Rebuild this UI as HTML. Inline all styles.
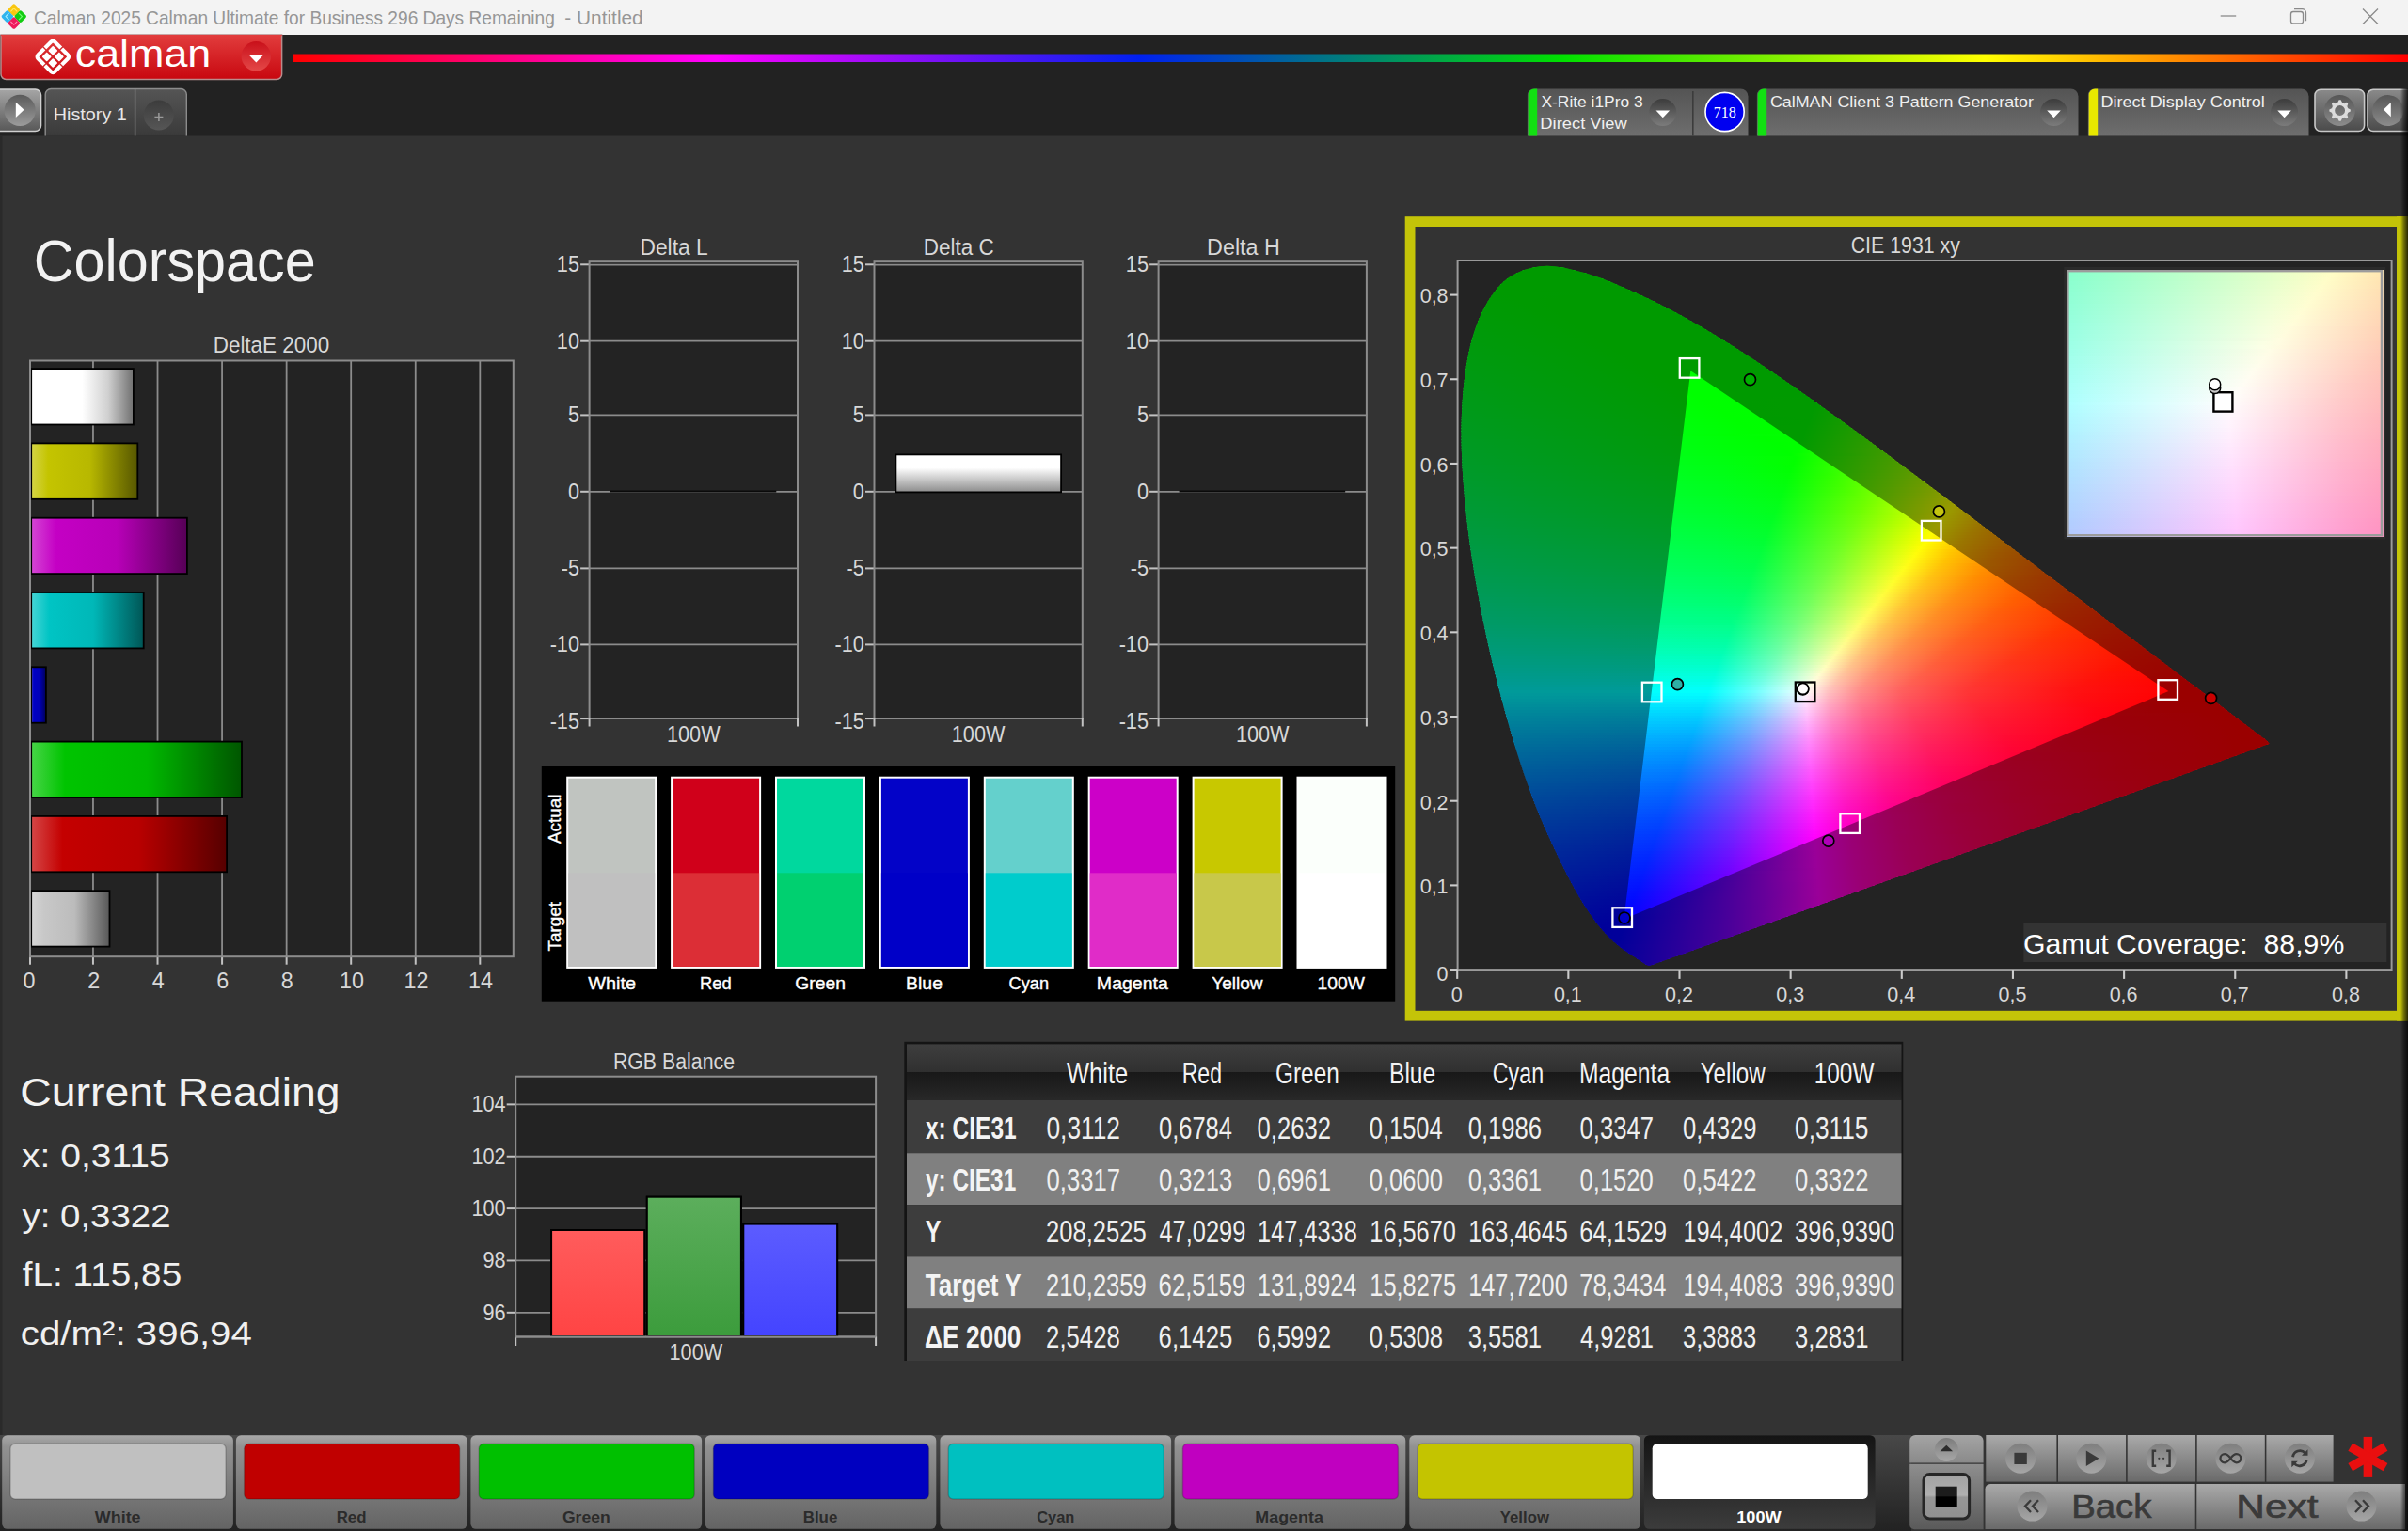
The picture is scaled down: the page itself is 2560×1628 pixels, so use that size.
<!DOCTYPE html><html><head><meta charset="utf-8"><title>Calman</title><style>html,body{margin:0;padding:0;background:#333;overflow:hidden}svg{display:block}</style></head><body><svg width="2560" height="1628" viewBox="0 0 2560 1628" font-family="'Liberation Sans', sans-serif"><defs><linearGradient id="g1" x1="0" y1="0" x2="1" y2="0"><stop offset="0" stop-color="#ff0000"/><stop offset="0.2" stop-color="#ff00ff"/><stop offset="0.4" stop-color="#0020f0"/><stop offset="0.6" stop-color="#00e000"/><stop offset="0.8" stop-color="#ffff00"/><stop offset="1" stop-color="#ff0000"/></linearGradient><linearGradient id="g2" x1="0" y1="0" x2="0" y2="1"><stop offset="0" stop-color="#e23d3d"/><stop offset="1" stop-color="#c8070f"/></linearGradient><linearGradient id="g3" x1="0" y1="0" x2="0" y2="1"><stop offset="0" stop-color="#c9101a"/><stop offset="1" stop-color="#e44848"/></linearGradient><linearGradient id="g4" x1="0" y1="0" x2="0" y2="1"><stop offset="0" stop-color="#a6a6a6"/><stop offset="1" stop-color="#585858"/></linearGradient><linearGradient id="g5" x1="0" y1="0" x2="0" y2="1"><stop offset="0" stop-color="#5a5a5a"/><stop offset="1" stop-color="#9c9c9c"/></linearGradient><linearGradient id="g6" x1="0" y1="0" x2="0" y2="1"><stop offset="0" stop-color="#555555"/><stop offset="1" stop-color="#3a3a3a"/></linearGradient><linearGradient id="g7" x1="0" y1="0" x2="0" y2="1"><stop offset="0" stop-color="#3c3c3c"/><stop offset="1" stop-color="#565656"/></linearGradient><linearGradient id="g8" x1="0" y1="0" x2="0" y2="1"><stop offset="0" stop-color="#545454"/><stop offset="1" stop-color="#6e6e6e"/></linearGradient><linearGradient id="g9" x1="0" y1="0" x2="0" y2="1"><stop offset="0" stop-color="#3c3c3c"/><stop offset="1" stop-color="#7c7c7c"/></linearGradient><linearGradient id="g10" x1="0" y1="0" x2="0" y2="1"><stop offset="0" stop-color="#545454"/><stop offset="1" stop-color="#6e6e6e"/></linearGradient><linearGradient id="g11" x1="0" y1="0" x2="0" y2="1"><stop offset="0" stop-color="#3c3c3c"/><stop offset="1" stop-color="#7c7c7c"/></linearGradient><linearGradient id="g12" x1="0" y1="0" x2="0" y2="1"><stop offset="0" stop-color="#545454"/><stop offset="1" stop-color="#6e6e6e"/></linearGradient><linearGradient id="g13" x1="0" y1="0" x2="0" y2="1"><stop offset="0" stop-color="#3c3c3c"/><stop offset="1" stop-color="#7c7c7c"/></linearGradient><linearGradient id="g14" x1="0" y1="0" x2="0" y2="1"><stop offset="0" stop-color="#8a8a8a"/><stop offset="1" stop-color="#4a4a4a"/></linearGradient><linearGradient id="g15" x1="0" y1="0" x2="0" y2="1"><stop offset="0" stop-color="#565656"/><stop offset="1" stop-color="#8c8c8c"/></linearGradient><linearGradient id="g16" x1="0" y1="0" x2="0" y2="1"><stop offset="0" stop-color="#8a8a8a"/><stop offset="1" stop-color="#4a4a4a"/></linearGradient><linearGradient id="g17" x1="0" y1="0" x2="0" y2="1"><stop offset="0" stop-color="#565656"/><stop offset="1" stop-color="#8c8c8c"/></linearGradient><linearGradient id="g18" x1="0" y1="0" x2="1" y2="0"><stop offset="0" stop-color="#ffffff"/><stop offset="0.5" stop-color="#ffffff"/><stop offset="0.75" stop-color="#d0d0d0"/><stop offset="1" stop-color="#707070"/></linearGradient><linearGradient id="g19" x1="0" y1="0" x2="1" y2="0"><stop offset="0" stop-color="#d5d547"/><stop offset="0.16" stop-color="#c4c400"/><stop offset="0.55" stop-color="#b8b800"/><stop offset="1" stop-color="#565600"/></linearGradient><linearGradient id="g20" x1="0" y1="0" x2="1" y2="0"><stop offset="0" stop-color="#d547d5"/><stop offset="0.16" stop-color="#c400c4"/><stop offset="0.55" stop-color="#b800b8"/><stop offset="1" stop-color="#560056"/></linearGradient><linearGradient id="g21" x1="0" y1="0" x2="1" y2="0"><stop offset="0" stop-color="#47d5d5"/><stop offset="0.16" stop-color="#00c4c4"/><stop offset="0.55" stop-color="#00b8b8"/><stop offset="1" stop-color="#005656"/></linearGradient><linearGradient id="g22" x1="0" y1="0" x2="1" y2="0"><stop offset="0" stop-color="#4747d5"/><stop offset="0.16" stop-color="#0000c4"/><stop offset="0.55" stop-color="#0000b8"/><stop offset="1" stop-color="#000056"/></linearGradient><linearGradient id="g23" x1="0" y1="0" x2="1" y2="0"><stop offset="0" stop-color="#47d547"/><stop offset="0.16" stop-color="#00c400"/><stop offset="0.55" stop-color="#00b800"/><stop offset="1" stop-color="#005600"/></linearGradient><linearGradient id="g24" x1="0" y1="0" x2="1" y2="0"><stop offset="0" stop-color="#d54747"/><stop offset="0.16" stop-color="#c40000"/><stop offset="0.55" stop-color="#b80000"/><stop offset="1" stop-color="#560000"/></linearGradient><linearGradient id="g25" x1="0" y1="0" x2="1" y2="0"><stop offset="0" stop-color="#d7d7d7"/><stop offset="0.16" stop-color="#c8c8c8"/><stop offset="0.55" stop-color="#bcbcbc"/><stop offset="1" stop-color="#585858"/></linearGradient><linearGradient id="g26" x1="0" y1="0" x2="0" y2="1"><stop offset="0" stop-color="#ffffff"/><stop offset="0.35" stop-color="#ffffff"/><stop offset="1" stop-color="#8c8c8c"/></linearGradient><clipPath id="loc"><path d="M1754.9 1026.62C1754.88 1026.62 1754.84 1026.6 1754.78 1026.62C1754.72 1026.63 1754.62 1026.69 1754.54 1026.71C1754.47 1026.72 1754.41 1026.69 1754.31 1026.71C1754.21 1026.72 1754.07 1026.78 1753.95 1026.79C1753.84 1026.81 1753.74 1026.79 1753.6 1026.79C1753.46 1026.79 1753.3 1026.79 1753.13 1026.79C1752.95 1026.79 1752.77 1026.84 1752.54 1026.79C1752.3 1026.75 1752.06 1026.68 1751.71 1026.53C1751.35 1026.38 1750.9 1026.17 1750.41 1025.9C1749.92 1025.63 1749.42 1025.33 1748.76 1024.91C1748.09 1024.49 1747.28 1023.98 1746.39 1023.39C1745.51 1022.79 1744.58 1022.1 1743.44 1021.32C1742.3 1020.55 1741.08 1019.74 1739.54 1018.72C1738 1017.71 1736.21 1016.56 1734.22 1015.22C1732.23 1013.89 1730.09 1012.53 1727.61 1010.74C1725.13 1008.95 1722.39 1007.03 1719.34 1004.46C1716.28 1001.89 1713.21 999.51 1709.29 995.31C1705.37 991.11 1700.92 986.27 1695.82 979.26C1690.72 972.25 1685.15 964.45 1678.69 953.25C1672.23 942.05 1665.12 929.11 1657.07 912.08C1649.02 895.06 1639.41 875.35 1630.37 851.09C1621.33 826.83 1611.74 798.2 1602.84 766.51C1593.94 734.82 1584.29 697.33 1576.97 660.95C1569.64 624.57 1562.75 584.4 1558.89 548.21C1555.03 512.02 1552.69 475.47 1553.81 443.81C1554.93 412.15 1558.73 381.74 1565.62 358.25C1572.51 334.75 1583.27 315.31 1595.16 302.82C1607.05 290.32 1622.16 285.39 1636.99 283.26C1651.81 281.14 1668.3 285.91 1684.13 290.08C1699.96 294.25 1716.48 301.62 1731.98 308.29C1747.48 314.96 1762.36 322.37 1777.11 330.08C1791.86 337.8 1806.12 346 1820.47 354.57C1834.83 363.13 1849.06 372.21 1863.24 381.48C1877.42 390.74 1891.46 400.4 1905.54 410.18C1919.62 419.95 1933.64 430 1947.72 440.13C1961.8 450.27 1975.96 460.63 1990.02 470.99C2004.08 481.35 2018.1 491.85 2032.08 502.29C2046.06 512.72 2060.1 523.22 2073.9 533.59C2087.71 543.96 2101.43 554.35 2114.9 564.53C2128.37 574.71 2141.72 584.83 2154.72 594.67C2167.72 604.5 2180.53 614.22 2192.88 623.55C2205.23 632.88 2217.36 641.98 2228.8 650.64C2240.24 659.29 2251.33 667.75 2261.53 675.48C2271.73 683.21 2281.08 690.26 2290 697C2298.92 703.75 2307.41 710.17 2315.05 715.93C2322.69 721.68 2329.56 726.8 2335.84 731.54C2342.12 736.27 2347.68 740.52 2352.74 744.36C2357.8 748.2 2362.17 751.54 2366.21 754.59C2370.24 757.64 2373.73 760.22 2376.96 762.66C2380.19 765.09 2382.95 767.2 2385.58 769.21C2388.22 771.21 2390.61 773.02 2392.79 774.68C2394.98 776.34 2396.93 777.83 2398.7 779.16C2400.47 780.49 2402.05 781.63 2403.42 782.66C2404.8 783.69 2405.93 784.56 2406.97 785.35C2408.01 786.14 2408.94 786.75 2409.69 787.41C2410.43 788.07 2410.95 788.73 2411.46 789.3C2411.97 789.86 2412.54 790.57 2412.76 790.82Z"/></clipPath><linearGradient id="c0" gradientUnits="userSpaceOnUse" x1="1625" x2="1666" y1="0" y2="0"><stop offset="0" stop-color="#00ff00"/><stop offset="1" stop-color="#00ff00"/></linearGradient><linearGradient id="c1" gradientUnits="userSpaceOnUse" x1="1615" x2="1679" y1="0" y2="0"><stop offset="0" stop-color="#00ff00"/><stop offset="1" stop-color="#00ff00"/></linearGradient><linearGradient id="c2" gradientUnits="userSpaceOnUse" x1="1609" x2="1690" y1="0" y2="0"><stop offset="0" stop-color="#00ff00"/><stop offset="1" stop-color="#00ff00"/></linearGradient><linearGradient id="c3" gradientUnits="userSpaceOnUse" x1="1603" x2="1699" y1="0" y2="0"><stop offset="0" stop-color="#00ff00"/><stop offset="1" stop-color="#00ff00"/></linearGradient><linearGradient id="c4" gradientUnits="userSpaceOnUse" x1="1599" x2="1707" y1="0" y2="0"><stop offset="0" stop-color="#00ff00"/><stop offset="1" stop-color="#00ff00"/></linearGradient><linearGradient id="c5" gradientUnits="userSpaceOnUse" x1="1596" x2="1715" y1="0" y2="0"><stop offset="0" stop-color="#00ff00"/><stop offset="1" stop-color="#00ff00"/></linearGradient><linearGradient id="c6" gradientUnits="userSpaceOnUse" x1="1592" x2="1722" y1="0" y2="0"><stop offset="0" stop-color="#00ff00"/><stop offset="1" stop-color="#00ff00"/></linearGradient><linearGradient id="c7" gradientUnits="userSpaceOnUse" x1="1590" x2="1729" y1="0" y2="0"><stop offset="0" stop-color="#00ff00"/><stop offset="1" stop-color="#00ff00"/></linearGradient><linearGradient id="c8" gradientUnits="userSpaceOnUse" x1="1587" x2="1736" y1="0" y2="0"><stop offset="0" stop-color="#00ff01"/><stop offset="1" stop-color="#00ff00"/></linearGradient><linearGradient id="c9" gradientUnits="userSpaceOnUse" x1="1585" x2="1743" y1="0" y2="0"><stop offset="0" stop-color="#00ff02"/><stop offset="1" stop-color="#00ff00"/></linearGradient><linearGradient id="c10" gradientUnits="userSpaceOnUse" x1="1583" x2="1749" y1="0" y2="0"><stop offset="0" stop-color="#00ff03"/><stop offset="1" stop-color="#00ff00"/></linearGradient><linearGradient id="c11" gradientUnits="userSpaceOnUse" x1="1581" x2="1756" y1="0" y2="0"><stop offset="0" stop-color="#00ff04"/><stop offset=".6" stop-color="#00ff00"/><stop offset="1" stop-color="#00ff00"/></linearGradient><linearGradient id="c12" gradientUnits="userSpaceOnUse" x1="1579" x2="1762" y1="0" y2="0"><stop offset="0" stop-color="#00ff05"/><stop offset=".459" stop-color="#00ff00"/><stop offset="1" stop-color="#00ff00"/></linearGradient><linearGradient id="c13" gradientUnits="userSpaceOnUse" x1="1577" x2="1768" y1="0" y2="0"><stop offset="0" stop-color="#00ff06"/><stop offset=".4293" stop-color="#00ff00"/><stop offset="1" stop-color="#00ff00"/></linearGradient><linearGradient id="c14" gradientUnits="userSpaceOnUse" x1="1576" x2="1774" y1="0" y2="0"><stop offset="0" stop-color="#00ff07"/><stop offset=".4192" stop-color="#00ff00"/><stop offset="1" stop-color="#00ff00"/></linearGradient><linearGradient id="c15" gradientUnits="userSpaceOnUse" x1="1574" x2="1779" y1="0" y2="0"><stop offset="0" stop-color="#00ff08"/><stop offset=".4244" stop-color="#00ff00"/><stop offset="1" stop-color="#00ff00"/></linearGradient><linearGradient id="c16" gradientUnits="userSpaceOnUse" x1="1573" x2="1785" y1="0" y2="0"><stop offset="0" stop-color="#00ff09"/><stop offset=".4292" stop-color="#00ff00"/><stop offset="1" stop-color="#00ff00"/></linearGradient><linearGradient id="c17" gradientUnits="userSpaceOnUse" x1="1571" x2="1791" y1="0" y2="0"><stop offset="0" stop-color="#00ff0a"/><stop offset=".4364" stop-color="#00ff00"/><stop offset="1" stop-color="#00ff00"/></linearGradient><linearGradient id="c18" gradientUnits="userSpaceOnUse" x1="1570" x2="1796" y1="0" y2="0"><stop offset="0" stop-color="#00ff0b"/><stop offset=".4469" stop-color="#00ff00"/><stop offset="1" stop-color="#00ff00"/></linearGradient><linearGradient id="c19" gradientUnits="userSpaceOnUse" x1="1569" x2="1801" y1="0" y2="0"><stop offset="0" stop-color="#00ff0c"/><stop offset=".4569" stop-color="#00ff00"/><stop offset="1" stop-color="#00ff00"/></linearGradient><linearGradient id="c20" gradientUnits="userSpaceOnUse" x1="1568" x2="1807" y1="0" y2="0"><stop offset="0" stop-color="#00ff0d"/><stop offset=".4644" stop-color="#00ff00"/><stop offset="1" stop-color="#00ff00"/></linearGradient><linearGradient id="c21" gradientUnits="userSpaceOnUse" x1="1566" x2="1812" y1="0" y2="0"><stop offset="0" stop-color="#00ff0e"/><stop offset=".4797" stop-color="#00ff00"/><stop offset="1" stop-color="#00ff00"/></linearGradient><linearGradient id="c22" gradientUnits="userSpaceOnUse" x1="1565" x2="1817" y1="0" y2="0"><stop offset="0" stop-color="#00ff0f"/><stop offset=".4881" stop-color="#00ff00"/><stop offset="1" stop-color="#00ff00"/></linearGradient><linearGradient id="c23" gradientUnits="userSpaceOnUse" x1="1564" x2="1822" y1="0" y2="0"><stop offset="0" stop-color="#00ff10"/><stop offset=".5" stop-color="#00ff00"/><stop offset="1" stop-color="#00ff00"/></linearGradient><linearGradient id="c24" gradientUnits="userSpaceOnUse" x1="1564" x2="1827" y1="0" y2="0"><stop offset="0" stop-color="#00ff11"/><stop offset=".5057" stop-color="#00ff00"/><stop offset="1" stop-color="#00ff00"/></linearGradient><linearGradient id="c25" gradientUnits="userSpaceOnUse" x1="1563" x2="1832" y1="0" y2="0"><stop offset="0" stop-color="#00ff12"/><stop offset=".5167" stop-color="#00ff00"/><stop offset="1" stop-color="#00ff00"/></linearGradient><linearGradient id="c26" gradientUnits="userSpaceOnUse" x1="1562" x2="1837" y1="0" y2="0"><stop offset="0" stop-color="#00ff13"/><stop offset=".5273" stop-color="#00ff00"/><stop offset="1" stop-color="#00ff00"/></linearGradient><linearGradient id="c27" gradientUnits="userSpaceOnUse" x1="1561" x2="1842" y1="0" y2="0"><stop offset="0" stop-color="#00ff14"/><stop offset=".5338" stop-color="#00ff00"/><stop offset="1" stop-color="#00ff00"/></linearGradient><linearGradient id="c28" gradientUnits="userSpaceOnUse" x1="1560" x2="1846" y1="0" y2="0"><stop offset="0" stop-color="#00ff15"/><stop offset=".5455" stop-color="#00ff00"/><stop offset="1" stop-color="#00ff00"/></linearGradient><linearGradient id="c29" gradientUnits="userSpaceOnUse" x1="1560" x2="1851" y1="0" y2="0"><stop offset="0" stop-color="#00ff16"/><stop offset=".5533" stop-color="#00ff00"/><stop offset="1" stop-color="#00ff00"/></linearGradient><linearGradient id="c30" gradientUnits="userSpaceOnUse" x1="1559" x2="1856" y1="0" y2="0"><stop offset="0" stop-color="#00ff17"/><stop offset=".5623" stop-color="#00ff00"/><stop offset="1" stop-color="#00ff00"/></linearGradient><linearGradient id="c31" gradientUnits="userSpaceOnUse" x1="1558" x2="1860" y1="0" y2="0"><stop offset="0" stop-color="#00ff18"/><stop offset=".5695" stop-color="#00ff00"/><stop offset="1" stop-color="#00ff00"/></linearGradient><linearGradient id="c32" gradientUnits="userSpaceOnUse" x1="1558" x2="1865" y1="0" y2="0"><stop offset="0" stop-color="#00ff19"/><stop offset=".5765" stop-color="#00ff00"/><stop offset="1" stop-color="#00ff00"/></linearGradient><linearGradient id="c33" gradientUnits="userSpaceOnUse" x1="1557" x2="1870" y1="0" y2="0"><stop offset="0" stop-color="#00ff1a"/><stop offset=".5847" stop-color="#00ff00"/><stop offset="1" stop-color="#00ff00"/></linearGradient><linearGradient id="c34" gradientUnits="userSpaceOnUse" x1="1557" x2="1874" y1="0" y2="0"><stop offset="0" stop-color="#00ff1b"/><stop offset=".5931" stop-color="#00ff00"/><stop offset="1" stop-color="#00ff00"/></linearGradient><linearGradient id="c35" gradientUnits="userSpaceOnUse" x1="1556" x2="1879" y1="0" y2="0"><stop offset="0" stop-color="#00ff1c"/><stop offset=".5975" stop-color="#00ff00"/><stop offset="1" stop-color="#00ff00"/></linearGradient><linearGradient id="c36" gradientUnits="userSpaceOnUse" x1="1556" x2="1883" y1="0" y2="0"><stop offset="0" stop-color="#00ff1d"/><stop offset=".6055" stop-color="#00ff00"/><stop offset="1" stop-color="#00ff00"/></linearGradient><linearGradient id="c37" gradientUnits="userSpaceOnUse" x1="1555" x2="1887" y1="0" y2="0"><stop offset="0" stop-color="#00ff1e"/><stop offset=".6145" stop-color="#00ff00"/><stop offset="1" stop-color="#00ff00"/></linearGradient><linearGradient id="c38" gradientUnits="userSpaceOnUse" x1="1555" x2="1892" y1="0" y2="0"><stop offset="0" stop-color="#00ff1f"/><stop offset=".6202" stop-color="#00ff00"/><stop offset="1" stop-color="#00ff00"/></linearGradient><linearGradient id="c39" gradientUnits="userSpaceOnUse" x1="1555" x2="1896" y1="0" y2="0"><stop offset="0" stop-color="#00ff20"/><stop offset=".6276" stop-color="#00ff00"/><stop offset="1" stop-color="#00ff00"/></linearGradient><linearGradient id="c40" gradientUnits="userSpaceOnUse" x1="1554" x2="1901" y1="0" y2="0"><stop offset="0" stop-color="#00ff21"/><stop offset=".6311" stop-color="#00ff00"/><stop offset="1" stop-color="#00ff00"/></linearGradient><linearGradient id="c41" gradientUnits="userSpaceOnUse" x1="1554" x2="1905" y1="0" y2="0"><stop offset="0" stop-color="#00ff22"/><stop offset=".6382" stop-color="#00ff00"/><stop offset="1" stop-color="#00ff00"/></linearGradient><linearGradient id="c42" gradientUnits="userSpaceOnUse" x1="1554" x2="1909" y1="0" y2="0"><stop offset="0" stop-color="#00ff23"/><stop offset=".6451" stop-color="#00ff00"/><stop offset="1" stop-color="#00ff00"/></linearGradient><linearGradient id="c43" gradientUnits="userSpaceOnUse" x1="1553" x2="1914" y1="0" y2="0"><stop offset="0" stop-color="#00ff24"/><stop offset=".651" stop-color="#00ff00"/><stop offset="1" stop-color="#00ff00"/></linearGradient><linearGradient id="c44" gradientUnits="userSpaceOnUse" x1="1553" x2="1918" y1="0" y2="0"><stop offset="0" stop-color="#00ff25"/><stop offset=".6575" stop-color="#00ff00"/><stop offset="1" stop-color="#00ff00"/></linearGradient><linearGradient id="c45" gradientUnits="userSpaceOnUse" x1="1553" x2="1922" y1="0" y2="0"><stop offset="0" stop-color="#00ff26"/><stop offset=".664" stop-color="#00ff00"/><stop offset="1" stop-color="#00ff00"/></linearGradient><linearGradient id="c46" gradientUnits="userSpaceOnUse" x1="1552" x2="1926" y1="0" y2="0"><stop offset="0" stop-color="#00ff27"/><stop offset=".6684" stop-color="#00ff00"/><stop offset="1" stop-color="#00ff00"/></linearGradient><linearGradient id="c47" gradientUnits="userSpaceOnUse" x1="1552" x2="1931" y1="0" y2="0"><stop offset="0" stop-color="#00ff28"/><stop offset=".6728" stop-color="#00ff00"/><stop offset="1" stop-color="#02ff00"/></linearGradient><linearGradient id="c48" gradientUnits="userSpaceOnUse" x1="1552" x2="1935" y1="0" y2="0"><stop offset="0" stop-color="#00ff29"/><stop offset=".6789" stop-color="#00ff00"/><stop offset=".9896" stop-color="#03ff00"/><stop offset="1" stop-color="#06ff00"/></linearGradient><linearGradient id="c49" gradientUnits="userSpaceOnUse" x1="1552" x2="1939" y1="0" y2="0"><stop offset="0" stop-color="#00ff2a"/><stop offset=".6848" stop-color="#00ff00"/><stop offset=".9767" stop-color="#03ff00"/><stop offset="1" stop-color="#0aff00"/></linearGradient><linearGradient id="c50" gradientUnits="userSpaceOnUse" x1="1552" x2="1943" y1="0" y2="0"><stop offset="0" stop-color="#00ff2b"/><stop offset=".6905" stop-color="#00ff00"/><stop offset=".9642" stop-color="#03ff00"/><stop offset="1" stop-color="#0fff00"/></linearGradient><linearGradient id="c51" gradientUnits="userSpaceOnUse" x1="1552" x2="1947" y1="0" y2="0"><stop offset="0" stop-color="#00ff2c"/><stop offset=".6962" stop-color="#00ff00"/><stop offset=".9519" stop-color="#03ff00"/><stop offset="1" stop-color="#14ff00"/></linearGradient><linearGradient id="c52" gradientUnits="userSpaceOnUse" x1="1551" x2="1951" y1="0" y2="0"><stop offset="0" stop-color="#00ff2d"/><stop offset=".7025" stop-color="#00ff00"/><stop offset=".94" stop-color="#03ff00"/><stop offset="1" stop-color="#18ff00"/></linearGradient><linearGradient id="c53" gradientUnits="userSpaceOnUse" x1="1551" x2="1956" y1="0" y2="0"><stop offset="0" stop-color="#00ff2e"/><stop offset=".7037" stop-color="#00ff00"/><stop offset=".9259" stop-color="#03ff00"/><stop offset="1" stop-color="#1eff00"/></linearGradient><linearGradient id="c54" gradientUnits="userSpaceOnUse" x1="1551" x2="1960" y1="0" y2="0"><stop offset="0" stop-color="#00ff2f"/><stop offset=".709" stop-color="#00ff00"/><stop offset=".912" stop-color="#02ff00"/><stop offset="1" stop-color="#23ff00"/></linearGradient><linearGradient id="c55" gradientUnits="userSpaceOnUse" x1="1551" x2="1964" y1="0" y2="0"><stop offset="0" stop-color="#00ff31"/><stop offset=".7143" stop-color="#00ff00"/><stop offset=".9007" stop-color="#02ff00"/><stop offset="1" stop-color="#28ff00"/></linearGradient><linearGradient id="c56" gradientUnits="userSpaceOnUse" x1="1551" x2="1968" y1="0" y2="0"><stop offset="0" stop-color="#00ff32"/><stop offset=".7194" stop-color="#00ff00"/><stop offset=".8897" stop-color="#02ff00"/><stop offset="1" stop-color="#2dff00"/></linearGradient><linearGradient id="c57" gradientUnits="userSpaceOnUse" x1="1551" x2="1972" y1="0" y2="0"><stop offset="0" stop-color="#00ff33"/><stop offset=".7245" stop-color="#00ff00"/><stop offset=".8789" stop-color="#03ff00"/><stop offset="1" stop-color="#33ff00"/></linearGradient><linearGradient id="c58" gradientUnits="userSpaceOnUse" x1="1551" x2="1976" y1="0" y2="0"><stop offset="0" stop-color="#00ff34"/><stop offset=".7294" stop-color="#00ff00"/><stop offset=".8682" stop-color="#03ff00"/><stop offset="1" stop-color="#38ff00"/></linearGradient><linearGradient id="c59" gradientUnits="userSpaceOnUse" x1="1551" x2="1980" y1="0" y2="0"><stop offset="0" stop-color="#00ff35"/><stop offset=".7319" stop-color="#00ff00"/><stop offset=".8578" stop-color="#03ff00"/><stop offset="1" stop-color="#3dff00"/></linearGradient><linearGradient id="c60" gradientUnits="userSpaceOnUse" x1="1551" x2="1984" y1="0" y2="0"><stop offset="0" stop-color="#00ff36"/><stop offset=".6721" stop-color="#00ff03"/><stop offset=".8476" stop-color="#03ff00"/><stop offset="1" stop-color="#43ff00"/></linearGradient><linearGradient id="c61" gradientUnits="userSpaceOnUse" x1="1551" x2="1988" y1="0" y2="0"><stop offset="0" stop-color="#00ff37"/><stop offset=".7414" stop-color="#00ff00"/><stop offset=".8375" stop-color="#03ff00"/><stop offset="1" stop-color="#49ff00"/></linearGradient><linearGradient id="c62" gradientUnits="userSpaceOnUse" x1="1551" x2="1993" y1="0" y2="0"><stop offset="0" stop-color="#00ff39"/><stop offset=".7443" stop-color="#00ff00"/><stop offset=".8258" stop-color="#03ff00"/><stop offset="1" stop-color="#50ff00"/></linearGradient><linearGradient id="c63" gradientUnits="userSpaceOnUse" x1="1551" x2="1997" y1="0" y2="0"><stop offset="0" stop-color="#00ff3a"/><stop offset=".6457" stop-color="#00ff07"/><stop offset=".7623" stop-color="#00ff00"/><stop offset=".8161" stop-color="#03ff00"/><stop offset="1" stop-color="#56ff00"/></linearGradient><linearGradient id="c64" gradientUnits="userSpaceOnUse" x1="1551" x2="2001" y1="0" y2="0"><stop offset="0" stop-color="#00ff3b"/><stop offset=".64" stop-color="#00ff08"/><stop offset=".76" stop-color="#00ff00"/><stop offset=".8067" stop-color="#03ff00"/><stop offset="1" stop-color="#5cff00"/></linearGradient><linearGradient id="c65" gradientUnits="userSpaceOnUse" x1="1551" x2="2005" y1="0" y2="0"><stop offset="0" stop-color="#00ff3c"/><stop offset=".6322" stop-color="#00ff09"/><stop offset=".7599" stop-color="#00ff00"/><stop offset=".7974" stop-color="#03ff00"/><stop offset="1" stop-color="#63ff00"/></linearGradient><linearGradient id="c66" gradientUnits="userSpaceOnUse" x1="1551" x2="2009" y1="0" y2="0"><stop offset="0" stop-color="#00ff3e"/><stop offset=".6245" stop-color="#00ff0b"/><stop offset=".762" stop-color="#00ff00"/><stop offset=".7904" stop-color="#05ff00"/><stop offset="1" stop-color="#69ff00"/></linearGradient><linearGradient id="c67" gradientUnits="userSpaceOnUse" x1="1551" x2="2013" y1="0" y2="0"><stop offset="0" stop-color="#00ff3f"/><stop offset=".6169" stop-color="#00ff0c"/><stop offset=".7641" stop-color="#00ff00"/><stop offset=".9004" stop-color="#3cff00"/><stop offset="1" stop-color="#70ff00"/></linearGradient><linearGradient id="c68" gradientUnits="userSpaceOnUse" x1="1552" x2="2017" y1="0" y2="0"><stop offset="0" stop-color="#00ff40"/><stop offset=".6108" stop-color="#00ff0e"/><stop offset=".7677" stop-color="#03ff00"/><stop offset=".9871" stop-color="#6fff00"/><stop offset="1" stop-color="#77ff00"/></linearGradient><linearGradient id="c69" gradientUnits="userSpaceOnUse" x1="1552" x2="2021" y1="0" y2="0"><stop offset="0" stop-color="#00ff41"/><stop offset=".6055" stop-color="#00ff0f"/><stop offset=".7591" stop-color="#03ff00"/><stop offset=".9765" stop-color="#70ff00"/><stop offset="1" stop-color="#7eff00"/></linearGradient><linearGradient id="c70" gradientUnits="userSpaceOnUse" x1="1552" x2="2025" y1="0" y2="0"><stop offset="0" stop-color="#00ff42"/><stop offset=".5983" stop-color="#00ff10"/><stop offset=".7505" stop-color="#03ff00"/><stop offset=".9641" stop-color="#70ff00"/><stop offset="1" stop-color="#85ff00"/></linearGradient><linearGradient id="c71" gradientUnits="userSpaceOnUse" x1="1552" x2="2029" y1="0" y2="0"><stop offset="0" stop-color="#00ff44"/><stop offset=".5912" stop-color="#00ff12"/><stop offset=".74" stop-color="#02ff01"/><stop offset=".9518" stop-color="#70ff00"/><stop offset="1" stop-color="#8cff00"/></linearGradient><linearGradient id="c72" gradientUnits="userSpaceOnUse" x1="1552" x2="2033" y1="0" y2="0"><stop offset="0" stop-color="#00ff45"/><stop offset=".5863" stop-color="#00ff13"/><stop offset=".7318" stop-color="#02ff02"/><stop offset=".9397" stop-color="#6fff00"/><stop offset="1" stop-color="#94ff00"/></linearGradient><linearGradient id="c73" gradientUnits="userSpaceOnUse" x1="1552" x2="2037" y1="0" y2="0"><stop offset="0" stop-color="#00ff46"/><stop offset=".5794" stop-color="#00ff15"/><stop offset=".7237" stop-color="#02ff04"/><stop offset=".8577" stop-color="#47ff00"/><stop offset="1" stop-color="#9cff00"/></linearGradient><linearGradient id="c74" gradientUnits="userSpaceOnUse" x1="1552" x2="2041" y1="0" y2="0"><stop offset="0" stop-color="#00ff48"/><stop offset=".5726" stop-color="#00ff16"/><stop offset=".7157" stop-color="#03ff06"/><stop offset=".8098" stop-color="#32ff00"/><stop offset=".998" stop-color="#a2ff00"/><stop offset="1" stop-color="#a4ff00"/></linearGradient><linearGradient id="c75" gradientUnits="userSpaceOnUse" x1="1553" x2="2045" y1="0" y2="0"><stop offset="0" stop-color="#00ff49"/><stop offset=".5671" stop-color="#00ff18"/><stop offset=".7073" stop-color="#03ff07"/><stop offset=".8008" stop-color="#33ff00"/><stop offset=".9858" stop-color="#a2ff00"/><stop offset="1" stop-color="#acff00"/></linearGradient><linearGradient id="c76" gradientUnits="userSpaceOnUse" x1="1553" x2="2049" y1="0" y2="0"><stop offset="0" stop-color="#00ff4a"/><stop offset=".5625" stop-color="#00ff19"/><stop offset=".6996" stop-color="#03ff09"/><stop offset=".8004" stop-color="#38ff00"/><stop offset=".9819" stop-color="#a8ff00"/><stop offset="1" stop-color="#b4ff00"/></linearGradient><linearGradient id="c77" gradientUnits="userSpaceOnUse" x1="1553" x2="2053" y1="0" y2="0"><stop offset="0" stop-color="#00ff4c"/><stop offset=".556" stop-color="#00ff1b"/><stop offset=".692" stop-color="#03ff0a"/><stop offset=".8" stop-color="#3dff00"/><stop offset=".978" stop-color="#adff00"/><stop offset="1" stop-color="#bdff00"/></linearGradient><linearGradient id="c78" gradientUnits="userSpaceOnUse" x1="1553" x2="2057" y1="0" y2="0"><stop offset="0" stop-color="#00ff4d"/><stop offset=".5496" stop-color="#00ff1d"/><stop offset=".6845" stop-color="#03ff0c"/><stop offset=".8016" stop-color="#43ff00"/><stop offset=".9742" stop-color="#b3ff00"/><stop offset="1" stop-color="#c6ff00"/></linearGradient><linearGradient id="c79" gradientUnits="userSpaceOnUse" x1="1553" x2="2061" y1="0" y2="0"><stop offset="0" stop-color="#00ff4f"/><stop offset=".5453" stop-color="#00ff1e"/><stop offset=".6772" stop-color="#03ff0e"/><stop offset=".8031" stop-color="#4aff00"/><stop offset=".9724" stop-color="#bbff00"/><stop offset="1" stop-color="#cfff00"/></linearGradient><linearGradient id="c80" gradientUnits="userSpaceOnUse" x1="1554" x2="2065" y1="0" y2="0"><stop offset="0" stop-color="#00ff50"/><stop offset=".5401" stop-color="#00ff20"/><stop offset=".6673" stop-color="#02ff10"/><stop offset=".8063" stop-color="#51ff00"/><stop offset=".9706" stop-color="#c2ff00"/><stop offset="1" stop-color="#d9ff00"/></linearGradient><linearGradient id="c81" gradientUnits="userSpaceOnUse" x1="1554" x2="2069" y1="0" y2="0"><stop offset="0" stop-color="#00ff51"/><stop offset=".534" stop-color="#00ff21"/><stop offset=".6602" stop-color="#02ff12"/><stop offset=".8078" stop-color="#58ff00"/><stop offset=".9689" stop-color="#caff00"/><stop offset="1" stop-color="#e3ff00"/></linearGradient><linearGradient id="c82" gradientUnits="userSpaceOnUse" x1="1554" x2="2073" y1="0" y2="0"><stop offset="0" stop-color="#00ff53"/><stop offset=".5299" stop-color="#00ff23"/><stop offset=".6532" stop-color="#02ff13"/><stop offset=".8112" stop-color="#61ff00"/><stop offset=".9672" stop-color="#d2ff00"/><stop offset="1" stop-color="#edff00"/></linearGradient><linearGradient id="c83" gradientUnits="userSpaceOnUse" x1="1554" x2="2077" y1="0" y2="0"><stop offset="0" stop-color="#00ff54"/><stop offset=".5239" stop-color="#00ff25"/><stop offset=".6463" stop-color="#03ff15"/><stop offset=".8145" stop-color="#69ff00"/><stop offset=".9675" stop-color="#dcff00"/><stop offset="1" stop-color="#f7ff00"/></linearGradient><linearGradient id="c84" gradientUnits="userSpaceOnUse" x1="1555" x2="2081" y1="0" y2="0"><stop offset="0" stop-color="#00ff56"/><stop offset=".519" stop-color="#00ff26"/><stop offset=".6388" stop-color="#03ff17"/><stop offset=".8137" stop-color="#6fff00"/><stop offset=".9639" stop-color="#e2ff00"/><stop offset="1" stop-color="#fffc00"/></linearGradient><linearGradient id="c85" gradientUnits="userSpaceOnUse" x1="1555" x2="2085" y1="0" y2="0"><stop offset="0" stop-color="#00ff57"/><stop offset=".5151" stop-color="#00ff28"/><stop offset=".6321" stop-color="#03ff19"/><stop offset=".8057" stop-color="#70ff00"/><stop offset=".9528" stop-color="#e3ff00"/><stop offset=".9868" stop-color="#fffd00"/><stop offset="1" stop-color="#fff200"/></linearGradient><linearGradient id="c86" gradientUnits="userSpaceOnUse" x1="1555" x2="2089" y1="0" y2="0"><stop offset="0" stop-color="#00ff59"/><stop offset=".5094" stop-color="#00ff2a"/><stop offset=".6255" stop-color="#03ff1b"/><stop offset=".7959" stop-color="#70ff01"/><stop offset=".9419" stop-color="#e3ff00"/><stop offset=".9757" stop-color="#fffc00"/><stop offset="1" stop-color="#ffe800"/></linearGradient><linearGradient id="c87" gradientUnits="userSpaceOnUse" x1="1556" x2="2093" y1="0" y2="0"><stop offset="0" stop-color="#00ff5a"/><stop offset=".5047" stop-color="#00ff2b"/><stop offset=".6182" stop-color="#03ff1d"/><stop offset=".7858" stop-color="#6fff03"/><stop offset=".9292" stop-color="#e2ff00"/><stop offset=".9646" stop-color="#fffc00"/><stop offset="1" stop-color="#ffde00"/></linearGradient><linearGradient id="c88" gradientUnits="userSpaceOnUse" x1="1556" x2="2097" y1="0" y2="0"><stop offset="0" stop-color="#00ff5c"/><stop offset=".5009" stop-color="#00ff2d"/><stop offset=".61" stop-color="#02ff1f"/><stop offset=".7763" stop-color="#6fff05"/><stop offset=".8466" stop-color="#a5ff00"/><stop offset=".9519" stop-color="#fffd00"/><stop offset="1" stop-color="#ffd500"/></linearGradient><linearGradient id="c89" gradientUnits="userSpaceOnUse" x1="1556" x2="2101" y1="0" y2="0"><stop offset="0" stop-color="#00ff5d"/><stop offset=".4954" stop-color="#00ff2f"/><stop offset=".6037" stop-color="#02ff21"/><stop offset=".767" stop-color="#6fff08"/><stop offset=".8385" stop-color="#a7ff00"/><stop offset=".9413" stop-color="#fffc00"/><stop offset="1" stop-color="#ffcd00"/></linearGradient><linearGradient id="c90" gradientUnits="userSpaceOnUse" x1="1557" x2="2105" y1="0" y2="0"><stop offset="0" stop-color="#00ff5f"/><stop offset=".4909" stop-color="#00ff31"/><stop offset=".5967" stop-color="#02ff23"/><stop offset=".7591" stop-color="#70ff0a"/><stop offset=".8358" stop-color="#adff00"/><stop offset=".9288" stop-color="#fffd00"/><stop offset="1" stop-color="#ffc500"/></linearGradient><linearGradient id="c91" gradientUnits="userSpaceOnUse" x1="1557" x2="2109" y1="0" y2="0"><stop offset="0" stop-color="#00ff61"/><stop offset=".4873" stop-color="#00ff32"/><stop offset=".5906" stop-color="#02ff25"/><stop offset=".75" stop-color="#6fff0c"/><stop offset=".837" stop-color="#b6ff00"/><stop offset=".9185" stop-color="#fffc00"/><stop offset=".9928" stop-color="#ffc200"/><stop offset="1" stop-color="#ffbd00"/></linearGradient><linearGradient id="c92" gradientUnits="userSpaceOnUse" x1="1557" x2="2113" y1="0" y2="0"><stop offset="0" stop-color="#00ff62"/><stop offset=".482" stop-color="#00ff34"/><stop offset=".5845" stop-color="#03ff27"/><stop offset=".741" stop-color="#6fff0e"/><stop offset=".8381" stop-color="#c0ff00"/><stop offset=".9065" stop-color="#fffd00"/><stop offset=".9784" stop-color="#ffc300"/><stop offset="1" stop-color="#ffb600"/></linearGradient><linearGradient id="c93" gradientUnits="userSpaceOnUse" x1="1558" x2="2117" y1="0" y2="0"><stop offset="0" stop-color="#00ff64"/><stop offset=".4794" stop-color="#00ff36"/><stop offset=".5778" stop-color="#03ff29"/><stop offset=".7335" stop-color="#70ff11"/><stop offset=".8408" stop-color="#ccff00"/><stop offset=".8962" stop-color="#fffd00"/><stop offset=".9678" stop-color="#ffc200"/><stop offset="1" stop-color="#ffae00"/></linearGradient><linearGradient id="c94" gradientUnits="userSpaceOnUse" x1="1558" x2="2121" y1="0" y2="0"><stop offset="0" stop-color="#00ff66"/><stop offset=".4742" stop-color="#00ff38"/><stop offset=".5719" stop-color="#03ff2b"/><stop offset=".7247" stop-color="#70ff13"/><stop offset=".8419" stop-color="#d6ff00"/><stop offset=".8863" stop-color="#fffc00"/><stop offset=".9574" stop-color="#ffc200"/><stop offset="1" stop-color="#ffa800"/></linearGradient><linearGradient id="c95" gradientUnits="userSpaceOnUse" x1="1558" x2="2125" y1="0" y2="0"><stop offset="0" stop-color="#00ff67"/><stop offset=".4709" stop-color="#00ff3a"/><stop offset=".5661" stop-color="#03ff2d"/><stop offset=".716" stop-color="#6fff16"/><stop offset=".8448" stop-color="#e2ff00"/><stop offset=".8748" stop-color="#fffd00"/><stop offset=".9436" stop-color="#ffc300"/><stop offset="1" stop-color="#ffa100"/></linearGradient><linearGradient id="c96" gradientUnits="userSpaceOnUse" x1="1559" x2="2129" y1="0" y2="0"><stop offset="0" stop-color="#00ff69"/><stop offset=".4667" stop-color="#00ff3c"/><stop offset=".5596" stop-color="#03ff2f"/><stop offset=".7088" stop-color="#70ff18"/><stop offset=".8351" stop-color="#e3ff00"/><stop offset=".8649" stop-color="#fffc00"/><stop offset=".9333" stop-color="#ffc200"/><stop offset="1" stop-color="#ff9b00"/></linearGradient><linearGradient id="c97" gradientUnits="userSpaceOnUse" x1="1559" x2="2133" y1="0" y2="0"><stop offset="0" stop-color="#00ff6b"/><stop offset=".4634" stop-color="#00ff3e"/><stop offset=".5523" stop-color="#02ff32"/><stop offset=".6986" stop-color="#6fff1b"/><stop offset=".824" stop-color="#e2ff02"/><stop offset=".8554" stop-color="#fffc00"/><stop offset=".9233" stop-color="#ffc100"/><stop offset="1" stop-color="#ff9500"/></linearGradient><linearGradient id="c98" gradientUnits="userSpaceOnUse" x1="1560" x2="2137" y1="0" y2="0"><stop offset="0" stop-color="#00ff6c"/><stop offset=".4593" stop-color="#00ff40"/><stop offset=".5459" stop-color="#02ff34"/><stop offset=".6915" stop-color="#70ff1d"/><stop offset=".8146" stop-color="#e2ff05"/><stop offset=".844" stop-color="#fffd00"/><stop offset=".9116" stop-color="#ffc200"/><stop offset="1" stop-color="#ff8f00"/></linearGradient><linearGradient id="c99" gradientUnits="userSpaceOnUse" x1="1560" x2="2140" y1="0" y2="0"><stop offset="0" stop-color="#00ff6e"/><stop offset=".4569" stop-color="#00ff42"/><stop offset=".5414" stop-color="#02ff36"/><stop offset=".6845" stop-color="#6fff20"/><stop offset=".8069" stop-color="#e3ff07"/><stop offset=".8362" stop-color="#fffc01"/><stop offset=".9034" stop-color="#ffc100"/><stop offset=".9948" stop-color="#ff8d00"/><stop offset="1" stop-color="#ff8a00"/></linearGradient><linearGradient id="c100" gradientUnits="userSpaceOnUse" x1="1560" x2="2144" y1="0" y2="0"><stop offset="0" stop-color="#00ff70"/><stop offset=".4521" stop-color="#00ff44"/><stop offset=".536" stop-color="#03ff39"/><stop offset=".6764" stop-color="#6fff22"/><stop offset=".7962" stop-color="#e1ff0b"/><stop offset=".8253" stop-color="#fffd04"/><stop offset=".8904" stop-color="#ffc300"/><stop offset=".9795" stop-color="#ff8e00"/><stop offset="1" stop-color="#ff8500"/></linearGradient><linearGradient id="c101" gradientUnits="userSpaceOnUse" x1="1561" x2="2148" y1="0" y2="0"><stop offset="0" stop-color="#00ff72"/><stop offset=".4497" stop-color="#00ff46"/><stop offset=".5298" stop-color="#03ff3b"/><stop offset=".6695" stop-color="#70ff25"/><stop offset=".7871" stop-color="#e2ff0d"/><stop offset=".816" stop-color="#fffc07"/><stop offset=".8671" stop-color="#ffcc00"/><stop offset=".9506" stop-color="#ff9700"/><stop offset="1" stop-color="#ff8000"/></linearGradient><linearGradient id="c102" gradientUnits="userSpaceOnUse" x1="1561" x2="2152" y1="0" y2="0"><stop offset="0" stop-color="#00ff74"/><stop offset=".4467" stop-color="#00ff48"/><stop offset=".5245" stop-color="#03ff3e"/><stop offset=".6616" stop-color="#70ff28"/><stop offset=".7783" stop-color="#e2ff10"/><stop offset=".8054" stop-color="#fffd0a"/><stop offset=".8646" stop-color="#ffc600"/><stop offset=".9509" stop-color="#ff9000"/><stop offset="1" stop-color="#ff7b00"/></linearGradient><linearGradient id="c103" gradientUnits="userSpaceOnUse" x1="1562" x2="2156" y1="0" y2="0"><stop offset="0" stop-color="#00ff75"/><stop offset=".4428" stop-color="#00ff4a"/><stop offset=".5185" stop-color="#03ff40"/><stop offset=".6532" stop-color="#6fff2a"/><stop offset=".7677" stop-color="#e1ff14"/><stop offset=".7963" stop-color="#fffd0d"/><stop offset=".8586" stop-color="#ffc300"/><stop offset=".9444" stop-color="#ff8e00"/><stop offset="1" stop-color="#ff7600"/></linearGradient><linearGradient id="c104" gradientUnits="userSpaceOnUse" x1="1562" x2="2160" y1="0" y2="0"><stop offset="0" stop-color="#00ff77"/><stop offset=".4398" stop-color="#00ff4c"/><stop offset=".5134" stop-color="#03ff42"/><stop offset=".6472" stop-color="#70ff2d"/><stop offset=".7609" stop-color="#e3ff16"/><stop offset=".7876" stop-color="#fffc10"/><stop offset=".8495" stop-color="#ffc201"/><stop offset=".9348" stop-color="#ff8d00"/><stop offset="1" stop-color="#ff7100"/></linearGradient><linearGradient id="c105" gradientUnits="userSpaceOnUse" x1="1563" x2="2164" y1="0" y2="0"><stop offset="0" stop-color="#00ff79"/><stop offset=".4359" stop-color="#00ff4f"/><stop offset=".5075" stop-color="#03ff45"/><stop offset=".6389" stop-color="#70ff30"/><stop offset=".7504" stop-color="#e2ff1a"/><stop offset=".777" stop-color="#fffd14"/><stop offset=".8386" stop-color="#ffc203"/><stop offset=".9235" stop-color="#ff8d00"/><stop offset="1" stop-color="#ff6d00"/></linearGradient><linearGradient id="c106" gradientUnits="userSpaceOnUse" x1="1563" x2="2168" y1="0" y2="0"><stop offset="0" stop-color="#00ff7b"/><stop offset=".4331" stop-color="#00ff51"/><stop offset=".5008" stop-color="#02ff48"/><stop offset=".6314" stop-color="#70ff33"/><stop offset=".7421" stop-color="#e2ff1d"/><stop offset=".7686" stop-color="#fffc17"/><stop offset=".8281" stop-color="#ffc206"/><stop offset=".886" stop-color="#ff9b00"/><stop offset=".9934" stop-color="#ff6b00"/><stop offset="1" stop-color="#ff6800"/></linearGradient><linearGradient id="c107" gradientUnits="userSpaceOnUse" x1="1564" x2="2172" y1="0" y2="0"><stop offset="0" stop-color="#00ff7d"/><stop offset=".4309" stop-color="#00ff53"/><stop offset=".4951" stop-color="#02ff4a"/><stop offset=".6234" stop-color="#6fff36"/><stop offset=".7319" stop-color="#e1ff20"/><stop offset=".7582" stop-color="#fffe1a"/><stop offset=".8174" stop-color="#ffc309"/><stop offset=".8816" stop-color="#ff9700"/><stop offset=".9901" stop-color="#ff6700"/><stop offset="1" stop-color="#ff6400"/></linearGradient><linearGradient id="c108" gradientUnits="userSpaceOnUse" x1="1564" x2="2176" y1="0" y2="0"><stop offset="0" stop-color="#00ff7f"/><stop offset=".4281" stop-color="#00ff55"/><stop offset=".4902" stop-color="#02ff4d"/><stop offset=".616" stop-color="#6fff39"/><stop offset=".7239" stop-color="#e2ff23"/><stop offset=".75" stop-color="#fffd1d"/><stop offset=".8088" stop-color="#ffc20b"/><stop offset=".8807" stop-color="#ff9200"/><stop offset=".9918" stop-color="#ff6300"/><stop offset="1" stop-color="#ff6000"/></linearGradient><linearGradient id="c109" gradientUnits="userSpaceOnUse" x1="1565" x2="2180" y1="0" y2="0"><stop offset="0" stop-color="#00ff81"/><stop offset=".4244" stop-color="#00ff58"/><stop offset=".4846" stop-color="#03ff50"/><stop offset=".6098" stop-color="#70ff3c"/><stop offset=".7154" stop-color="#e2ff27"/><stop offset=".7415" stop-color="#fffc20"/><stop offset=".8" stop-color="#ffc10e"/><stop offset=".8797" stop-color="#ff8d00"/><stop offset=".9951" stop-color="#ff5e00"/><stop offset="1" stop-color="#ff5c00"/></linearGradient><linearGradient id="c110" gradientUnits="userSpaceOnUse" x1="1565" x2="2184" y1="0" y2="0"><stop offset="0" stop-color="#00ff83"/><stop offset=".4216" stop-color="#00ff5a"/><stop offset=".4798" stop-color="#03ff52"/><stop offset=".6026" stop-color="#70ff3f"/><stop offset=".7076" stop-color="#e3ff2a"/><stop offset=".7318" stop-color="#fffd24"/><stop offset=".7884" stop-color="#ffc311"/><stop offset=".8659" stop-color="#ff8e00"/><stop offset=".9774" stop-color="#ff5f00"/><stop offset="1" stop-color="#ff5800"/></linearGradient><linearGradient id="c111" gradientUnits="userSpaceOnUse" x1="1566" x2="2188" y1="0" y2="0"><stop offset="0" stop-color="#00ff85"/><stop offset=".4196" stop-color="#00ff5d"/><stop offset=".4743" stop-color="#03ff55"/><stop offset=".5949" stop-color="#6fff42"/><stop offset=".6977" stop-color="#e1ff2e"/><stop offset=".7235" stop-color="#fffc28"/><stop offset=".7797" stop-color="#ffc214"/><stop offset=".8569" stop-color="#ff8d02"/><stop offset=".9678" stop-color="#ff5e00"/><stop offset="1" stop-color="#ff5400"/></linearGradient><linearGradient id="c112" gradientUnits="userSpaceOnUse" x1="1566" x2="2192" y1="0" y2="0"><stop offset="0" stop-color="#00ff87"/><stop offset=".4169" stop-color="#00ff5f"/><stop offset=".4696" stop-color="#03ff58"/><stop offset=".5895" stop-color="#70ff45"/><stop offset=".6917" stop-color="#e4ff31"/><stop offset=".7141" stop-color="#fffe2c"/><stop offset=".7684" stop-color="#ffc417"/><stop offset=".8435" stop-color="#ff8f05"/><stop offset=".9105" stop-color="#ff6f00"/><stop offset="1" stop-color="#ff5100"/></linearGradient><linearGradient id="c113" gradientUnits="userSpaceOnUse" x1="1567" x2="2196" y1="0" y2="0"><stop offset="0" stop-color="#00ff8a"/><stop offset=".4149" stop-color="#00ff61"/><stop offset=".4642" stop-color="#03ff5b"/><stop offset=".5819" stop-color="#70ff48"/><stop offset=".682" stop-color="#e2ff35"/><stop offset=".7059" stop-color="#fffd2f"/><stop offset=".7599" stop-color="#ffc31a"/><stop offset=".8347" stop-color="#ff8e07"/><stop offset=".9014" stop-color="#ff6e00"/><stop offset="1" stop-color="#ff4d00"/></linearGradient><linearGradient id="c114" gradientUnits="userSpaceOnUse" x1="1567" x2="2200" y1="0" y2="0"><stop offset="0" stop-color="#00ff8c"/><stop offset=".4123" stop-color="#00ff64"/><stop offset=".4597" stop-color="#03ff5e"/><stop offset=".575" stop-color="#6fff4b"/><stop offset=".6746" stop-color="#e3ff38"/><stop offset=".6983" stop-color="#fffc32"/><stop offset=".752" stop-color="#ffc21d"/><stop offset=".8262" stop-color="#ff8d09"/><stop offset=".9005" stop-color="#ff6a00"/><stop offset="1" stop-color="#ff4a00"/></linearGradient><linearGradient id="c115" gradientUnits="userSpaceOnUse" x1="1568" x2="2204" y1="0" y2="0"><stop offset="0" stop-color="#00ff8e"/><stop offset=".4104" stop-color="#00ff67"/><stop offset=".4528" stop-color="#02ff61"/><stop offset=".5676" stop-color="#6fff4f"/><stop offset=".6651" stop-color="#e1ff3c"/><stop offset=".6887" stop-color="#fffd36"/><stop offset=".7421" stop-color="#ffc220"/><stop offset=".816" stop-color="#ff8d0c"/><stop offset=".8994" stop-color="#ff6600"/><stop offset="1" stop-color="#ff4700"/></linearGradient><linearGradient id="c116" gradientUnits="userSpaceOnUse" x1="1568" x2="2208" y1="0" y2="0"><stop offset="0" stop-color="#00ff90"/><stop offset=".4078" stop-color="#00ff69"/><stop offset=".4484" stop-color="#02ff64"/><stop offset=".5609" stop-color="#6fff52"/><stop offset=".6578" stop-color="#e2ff40"/><stop offset=".6813" stop-color="#fffc3a"/><stop offset=".7328" stop-color="#ffc323"/><stop offset=".8047" stop-color="#ff8e0f"/><stop offset=".9" stop-color="#ff6200"/><stop offset="1" stop-color="#ff4400"/></linearGradient><linearGradient id="c117" gradientUnits="userSpaceOnUse" x1="1569" x2="2212" y1="0" y2="0"><stop offset="0" stop-color="#00ff92"/><stop offset=".4059" stop-color="#00ff6c"/><stop offset=".4432" stop-color="#02ff67"/><stop offset=".5552" stop-color="#70ff56"/><stop offset=".6501" stop-color="#e2ff43"/><stop offset=".6719" stop-color="#fffe3e"/><stop offset=".7232" stop-color="#ffc327"/><stop offset=".7932" stop-color="#ff8f11"/><stop offset=".8942" stop-color="#ff6000"/><stop offset="1" stop-color="#ff4000"/></linearGradient><linearGradient id="c118" gradientUnits="userSpaceOnUse" x1="1569" x2="2216" y1="0" y2="0"><stop offset="0" stop-color="#00ff95"/><stop offset=".4034" stop-color="#00ff6f"/><stop offset=".4389" stop-color="#03ff6a"/><stop offset=".5487" stop-color="#6fff59"/><stop offset=".6414" stop-color="#e1ff48"/><stop offset=".6646" stop-color="#fffd42"/><stop offset=".7156" stop-color="#ffc229"/><stop offset=".7852" stop-color="#ff8e14"/><stop offset=".8856" stop-color="#ff5f00"/><stop offset="1" stop-color="#ff3d00"/></linearGradient><linearGradient id="c119" gradientUnits="userSpaceOnUse" x1="1570" x2="2220" y1="0" y2="0"><stop offset="0" stop-color="#00ff97"/><stop offset=".4031" stop-color="#00ff71"/><stop offset=".4338" stop-color="#03ff6d"/><stop offset=".5415" stop-color="#6fff5d"/><stop offset=".6338" stop-color="#e2ff4b"/><stop offset=".6569" stop-color="#fffc46"/><stop offset=".7077" stop-color="#ffc12c"/><stop offset=".7769" stop-color="#ff8d16"/><stop offset=".8769" stop-color="#ff5e02"/><stop offset="1" stop-color="#ff3b00"/></linearGradient><linearGradient id="c120" gradientUnits="userSpaceOnUse" x1="1570" x2="2224" y1="0" y2="0"><stop offset="0" stop-color="#00ff9a"/><stop offset=".4006" stop-color="#00ff74"/><stop offset=".4297" stop-color="#03ff70"/><stop offset=".5367" stop-color="#70ff60"/><stop offset=".6269" stop-color="#e2ff4f"/><stop offset=".6483" stop-color="#fffd4a"/><stop offset=".6972" stop-color="#ffc330"/><stop offset=".7645" stop-color="#ff8e19"/><stop offset=".8609" stop-color="#ff6004"/><stop offset=".948" stop-color="#ff4400"/><stop offset="1" stop-color="#ff3800"/></linearGradient><linearGradient id="c121" gradientUnits="userSpaceOnUse" x1="1571" x2="2228" y1="0" y2="0"><stop offset="0" stop-color="#00ff9c"/><stop offset=".3988" stop-color="#00ff77"/><stop offset=".4247" stop-color="#03ff74"/><stop offset=".5297" stop-color="#70ff64"/><stop offset=".6195" stop-color="#e3ff53"/><stop offset=".6408" stop-color="#fffc4e"/><stop offset=".6895" stop-color="#ffc233"/><stop offset=".7565" stop-color="#ff8d1c"/><stop offset=".8524" stop-color="#ff5f06"/><stop offset=".9285" stop-color="#ff4600"/><stop offset="1" stop-color="#ff3500"/></linearGradient><linearGradient id="c122" gradientUnits="userSpaceOnUse" x1="1572" x2="2232" y1="0" y2="0"><stop offset="0" stop-color="#00ff9e"/><stop offset=".3985" stop-color="#00ff7a"/><stop offset=".4197" stop-color="#03ff77"/><stop offset=".5227" stop-color="#6fff68"/><stop offset=".6106" stop-color="#e1ff58"/><stop offset=".6318" stop-color="#fffe53"/><stop offset=".6788" stop-color="#ffc438"/><stop offset=".7439" stop-color="#ff8f1f"/><stop offset=".8379" stop-color="#ff6009"/><stop offset=".9212" stop-color="#ff4500"/><stop offset="1" stop-color="#ff3200"/></linearGradient><linearGradient id="c123" gradientUnits="userSpaceOnUse" x1="1572" x2="2236" y1="0" y2="0"><stop offset="0" stop-color="#00ffa1"/><stop offset=".3976" stop-color="#00ff7d"/><stop offset=".4157" stop-color="#03ff7a"/><stop offset=".5181" stop-color="#71ff6b"/><stop offset=".6054" stop-color="#e4ff5c"/><stop offset=".625" stop-color="#fffd57"/><stop offset=".6717" stop-color="#ffc33b"/><stop offset=".7364" stop-color="#ff8e22"/><stop offset=".8298" stop-color="#ff5f0b"/><stop offset=".9202" stop-color="#ff4200"/><stop offset="1" stop-color="#ff3000"/></linearGradient><linearGradient id="c124" gradientUnits="userSpaceOnUse" x1="1573" x2="2240" y1="0" y2="0"><stop offset="0" stop-color="#00ffa3"/><stop offset=".3958" stop-color="#00ff80"/><stop offset=".4108" stop-color="#04ff7e"/><stop offset=".5112" stop-color="#70ff6f"/><stop offset=".5967" stop-color="#e2ff60"/><stop offset=".6177" stop-color="#fffc5b"/><stop offset=".6642" stop-color="#ffc23e"/><stop offset=".7286" stop-color="#ff8d24"/><stop offset=".8216" stop-color="#ff5e0d"/><stop offset=".9205" stop-color="#ff3f00"/><stop offset="1" stop-color="#ff2d00"/></linearGradient><linearGradient id="c125" gradientUnits="userSpaceOnUse" x1="1573" x2="2244" y1="0" y2="0"><stop offset="0" stop-color="#00ffa6"/><stop offset=".3949" stop-color="#00ff83"/><stop offset=".4083" stop-color="#05ff81"/><stop offset=".5067" stop-color="#72ff73"/><stop offset=".5902" stop-color="#e3ff64"/><stop offset=".6095" stop-color="#fffd60"/><stop offset=".6557" stop-color="#ffc242"/><stop offset=".7183" stop-color="#ff8e27"/><stop offset=".8092" stop-color="#ff5f0f"/><stop offset=".921" stop-color="#ff3b00"/><stop offset="1" stop-color="#ff2a00"/></linearGradient><linearGradient id="c126" gradientUnits="userSpaceOnUse" x1="1574" x2="2248" y1="0" y2="0"><stop offset="0" stop-color="#00ffa9"/><stop offset=".3947" stop-color="#00ff86"/><stop offset=".4214" stop-color="#18ff83"/><stop offset=".5163" stop-color="#86ff75"/><stop offset=".5964" stop-color="#f8ff66"/><stop offset=".6039" stop-color="#fffa63"/><stop offset=".6499" stop-color="#ffc044"/><stop offset=".7136" stop-color="#ff8b29"/><stop offset=".8056" stop-color="#ff5c10"/><stop offset=".9228" stop-color="#ff3800"/><stop offset="1" stop-color="#ff2800"/></linearGradient><linearGradient id="c127" gradientUnits="userSpaceOnUse" x1="1574" x2="2252" y1="0" y2="0"><stop offset="0" stop-color="#00ffab"/><stop offset=".3938" stop-color="#00ff89"/><stop offset=".4882" stop-color="#69ff7c"/><stop offset=".5708" stop-color="#dbff6f"/><stop offset=".5944" stop-color="#fffe69"/><stop offset=".6386" stop-color="#ffc34a"/><stop offset=".6991" stop-color="#ff8f2e"/><stop offset=".7861" stop-color="#ff6014"/><stop offset=".9174" stop-color="#ff3700"/><stop offset="1" stop-color="#ff2600"/></linearGradient><linearGradient id="c128" gradientUnits="userSpaceOnUse" x1="1575" x2="2255" y1="0" y2="0"><stop offset="0" stop-color="#00ffae"/><stop offset=".3926" stop-color="#03ff8d"/><stop offset=".4882" stop-color="#70ff80"/><stop offset=".5691" stop-color="#e3ff72"/><stop offset=".5882" stop-color="#fffd6e"/><stop offset=".6324" stop-color="#ffc24d"/><stop offset=".6926" stop-color="#ff8e30"/><stop offset=".7794" stop-color="#ff5f16"/><stop offset=".9103" stop-color="#ff3600"/><stop offset="1" stop-color="#ff2400"/></linearGradient><linearGradient id="c129" gradientUnits="userSpaceOnUse" x1="1576" x2="2259" y1="0" y2="0"><stop offset="0" stop-color="#00ffb1"/><stop offset=".388" stop-color="#03ff91"/><stop offset=".4817" stop-color="#70ff84"/><stop offset=".5608" stop-color="#e1ff77"/><stop offset=".5813" stop-color="#fffc72"/><stop offset=".6252" stop-color="#ffc151"/><stop offset=".6852" stop-color="#ff8d33"/><stop offset=".7716" stop-color="#ff5e18"/><stop offset=".9019" stop-color="#ff3501"/><stop offset="1" stop-color="#ff2100"/></linearGradient><linearGradient id="c130" gradientUnits="userSpaceOnUse" x1="1576" x2="2263" y1="0" y2="0"><stop offset="0" stop-color="#00ffb4"/><stop offset=".3828" stop-color="#02ff95"/><stop offset=".4745" stop-color="#6dff89"/><stop offset=".5531" stop-color="#dfff7c"/><stop offset=".5735" stop-color="#fffd78"/><stop offset=".6157" stop-color="#ffc356"/><stop offset=".6739" stop-color="#ff8f37"/><stop offset=".7584" stop-color="#ff5f1c"/><stop offset=".885" stop-color="#ff3603"/><stop offset="1" stop-color="#ff1f00"/></linearGradient><linearGradient id="c131" gradientUnits="userSpaceOnUse" x1="1577" x2="2267" y1="0" y2="0"><stop offset="0" stop-color="#00ffb7"/><stop offset=".3783" stop-color="#02ff99"/><stop offset=".4696" stop-color="#6fff8d"/><stop offset=".5478" stop-color="#e2ff81"/><stop offset=".5667" stop-color="#fffc7c"/><stop offset=".6087" stop-color="#ffc259"/><stop offset=".6667" stop-color="#ff8e3a"/><stop offset=".7493" stop-color="#ff5f1e"/><stop offset=".8739" stop-color="#ff3605"/><stop offset=".9638" stop-color="#ff2300"/><stop offset="1" stop-color="#ff1d00"/></linearGradient><linearGradient id="c132" gradientUnits="userSpaceOnUse" x1="1578" x2="2271" y1="0" y2="0"><stop offset="0" stop-color="#00ffba"/><stop offset=".3737" stop-color="#02ff9d"/><stop offset=".4632" stop-color="#6eff92"/><stop offset=".5397" stop-color="#e0ff86"/><stop offset=".5584" stop-color="#fffe82"/><stop offset=".6003" stop-color="#ffc35e"/><stop offset=".658" stop-color="#ff8d3d"/><stop offset=".7403" stop-color="#ff5e20"/><stop offset=".8644" stop-color="#ff3507"/><stop offset=".9524" stop-color="#ff2300"/><stop offset="1" stop-color="#ff1b00"/></linearGradient><linearGradient id="c133" gradientUnits="userSpaceOnUse" x1="1578" x2="2275" y1="0" y2="0"><stop offset="0" stop-color="#00ffbd"/><stop offset=".3702" stop-color="#02ffa1"/><stop offset=".4591" stop-color="#70ff96"/><stop offset=".5337" stop-color="#e1ff8b"/><stop offset=".5524" stop-color="#fffd87"/><stop offset=".5925" stop-color="#ffc362"/><stop offset=".6485" stop-color="#ff8e41"/><stop offset=".7288" stop-color="#ff5f23"/><stop offset=".8494" stop-color="#ff3609"/><stop offset=".9469" stop-color="#ff2100"/><stop offset="1" stop-color="#ff1900"/></linearGradient><linearGradient id="c134" gradientUnits="userSpaceOnUse" x1="1579" x2="2279" y1="0" y2="0"><stop offset="0" stop-color="#00ffc0"/><stop offset=".3657" stop-color="#02ffa5"/><stop offset=".4529" stop-color="#6fff9b"/><stop offset=".5271" stop-color="#e2ff90"/><stop offset=".5457" stop-color="#fffc8c"/><stop offset=".5857" stop-color="#ffc266"/><stop offset=".6414" stop-color="#ff8d44"/><stop offset=".7214" stop-color="#ff5e25"/><stop offset=".8414" stop-color="#ff350b"/><stop offset=".9457" stop-color="#ff1f00"/><stop offset="1" stop-color="#ff1700"/></linearGradient><linearGradient id="c135" gradientUnits="userSpaceOnUse" x1="1580" x2="2283" y1="0" y2="0"><stop offset="0" stop-color="#00ffc3"/><stop offset=".3613" stop-color="#02ffa9"/><stop offset=".4467" stop-color="#6fffa0"/><stop offset=".5192" stop-color="#e0ff96"/><stop offset=".5377" stop-color="#fffd92"/><stop offset=".5775" stop-color="#ffc36b"/><stop offset=".6316" stop-color="#ff8e48"/><stop offset=".7098" stop-color="#ff5f29"/><stop offset=".8279" stop-color="#ff360d"/><stop offset=".9459" stop-color="#ff1d00"/><stop offset="1" stop-color="#ff1500"/></linearGradient><linearGradient id="c136" gradientUnits="userSpaceOnUse" x1="1580" x2="2287" y1="0" y2="0"><stop offset="0" stop-color="#00ffc6"/><stop offset=".3579" stop-color="#03ffae"/><stop offset=".4427" stop-color="#70ffa5"/><stop offset=".5149" stop-color="#e3ff9b"/><stop offset=".5318" stop-color="#fffc97"/><stop offset=".5714" stop-color="#ffc16f"/><stop offset=".6252" stop-color="#ff8d4b"/><stop offset=".703" stop-color="#ff5e2b"/><stop offset=".8204" stop-color="#ff350f"/><stop offset=".9463" stop-color="#ff1b00"/><stop offset="1" stop-color="#ff1300"/></linearGradient><linearGradient id="c137" gradientUnits="userSpaceOnUse" x1="1581" x2="2291" y1="0" y2="0"><stop offset="0" stop-color="#00ffc9"/><stop offset=".3535" stop-color="#03ffb2"/><stop offset=".4366" stop-color="#6fffaa"/><stop offset=".507" stop-color="#e1ffa1"/><stop offset=".5239" stop-color="#fffe9e"/><stop offset=".562" stop-color="#ffc475"/><stop offset=".6141" stop-color="#ff8f50"/><stop offset=".6887" stop-color="#ff602f"/><stop offset=".8014" stop-color="#ff3712"/><stop offset=".9451" stop-color="#ff1900"/><stop offset="1" stop-color="#ff1100"/></linearGradient><linearGradient id="c138" gradientUnits="userSpaceOnUse" x1="1582" x2="2295" y1="0" y2="0"><stop offset="0" stop-color="#00ffcc"/><stop offset=".3478" stop-color="#01ffb7"/><stop offset=".4292" stop-color="#6dffaf"/><stop offset=".4993" stop-color="#dfffa7"/><stop offset=".5175" stop-color="#fffda3"/><stop offset=".5554" stop-color="#ffc279"/><stop offset=".6073" stop-color="#ff8e53"/><stop offset=".6816" stop-color="#ff5f32"/><stop offset=".7938" stop-color="#ff3614"/><stop offset=".9453" stop-color="#ff1700"/><stop offset="1" stop-color="#ff0f00"/></linearGradient><linearGradient id="c139" gradientUnits="userSpaceOnUse" x1="1582" x2="2299" y1="0" y2="0"><stop offset="0" stop-color="#00ffd0"/><stop offset=".3445" stop-color="#02ffbc"/><stop offset=".4254" stop-color="#6effb4"/><stop offset=".4937" stop-color="#e0ffac"/><stop offset=".5119" stop-color="#fffca8"/><stop offset=".5495" stop-color="#ffc17d"/><stop offset=".6011" stop-color="#ff8d56"/><stop offset=".675" stop-color="#ff5e34"/><stop offset=".7866" stop-color="#ff3516"/><stop offset=".9456" stop-color="#ff1500"/><stop offset="1" stop-color="#ff0d00"/></linearGradient><linearGradient id="c140" gradientUnits="userSpaceOnUse" x1="1583" x2="2303" y1="0" y2="0"><stop offset="0" stop-color="#00ffd3"/><stop offset=".3403" stop-color="#02ffc1"/><stop offset=".4194" stop-color="#6effba"/><stop offset=".4875" stop-color="#e1ffb2"/><stop offset=".5042" stop-color="#fffdaf"/><stop offset=".5403" stop-color="#ffc484"/><stop offset=".5903" stop-color="#ff8f5c"/><stop offset=".6625" stop-color="#ff6038"/><stop offset=".7708" stop-color="#ff3619"/><stop offset=".9417" stop-color="#ff1300"/><stop offset="1" stop-color="#ff0c00"/></linearGradient><linearGradient id="c141" gradientUnits="userSpaceOnUse" x1="1584" x2="2307" y1="0" y2="0"><stop offset="0" stop-color="#00ffd6"/><stop offset=".3361" stop-color="#02ffc5"/><stop offset=".4149" stop-color="#6fffbf"/><stop offset=".4813" stop-color="#e1ffb8"/><stop offset=".4979" stop-color="#fffcb5"/><stop offset=".5339" stop-color="#ffc288"/><stop offset=".5837" stop-color="#ff8e5f"/><stop offset=".6556" stop-color="#ff5e3a"/><stop offset=".7635" stop-color="#ff351a"/><stop offset=".9364" stop-color="#ff1200"/><stop offset="1" stop-color="#ff0a00"/></linearGradient><linearGradient id="c142" gradientUnits="userSpaceOnUse" x1="1584" x2="2311" y1="0" y2="0"><stop offset="0" stop-color="#00ffda"/><stop offset=".3329" stop-color="#02ffcb"/><stop offset=".4099" stop-color="#6fffc5"/><stop offset=".4759" stop-color="#e2ffbf"/><stop offset=".4911" stop-color="#fffebc"/><stop offset=".5268" stop-color="#ffc38d"/><stop offset=".575" stop-color="#ff8f64"/><stop offset=".6451" stop-color="#ff5f3e"/><stop offset=".7497" stop-color="#ff361e"/><stop offset=".9175" stop-color="#ff1302"/><stop offset="1" stop-color="#ff0800"/></linearGradient><linearGradient id="c143" gradientUnits="userSpaceOnUse" x1="1585" x2="2315" y1="0" y2="0"><stop offset="0" stop-color="#00ffde"/><stop offset=".3288" stop-color="#02ffd0"/><stop offset=".4041" stop-color="#6effcb"/><stop offset=".4685" stop-color="#e0ffc5"/><stop offset=".4849" stop-color="#fffdc2"/><stop offset=".5192" stop-color="#ffc393"/><stop offset=".5671" stop-color="#ff8f68"/><stop offset=".6356" stop-color="#ff6042"/><stop offset=".7384" stop-color="#ff3720"/><stop offset=".9041" stop-color="#ff1303"/><stop offset="1" stop-color="#ff0700"/></linearGradient><linearGradient id="c144" gradientUnits="userSpaceOnUse" x1="1586" x2="2319" y1="0" y2="0"><stop offset="0" stop-color="#00ffe1"/><stop offset=".3247" stop-color="#03ffd5"/><stop offset=".3997" stop-color="#70ffd0"/><stop offset=".4625" stop-color="#e1ffcc"/><stop offset=".4789" stop-color="#fffcc7"/><stop offset=".513" stop-color="#ffc297"/><stop offset=".5607" stop-color="#ff8d6b"/><stop offset=".6289" stop-color="#ff5f44"/><stop offset=".7312" stop-color="#ff3622"/><stop offset=".8963" stop-color="#ff1205"/><stop offset="1" stop-color="#ff0500"/></linearGradient><linearGradient id="c145" gradientUnits="userSpaceOnUse" x1="1587" x2="2323" y1="0" y2="0"><stop offset="0" stop-color="#00ffe5"/><stop offset=".3207" stop-color="#03ffda"/><stop offset=".394" stop-color="#6fffd6"/><stop offset=".4565" stop-color="#e2ffd2"/><stop offset=".4715" stop-color="#fffdd0"/><stop offset=".5054" stop-color="#ffc39e"/><stop offset=".5516" stop-color="#ff8e71"/><stop offset=".6182" stop-color="#ff6049"/><stop offset=".7188" stop-color="#ff3625"/><stop offset=".8804" stop-color="#ff1307"/><stop offset=".9796" stop-color="#ff0600"/><stop offset="1" stop-color="#ff0300"/></linearGradient><linearGradient id="c146" gradientUnits="userSpaceOnUse" x1="1587" x2="2327" y1="0" y2="0"><stop offset="0" stop-color="#00ffe9"/><stop offset=".3176" stop-color="#03ffe0"/><stop offset=".3892" stop-color="#6fffdd"/><stop offset=".45" stop-color="#e0ffd9"/><stop offset=".4662" stop-color="#fffcd6"/><stop offset=".5" stop-color="#ffc1a2"/><stop offset=".5459" stop-color="#ff8d74"/><stop offset=".6122" stop-color="#ff5e4b"/><stop offset=".7122" stop-color="#ff3527"/><stop offset=".873" stop-color="#ff1208"/><stop offset=".977" stop-color="#ff0400"/><stop offset="1" stop-color="#ff0200"/></linearGradient><linearGradient id="c147" gradientUnits="userSpaceOnUse" x1="1588" x2="2331" y1="0" y2="0"><stop offset="0" stop-color="#00ffed"/><stop offset=".3122" stop-color="#01ffe5"/><stop offset=".3836" stop-color="#6effe3"/><stop offset=".4441" stop-color="#e0ffe0"/><stop offset=".459" stop-color="#fffede"/><stop offset=".4913" stop-color="#ffc4aa"/><stop offset=".5357" stop-color="#ff907b"/><stop offset=".6003" stop-color="#ff6050"/><stop offset=".6972" stop-color="#ff372b"/><stop offset=".852" stop-color="#ff130b"/><stop offset=".9717" stop-color="#ff0300"/><stop offset="1" stop-color="#ff0000"/></linearGradient><linearGradient id="c148" gradientUnits="userSpaceOnUse" x1="1589" x2="2335" y1="0" y2="0"><stop offset="0" stop-color="#00fff1"/><stop offset=".3083" stop-color="#02ffeb"/><stop offset=".378" stop-color="#6dffe9"/><stop offset=".437" stop-color="#deffe7"/><stop offset=".4531" stop-color="#fffde5"/><stop offset=".4853" stop-color="#ffc3af"/><stop offset=".5295" stop-color="#ff8e7e"/><stop offset=".5925" stop-color="#ff6053"/><stop offset=".6877" stop-color="#ff362e"/><stop offset=".8405" stop-color="#ff130d"/><stop offset=".9705" stop-color="#ff0200"/><stop offset="1" stop-color="#ff0000"/></linearGradient><linearGradient id="c149" gradientUnits="userSpaceOnUse" x1="1590" x2="2339" y1="0" y2="0"><stop offset="0" stop-color="#00fff5"/><stop offset=".3044" stop-color="#02fff1"/><stop offset=".3738" stop-color="#6ffff0"/><stop offset=".4326" stop-color="#e2ffee"/><stop offset=".4473" stop-color="#fffceb"/><stop offset=".4793" stop-color="#ffc1b4"/><stop offset=".5234" stop-color="#ff8d82"/><stop offset=".5861" stop-color="#ff5e56"/><stop offset=".6809" stop-color="#ff352f"/><stop offset=".8331" stop-color="#ff120e"/><stop offset=".972" stop-color="#ff0000"/><stop offset="1" stop-color="#ff0000"/></linearGradient><linearGradient id="c150" gradientUnits="userSpaceOnUse" x1="1590" x2="2343" y1="0" y2="0"><stop offset="0" stop-color="#00fff9"/><stop offset=".3015" stop-color="#02fff7"/><stop offset=".3692" stop-color="#6ffff7"/><stop offset=".4263" stop-color="#e0fff6"/><stop offset=".4409" stop-color="#fffdf4"/><stop offset=".4714" stop-color="#ffc4bd"/><stop offset=".5139" stop-color="#ff8f89"/><stop offset=".575" stop-color="#ff605c"/><stop offset=".6667" stop-color="#ff3734"/><stop offset=".8141" stop-color="#ff1311"/><stop offset=".9708" stop-color="#ff0000"/><stop offset="1" stop-color="#ff0000"/></linearGradient><linearGradient id="c151" gradientUnits="userSpaceOnUse" x1="1591" x2="2347" y1="0" y2="0"><stop offset="0" stop-color="#00fffd"/><stop offset=".2976" stop-color="#02fffd"/><stop offset=".3638" stop-color="#6efffe"/><stop offset=".4206" stop-color="#e0fffe"/><stop offset=".4352" stop-color="#fffcfb"/><stop offset=".4656" stop-color="#ffc3c2"/><stop offset=".5079" stop-color="#ff8e8d"/><stop offset=".5688" stop-color="#ff5f5e"/><stop offset=".6601" stop-color="#ff3636"/><stop offset=".8069" stop-color="#ff1213"/><stop offset=".9683" stop-color="#ff0000"/><stop offset="1" stop-color="#ff0000"/></linearGradient><linearGradient id="c152" gradientUnits="userSpaceOnUse" x1="1592" x2="2351" y1="0" y2="0"><stop offset="0" stop-color="#00fcff"/><stop offset=".2938" stop-color="#02faff"/><stop offset=".361" stop-color="#70f9ff"/><stop offset=".4177" stop-color="#e1f9ff"/><stop offset=".4321" stop-color="#fff5fb"/><stop offset=".4638" stop-color="#ffbbc1"/><stop offset=".5072" stop-color="#ff878c"/><stop offset=".5692" stop-color="#ff5a5d"/><stop offset=".6627" stop-color="#ff3234"/><stop offset=".8142" stop-color="#ff0f11"/><stop offset=".9565" stop-color="#ff0000"/><stop offset="1" stop-color="#ff0000"/></linearGradient><linearGradient id="c153" gradientUnits="userSpaceOnUse" x1="1593" x2="2355" y1="0" y2="0"><stop offset="0" stop-color="#00f8ff"/><stop offset=".29" stop-color="#02f4ff"/><stop offset=".357" stop-color="#6ef3ff"/><stop offset=".4147" stop-color="#e1f1ff"/><stop offset=".4291" stop-color="#ffeefc"/><stop offset=".4606" stop-color="#ffb6c2"/><stop offset=".5039" stop-color="#ff838d"/><stop offset=".5656" stop-color="#ff575e"/><stop offset=".6588" stop-color="#ff3035"/><stop offset=".8084" stop-color="#ff0e12"/><stop offset=".9436" stop-color="#ff0001"/><stop offset="1" stop-color="#ff0000"/></linearGradient><linearGradient id="c154" gradientUnits="userSpaceOnUse" x1="1594" x2="2359" y1="0" y2="0"><stop offset="0" stop-color="#00f4ff"/><stop offset=".2863" stop-color="#03eeff"/><stop offset=".3542" stop-color="#6fecff"/><stop offset=".4118" stop-color="#e1eaff"/><stop offset=".4261" stop-color="#ffe7fd"/><stop offset=".4575" stop-color="#ffb0c2"/><stop offset=".5007" stop-color="#ff808e"/><stop offset=".5621" stop-color="#ff545f"/><stop offset=".6549" stop-color="#ff2e36"/><stop offset=".8039" stop-color="#ff0d13"/><stop offset=".9294" stop-color="#ff0002"/><stop offset="1" stop-color="#ff0000"/></linearGradient><linearGradient id="c155" gradientUnits="userSpaceOnUse" x1="1594" x2="2363" y1="0" y2="0"><stop offset="0" stop-color="#00f0ff"/><stop offset=".2835" stop-color="#03e8ff"/><stop offset=".3524" stop-color="#71e5ff"/><stop offset=".4109" stop-color="#e4e2ff"/><stop offset=".4239" stop-color="#ffe0fd"/><stop offset=".4551" stop-color="#ffabc3"/><stop offset=".498" stop-color="#ff7c8f"/><stop offset=".5605" stop-color="#ff5160"/><stop offset=".6541" stop-color="#ff2b37"/><stop offset=".8036" stop-color="#ff0b13"/><stop offset=".9181" stop-color="#ff0004"/><stop offset="1" stop-color="#ff0000"/></linearGradient><linearGradient id="c156" gradientUnits="userSpaceOnUse" x1="1595" x2="2367" y1="0" y2="0"><stop offset="0" stop-color="#00ecff"/><stop offset=".2798" stop-color="#03e3ff"/><stop offset=".3484" stop-color="#6fdfff"/><stop offset=".4067" stop-color="#e1dbff"/><stop offset=".421" stop-color="#ffd9fe"/><stop offset=".4521" stop-color="#ffa6c4"/><stop offset=".4948" stop-color="#ff7890"/><stop offset=".557" stop-color="#ff4e61"/><stop offset=".6503" stop-color="#ff2938"/><stop offset=".7992" stop-color="#ff0a14"/><stop offset=".9054" stop-color="#ff0005"/><stop offset="1" stop-color="#ff0000"/></linearGradient><linearGradient id="c157" gradientUnits="userSpaceOnUse" x1="1596" x2="2371" y1="0" y2="0"><stop offset="0" stop-color="#00e7ff"/><stop offset=".2748" stop-color="#01ddff"/><stop offset=".3445" stop-color="#6ed9ff"/><stop offset=".4039" stop-color="#e1d4ff"/><stop offset=".4194" stop-color="#ffd0fb"/><stop offset=".4516" stop-color="#ff9ec1"/><stop offset=".4968" stop-color="#ff708c"/><stop offset=".5613" stop-color="#ff475e"/><stop offset=".6581" stop-color="#ff2435"/><stop offset=".8142" stop-color="#ff0612"/><stop offset=".9097" stop-color="#ff0005"/><stop offset="1" stop-color="#ff0000"/></linearGradient><linearGradient id="c158" gradientUnits="userSpaceOnUse" x1="1597" x2="2375" y1="0" y2="0"><stop offset="0" stop-color="#00e3ff"/><stop offset=".2712" stop-color="#01d8ff"/><stop offset=".3419" stop-color="#6fd3ff"/><stop offset=".401" stop-color="#e0ceff"/><stop offset=".4165" stop-color="#ffcafc"/><stop offset=".4486" stop-color="#ff99c2"/><stop offset=".4936" stop-color="#ff6c8d"/><stop offset=".5578" stop-color="#ff455f"/><stop offset=".6542" stop-color="#ff2236"/><stop offset=".8098" stop-color="#ff0413"/><stop offset=".9177" stop-color="#ff0004"/><stop offset="1" stop-color="#ff0000"/></linearGradient><linearGradient id="c159" gradientUnits="userSpaceOnUse" x1="1598" x2="2379" y1="0" y2="0"><stop offset="0" stop-color="#00dfff"/><stop offset=".2676" stop-color="#02d2ff"/><stop offset=".338" stop-color="#6ecdff"/><stop offset=".3982" stop-color="#e0c7ff"/><stop offset=".4136" stop-color="#ffc4fd"/><stop offset=".4456" stop-color="#ff94c3"/><stop offset=".4904" stop-color="#ff698e"/><stop offset=".5544" stop-color="#ff4260"/><stop offset=".6504" stop-color="#ff2037"/><stop offset=".8054" stop-color="#ff0313"/><stop offset=".9834" stop-color="#ff0000"/><stop offset="1" stop-color="#ff0000"/></linearGradient><linearGradient id="c160" gradientUnits="userSpaceOnUse" x1="1599" x2="2383" y1="0" y2="0"><stop offset="0" stop-color="#00dbff"/><stop offset=".264" stop-color="#02cdff"/><stop offset=".3355" stop-color="#6fc7ff"/><stop offset=".3967" stop-color="#e3c1ff"/><stop offset=".4107" stop-color="#ffbefd"/><stop offset=".4439" stop-color="#ff8ec2"/><stop offset=".4898" stop-color="#ff648d"/><stop offset=".5548" stop-color="#ff3e5e"/><stop offset=".6531" stop-color="#ff1d36"/><stop offset=".8112" stop-color="#ff0112"/><stop offset=".986" stop-color="#ff0000"/><stop offset="1" stop-color="#ff0000"/></linearGradient><linearGradient id="c161" gradientUnits="userSpaceOnUse" x1="1599" x2="2386" y1="0" y2="0"><stop offset="0" stop-color="#00d8ff"/><stop offset=".2618" stop-color="#02c8ff"/><stop offset=".3329" stop-color="#6ec1ff"/><stop offset=".3939" stop-color="#e0baff"/><stop offset=".4091" stop-color="#ffb8fe"/><stop offset=".4422" stop-color="#ff8ac3"/><stop offset=".4879" stop-color="#ff608e"/><stop offset=".5527" stop-color="#ff3c60"/><stop offset=".6506" stop-color="#ff1b36"/><stop offset=".8081" stop-color="#ff0013"/><stop offset=".9886" stop-color="#ff0000"/><stop offset="1" stop-color="#ff0000"/></linearGradient><linearGradient id="c162" gradientUnits="userSpaceOnUse" x1="1600" x2="2390" y1="0" y2="0"><stop offset="0" stop-color="#00d4ff"/><stop offset=".2582" stop-color="#02c3ff"/><stop offset=".3304" stop-color="#6fbcff"/><stop offset=".3924" stop-color="#e2b4ff"/><stop offset=".4076" stop-color="#ffb0fb"/><stop offset=".4405" stop-color="#ff84c2"/><stop offset=".4861" stop-color="#ff5c8e"/><stop offset=".5519" stop-color="#ff385f"/><stop offset=".6506" stop-color="#ff1936"/><stop offset=".8038" stop-color="#ff0014"/><stop offset=".9886" stop-color="#ff0000"/><stop offset="1" stop-color="#ff0000"/></linearGradient><linearGradient id="c163" gradientUnits="userSpaceOnUse" x1="1601" x2="2394" y1="0" y2="0"><stop offset="0" stop-color="#00d0ff"/><stop offset=".2547" stop-color="#02beff"/><stop offset=".3279" stop-color="#70b6ff"/><stop offset=".3897" stop-color="#e2aeff"/><stop offset=".4048" stop-color="#ffaafc"/><stop offset=".4388" stop-color="#ff7ec1"/><stop offset=".4855" stop-color="#ff578d"/><stop offset=".5523" stop-color="#ff345e"/><stop offset=".6532" stop-color="#ff1635"/><stop offset=".7957" stop-color="#ff0015"/><stop offset=".9874" stop-color="#ff0000"/><stop offset="1" stop-color="#ff0000"/></linearGradient><linearGradient id="c164" gradientUnits="userSpaceOnUse" x1="1602" x2="2398" y1="0" y2="0"><stop offset="0" stop-color="#00ccff"/><stop offset=".2513" stop-color="#02b9ff"/><stop offset=".3241" stop-color="#6fb1ff"/><stop offset=".3869" stop-color="#e2a8ff"/><stop offset=".402" stop-color="#ffa4fd"/><stop offset=".4359" stop-color="#ff7ac2"/><stop offset=".4824" stop-color="#ff548e"/><stop offset=".549" stop-color="#ff325f"/><stop offset=".6495" stop-color="#ff1436"/><stop offset=".7839" stop-color="#ff0017"/><stop offset=".9849" stop-color="#ff0000"/><stop offset="1" stop-color="#ff0000"/></linearGradient><linearGradient id="c165" gradientUnits="userSpaceOnUse" x1="1603" x2="2402" y1="0" y2="0"><stop offset="0" stop-color="#00c8ff"/><stop offset=".2478" stop-color="#02b5ff"/><stop offset=".3217" stop-color="#70acff"/><stop offset=".3842" stop-color="#e2a3ff"/><stop offset=".3992" stop-color="#ff9ffd"/><stop offset=".433" stop-color="#ff76c3"/><stop offset=".4793" stop-color="#ff518f"/><stop offset=".5457" stop-color="#ff3060"/><stop offset=".6458" stop-color="#ff1237"/><stop offset=".7722" stop-color="#ff0019"/><stop offset=".9825" stop-color="#ff0000"/><stop offset="1" stop-color="#ff0000"/></linearGradient><linearGradient id="c166" gradientUnits="userSpaceOnUse" x1="1604" x2="2406" y1="0" y2="0"><stop offset="0" stop-color="#00c4ff"/><stop offset=".2444" stop-color="#03b0ff"/><stop offset=".3192" stop-color="#71a7ff"/><stop offset=".3828" stop-color="#e49dff"/><stop offset=".3965" stop-color="#ff99fe"/><stop offset=".4302" stop-color="#ff71c4"/><stop offset=".4776" stop-color="#ff4d8f"/><stop offset=".5449" stop-color="#ff2c60"/><stop offset=".6459" stop-color="#ff1037"/><stop offset=".7606" stop-color="#ff001b"/><stop offset=".9788" stop-color="#ff0000"/><stop offset="1" stop-color="#ff0000"/></linearGradient><linearGradient id="c167" gradientUnits="userSpaceOnUse" x1="1605" x2="2410" y1="0" y2="0"><stop offset="0" stop-color="#00c1ff"/><stop offset=".241" stop-color="#03abff"/><stop offset=".3155" stop-color="#6fa2ff"/><stop offset=".3789" stop-color="#e197ff"/><stop offset=".395" stop-color="#ff92fb"/><stop offset=".4298" stop-color="#ff6bc1"/><stop offset=".4783" stop-color="#ff478c"/><stop offset=".5478" stop-color="#ff285d"/><stop offset=".6522" stop-color="#ff0c34"/><stop offset=".7491" stop-color="#ff001e"/><stop offset=".9752" stop-color="#ff0000"/><stop offset="1" stop-color="#ff0000"/></linearGradient><linearGradient id="c168" gradientUnits="userSpaceOnUse" x1="1605" x2="2414" y1="0" y2="0"><stop offset="0" stop-color="#00bdff"/><stop offset=".2386" stop-color="#03a7ff"/><stop offset=".314" stop-color="#709dff"/><stop offset=".3782" stop-color="#e492ff"/><stop offset=".3931" stop-color="#ff8dfc"/><stop offset=".4277" stop-color="#ff67c2"/><stop offset=".4759" stop-color="#ff458d"/><stop offset=".5451" stop-color="#ff265e"/><stop offset=".6489" stop-color="#ff0b35"/><stop offset=".7379" stop-color="#ff0020"/><stop offset=".9691" stop-color="#ff0000"/><stop offset="1" stop-color="#ff0000"/></linearGradient><linearGradient id="c169" gradientUnits="userSpaceOnUse" x1="1606" x2="2415" y1="0" y2="0"><stop offset="0" stop-color="#00baff"/><stop offset=".2361" stop-color="#03a3ff"/><stop offset=".3115" stop-color="#6f98ff"/><stop offset=".3758" stop-color="#e18dff"/><stop offset=".3918" stop-color="#ff88fc"/><stop offset=".4265" stop-color="#ff63c3"/><stop offset=".4747" stop-color="#ff428e"/><stop offset=".5439" stop-color="#ff245f"/><stop offset=".6477" stop-color="#ff0936"/><stop offset=".7293" stop-color="#ff0022"/><stop offset=".9543" stop-color="#ff0002"/><stop offset="1" stop-color="#ff0000"/></linearGradient><linearGradient id="c170" gradientUnits="userSpaceOnUse" x1="1607" x2="2415" y1="0" y2="0"><stop offset="0" stop-color="#00b6ff"/><stop offset=".2327" stop-color="#029fff"/><stop offset=".3094" stop-color="#6e93ff"/><stop offset=".375" stop-color="#e187ff"/><stop offset=".3911" stop-color="#ff83fd"/><stop offset=".427" stop-color="#ff5ec2"/><stop offset=".4765" stop-color="#ff3d8d"/><stop offset=".547" stop-color="#ff205e"/><stop offset=".6535" stop-color="#ff0735"/><stop offset=".7277" stop-color="#ff0023"/><stop offset=".9517" stop-color="#ff0003"/><stop offset="1" stop-color="#ff0000"/></linearGradient><linearGradient id="c171" gradientUnits="userSpaceOnUse" x1="1608" x2="2409" y1="0" y2="0"><stop offset="0" stop-color="#00b2ff"/><stop offset=".2322" stop-color="#029aff"/><stop offset=".3109" stop-color="#6f8fff"/><stop offset=".377" stop-color="#e182ff"/><stop offset=".3933" stop-color="#ff7efd"/><stop offset=".4295" stop-color="#ff5bc3"/><stop offset=".4794" stop-color="#ff3b8e"/><stop offset=".5506" stop-color="#ff1e5f"/><stop offset=".6579" stop-color="#ff0536"/><stop offset=".7328" stop-color="#ff0024"/><stop offset=".9588" stop-color="#ff0003"/><stop offset="1" stop-color="#ff0000"/></linearGradient><linearGradient id="c172" gradientUnits="userSpaceOnUse" x1="1609" x2="2401" y1="0" y2="0"><stop offset="0" stop-color="#00afff"/><stop offset=".2323" stop-color="#0296ff"/><stop offset=".3119" stop-color="#6e8aff"/><stop offset=".3801" stop-color="#e17dff"/><stop offset=".3965" stop-color="#ff79fe"/><stop offset=".4331" stop-color="#ff57c4"/><stop offset=".4836" stop-color="#ff388f"/><stop offset=".5556" stop-color="#ff1c60"/><stop offset=".6641" stop-color="#ff0437"/><stop offset=".779" stop-color="#ff001d"/><stop offset="1" stop-color="#ff0001"/></linearGradient><linearGradient id="c173" gradientUnits="userSpaceOnUse" x1="1610" x2="2392" y1="0" y2="0"><stop offset="0" stop-color="#00abff"/><stop offset=".2327" stop-color="#0292ff"/><stop offset=".3146" stop-color="#6f86ff"/><stop offset=".3849" stop-color="#e378ff"/><stop offset=".4015" stop-color="#ff73fc"/><stop offset=".4399" stop-color="#ff51c1"/><stop offset=".4923" stop-color="#ff338d"/><stop offset=".5678" stop-color="#ff185e"/><stop offset=".6816" stop-color="#ff0135"/><stop offset=".8645" stop-color="#ff0012"/><stop offset="1" stop-color="#ff0003"/></linearGradient><linearGradient id="c174" gradientUnits="userSpaceOnUse" x1="1611" x2="2384" y1="0" y2="0"><stop offset="0" stop-color="#00a8ff"/><stop offset=".2329" stop-color="#028eff"/><stop offset=".3169" stop-color="#7081ff"/><stop offset=".3881" stop-color="#e373ff"/><stop offset=".4049" stop-color="#ff6ffc"/><stop offset=".4437" stop-color="#ff4ec2"/><stop offset=".4968" stop-color="#ff318e"/><stop offset=".5731" stop-color="#ff165f"/><stop offset=".6882" stop-color="#ff0036"/><stop offset=".8732" stop-color="#ff0013"/><stop offset="1" stop-color="#ff0004"/></linearGradient><linearGradient id="c175" gradientUnits="userSpaceOnUse" x1="1612" x2="2376" y1="0" y2="0"><stop offset="0" stop-color="#00a5ff"/><stop offset=".233" stop-color="#028bff"/><stop offset=".3181" stop-color="#6f7dff"/><stop offset=".3914" stop-color="#e36fff"/><stop offset=".4084" stop-color="#ff6afd"/><stop offset=".4476" stop-color="#ff4ac3"/><stop offset=".5013" stop-color="#ff2e8e"/><stop offset=".5785" stop-color="#ff1460"/><stop offset=".695" stop-color="#ff0036"/><stop offset=".8822" stop-color="#ff0013"/><stop offset="1" stop-color="#ff0006"/></linearGradient><linearGradient id="c176" gradientUnits="userSpaceOnUse" x1="1613" x2="2367" y1="0" y2="0"><stop offset="0" stop-color="#00a1ff"/><stop offset=".2334" stop-color="#0287ff"/><stop offset=".321" stop-color="#7079ff"/><stop offset=".3952" stop-color="#e26aff"/><stop offset=".4125" stop-color="#ff66fd"/><stop offset=".4523" stop-color="#ff47c3"/><stop offset=".508" stop-color="#ff2b8e"/><stop offset=".5875" stop-color="#ff125f"/><stop offset=".6976" stop-color="#ff0039"/><stop offset=".8833" stop-color="#ff0015"/><stop offset="1" stop-color="#ff0007"/></linearGradient><linearGradient id="c177" gradientUnits="userSpaceOnUse" x1="1614" x2="2359" y1="0" y2="0"><stop offset="0" stop-color="#009eff"/><stop offset=".2336" stop-color="#0283ff"/><stop offset=".3221" stop-color="#6f75ff"/><stop offset=".3987" stop-color="#e266ff"/><stop offset=".4161" stop-color="#ff61fe"/><stop offset=".4564" stop-color="#ff43c4"/><stop offset=".5128" stop-color="#ff288f"/><stop offset=".5933" stop-color="#ff1060"/><stop offset=".6953" stop-color="#ff003c"/><stop offset=".8779" stop-color="#ff0018"/><stop offset="1" stop-color="#ff0009"/></linearGradient><linearGradient id="c178" gradientUnits="userSpaceOnUse" x1="1615" x2="2351" y1="0" y2="0"><stop offset="0" stop-color="#009bff"/><stop offset=".2337" stop-color="#0380ff"/><stop offset=".3247" stop-color="#7071ff"/><stop offset=".4022" stop-color="#e261ff"/><stop offset=".4212" stop-color="#ff5cfc"/><stop offset=".4633" stop-color="#ff3fc2"/><stop offset=".5217" stop-color="#ff248d"/><stop offset=".606" stop-color="#ff0c5e"/><stop offset=".6943" stop-color="#ff003f"/><stop offset=".8736" stop-color="#ff001a"/><stop offset="1" stop-color="#ff000b"/></linearGradient><linearGradient id="c179" gradientUnits="userSpaceOnUse" x1="1616" x2="2342" y1="0" y2="0"><stop offset="0" stop-color="#0097ff"/><stop offset=".2342" stop-color="#037cff"/><stop offset=".3278" stop-color="#706dff"/><stop offset=".4077" stop-color="#e45cff"/><stop offset=".4256" stop-color="#ff57fc"/><stop offset=".4683" stop-color="#ff3bc3"/><stop offset=".5275" stop-color="#ff228e"/><stop offset=".6129" stop-color="#ff0b5f"/><stop offset=".6942" stop-color="#ff0042"/><stop offset=".8705" stop-color="#ff001d"/><stop offset="1" stop-color="#ff000d"/></linearGradient><linearGradient id="c180" gradientUnits="userSpaceOnUse" x1="1617" x2="2334" y1="0" y2="0"><stop offset="0" stop-color="#0094ff"/><stop offset=".2343" stop-color="#0378ff"/><stop offset=".3291" stop-color="#6f69ff"/><stop offset=".41" stop-color="#e259ff"/><stop offset=".4296" stop-color="#ff53fd"/><stop offset=".4742" stop-color="#ff37c2"/><stop offset=".5356" stop-color="#ff1e8d"/><stop offset=".6234" stop-color="#ff085e"/><stop offset=".696" stop-color="#ff0045"/><stop offset=".8703" stop-color="#ff001f"/><stop offset="1" stop-color="#ff000e"/></linearGradient><linearGradient id="c181" gradientUnits="userSpaceOnUse" x1="1618" x2="2325" y1="0" y2="0"><stop offset="0" stop-color="#0091ff"/><stop offset=".2348" stop-color="#0375ff"/><stop offset=".3324" stop-color="#7065ff"/><stop offset=".4158" stop-color="#e454ff"/><stop offset=".4342" stop-color="#ff4ffd"/><stop offset=".4795" stop-color="#ff34c2"/><stop offset=".5417" stop-color="#ff1c8e"/><stop offset=".6308" stop-color="#ff065f"/><stop offset=".7001" stop-color="#ff0047"/><stop offset=".8741" stop-color="#ff0021"/><stop offset="1" stop-color="#ff0010"/></linearGradient><linearGradient id="c182" gradientUnits="userSpaceOnUse" x1="1619" x2="2317" y1="0" y2="0"><stop offset="0" stop-color="#008eff"/><stop offset=".235" stop-color="#0372ff"/><stop offset=".3338" stop-color="#6f61ff"/><stop offset=".4183" stop-color="#e250ff"/><stop offset=".4384" stop-color="#ff4bfe"/><stop offset=".4842" stop-color="#ff31c3"/><stop offset=".5473" stop-color="#ff198f"/><stop offset=".6375" stop-color="#ff0460"/><stop offset=".7192" stop-color="#ff0044"/><stop offset=".9026" stop-color="#ff001f"/><stop offset="1" stop-color="#ff0012"/></linearGradient><linearGradient id="c183" gradientUnits="userSpaceOnUse" x1="1620" x2="2309" y1="0" y2="0"><stop offset="0" stop-color="#008bff"/><stop offset=".2337" stop-color="#026fff"/><stop offset=".3353" stop-color="#6e5eff"/><stop offset=".4224" stop-color="#e14cff"/><stop offset=".4441" stop-color="#ff46fc"/><stop offset=".492" stop-color="#ff2dc1"/><stop offset=".5573" stop-color="#ff168d"/><stop offset=".6517" stop-color="#ff015e"/><stop offset=".7939" stop-color="#ff0035"/><stop offset="1" stop-color="#ff0014"/></linearGradient><linearGradient id="c184" gradientUnits="userSpaceOnUse" x1="1621" x2="2300" y1="0" y2="0"><stop offset="0" stop-color="#0087ff"/><stop offset=".2342" stop-color="#026bff"/><stop offset=".3387" stop-color="#6f5aff"/><stop offset=".4271" stop-color="#e148ff"/><stop offset=".4492" stop-color="#ff42fc"/><stop offset=".4978" stop-color="#ff2ac2"/><stop offset=".5641" stop-color="#ff148d"/><stop offset=".6598" stop-color="#ff005e"/><stop offset=".8041" stop-color="#ff0035"/><stop offset="1" stop-color="#ff0016"/></linearGradient><linearGradient id="c185" gradientUnits="userSpaceOnUse" x1="1622" x2="2292" y1="0" y2="0"><stop offset="0" stop-color="#0084ff"/><stop offset=".2343" stop-color="#0268ff"/><stop offset=".3403" stop-color="#6e57ff"/><stop offset=".4313" stop-color="#e144ff"/><stop offset=".4537" stop-color="#ff3ffd"/><stop offset=".503" stop-color="#ff27c2"/><stop offset=".5716" stop-color="#ff118d"/><stop offset=".6701" stop-color="#ff005e"/><stop offset=".8179" stop-color="#ff0035"/><stop offset="1" stop-color="#ff0018"/></linearGradient><linearGradient id="c186" gradientUnits="userSpaceOnUse" x1="1623" x2="2284" y1="0" y2="0"><stop offset="0" stop-color="#0081ff"/><stop offset=".2345" stop-color="#0265ff"/><stop offset=".3434" stop-color="#6f53ff"/><stop offset=".4357" stop-color="#e140ff"/><stop offset=".4584" stop-color="#ff3bfd"/><stop offset=".5083" stop-color="#ff24c3"/><stop offset=".5779" stop-color="#ff0f8e"/><stop offset=".6687" stop-color="#ff0062"/><stop offset=".8139" stop-color="#ff0039"/><stop offset="1" stop-color="#ff001a"/></linearGradient><linearGradient id="c187" gradientUnits="userSpaceOnUse" x1="1624" x2="2275" y1="0" y2="0"><stop offset="0" stop-color="#007eff"/><stop offset=".235" stop-color="#0262ff"/><stop offset=".3472" stop-color="#7050ff"/><stop offset=".4424" stop-color="#e33cff"/><stop offset=".4639" stop-color="#ff37fe"/><stop offset=".5146" stop-color="#ff21c4"/><stop offset=".5853" stop-color="#ff0c8f"/><stop offset=".6682" stop-color="#ff0067"/><stop offset=".8111" stop-color="#ff003c"/><stop offset="1" stop-color="#ff001d"/></linearGradient><linearGradient id="c188" gradientUnits="userSpaceOnUse" x1="1625" x2="2267" y1="0" y2="0"><stop offset="0" stop-color="#007bff"/><stop offset=".2352" stop-color="#025fff"/><stop offset=".3489" stop-color="#6f4cff"/><stop offset=".447" stop-color="#e339ff"/><stop offset=".4704" stop-color="#ff33fc"/><stop offset=".5234" stop-color="#ff1dc2"/><stop offset=".5966" stop-color="#ff098d"/><stop offset=".6682" stop-color="#ff006b"/><stop offset=".8084" stop-color="#ff0040"/><stop offset="1" stop-color="#ff001f"/></linearGradient><linearGradient id="c189" gradientUnits="userSpaceOnUse" x1="1626" x2="2259" y1="0" y2="0"><stop offset="0" stop-color="#0078ff"/><stop offset=".2354" stop-color="#025cff"/><stop offset=".3523" stop-color="#7049ff"/><stop offset=".4518" stop-color="#e335ff"/><stop offset=".4755" stop-color="#ff2ffc"/><stop offset=".5292" stop-color="#ff1ac2"/><stop offset=".6035" stop-color="#ff078e"/><stop offset=".6682" stop-color="#ff006e"/><stop offset=".8073" stop-color="#ff0043"/><stop offset="1" stop-color="#ff0021"/></linearGradient><linearGradient id="c190" gradientUnits="userSpaceOnUse" x1="1627" x2="2250" y1="0" y2="0"><stop offset="0" stop-color="#0075ff"/><stop offset=".236" stop-color="#0359ff"/><stop offset=".3563" stop-color="#7045ff"/><stop offset=".4575" stop-color="#e231ff"/><stop offset=".4815" stop-color="#ff2bfd"/><stop offset=".5361" stop-color="#ff17c3"/><stop offset=".6116" stop-color="#ff058e"/><stop offset=".6806" stop-color="#ff006e"/><stop offset=".8234" stop-color="#ff0043"/><stop offset="1" stop-color="#ff0024"/></linearGradient><linearGradient id="c191" gradientUnits="userSpaceOnUse" x1="1629" x2="2242" y1="0" y2="0"><stop offset="0" stop-color="#0072ff"/><stop offset=".2349" stop-color="#0356ff"/><stop offset=".3573" stop-color="#7042ff"/><stop offset=".4617" stop-color="#e22eff"/><stop offset=".4861" stop-color="#ff28fd"/><stop offset=".5432" stop-color="#ff14c2"/><stop offset=".6215" stop-color="#ff028d"/><stop offset=".7341" stop-color="#ff005e"/><stop offset=".9038" stop-color="#ff0035"/><stop offset="1" stop-color="#ff0026"/></linearGradient><linearGradient id="c192" gradientUnits="userSpaceOnUse" x1="1630" x2="2233" y1="0" y2="0"><stop offset="0" stop-color="#006fff"/><stop offset=".2355" stop-color="#0353ff"/><stop offset=".3615" stop-color="#703fff"/><stop offset=".4693" stop-color="#e42aff"/><stop offset=".4925" stop-color="#ff25fd"/><stop offset=".5506" stop-color="#ff11c3"/><stop offset=".6302" stop-color="#ff008e"/><stop offset=".7446" stop-color="#ff005f"/><stop offset=".9171" stop-color="#ff0036"/><stop offset="1" stop-color="#ff0029"/></linearGradient><linearGradient id="c193" gradientUnits="userSpaceOnUse" x1="1631" x2="2225" y1="0" y2="0"><stop offset="0" stop-color="#006cff"/><stop offset=".2357" stop-color="#0350ff"/><stop offset=".3636" stop-color="#6f3cff"/><stop offset=".4731" stop-color="#e227ff"/><stop offset=".5" stop-color="#ff21fc"/><stop offset=".5589" stop-color="#ff0ec2"/><stop offset=".6414" stop-color="#ff008d"/><stop offset=".7593" stop-color="#ff005e"/><stop offset=".9377" stop-color="#ff0035"/><stop offset="1" stop-color="#ff002b"/></linearGradient><linearGradient id="c194" gradientUnits="userSpaceOnUse" x1="1632" x2="2217" y1="0" y2="0"><stop offset="0" stop-color="#006aff"/><stop offset=".2359" stop-color="#034eff"/><stop offset=".3675" stop-color="#7039ff"/><stop offset=".4803" stop-color="#e423ff"/><stop offset=".506" stop-color="#ff1dfc"/><stop offset=".5675" stop-color="#ff0bc1"/><stop offset=".641" stop-color="#ff0092"/><stop offset=".7573" stop-color="#ff0063"/><stop offset=".9316" stop-color="#ff0039"/><stop offset="1" stop-color="#ff002e"/></linearGradient><linearGradient id="c195" gradientUnits="userSpaceOnUse" x1="1633" x2="2208" y1="0" y2="0"><stop offset="0" stop-color="#0067ff"/><stop offset=".2365" stop-color="#034bff"/><stop offset=".3722" stop-color="#7136ff"/><stop offset=".487" stop-color="#e420ff"/><stop offset=".513" stop-color="#ff1afd"/><stop offset=".5757" stop-color="#ff09c2"/><stop offset=".6417" stop-color="#ff0098"/><stop offset=".7565" stop-color="#ff0068"/><stop offset=".927" stop-color="#ff003d"/><stop offset="1" stop-color="#ff0031"/></linearGradient><linearGradient id="c196" gradientUnits="userSpaceOnUse" x1="1635" x2="2200" y1="0" y2="0"><stop offset="0" stop-color="#0064ff"/><stop offset=".2336" stop-color="#0248ff"/><stop offset=".3717" stop-color="#6e33ff"/><stop offset=".4903" stop-color="#e21dff"/><stop offset=".5186" stop-color="#ff17fd"/><stop offset=".5823" stop-color="#ff06c3"/><stop offset=".6442" stop-color="#ff009b"/><stop offset=".7593" stop-color="#ff006b"/><stop offset=".9292" stop-color="#ff0040"/><stop offset="1" stop-color="#ff0034"/></linearGradient><linearGradient id="c197" gradientUnits="userSpaceOnUse" x1="1636" x2="2192" y1="0" y2="0"><stop offset="0" stop-color="#0061ff"/><stop offset=".2338" stop-color="#0246ff"/><stop offset=".3759" stop-color="#6f30ff"/><stop offset=".4964" stop-color="#e21aff"/><stop offset=".5252" stop-color="#ff14fd"/><stop offset=".5899" stop-color="#ff04c3"/><stop offset=".6799" stop-color="#ff008f"/><stop offset=".8094" stop-color="#ff005f"/><stop offset="1" stop-color="#ff0037"/></linearGradient><linearGradient id="c198" gradientUnits="userSpaceOnUse" x1="1637" x2="2183" y1="0" y2="0"><stop offset="0" stop-color="#005eff"/><stop offset=".2344" stop-color="#0243ff"/><stop offset=".381" stop-color="#702dff"/><stop offset=".5055" stop-color="#e316ff"/><stop offset=".5348" stop-color="#ff10fc"/><stop offset=".6026" stop-color="#ff00c1"/><stop offset=".696" stop-color="#ff008d"/><stop offset=".8297" stop-color="#ff005e"/><stop offset="1" stop-color="#ff003a"/></linearGradient><linearGradient id="c199" gradientUnits="userSpaceOnUse" x1="1638" x2="2175" y1="0" y2="0"><stop offset="0" stop-color="#005bff"/><stop offset=".2346" stop-color="#0241ff"/><stop offset=".3836" stop-color="#6f2bff"/><stop offset=".5102" stop-color="#e114ff"/><stop offset=".5419" stop-color="#ff0dfc"/><stop offset=".6108" stop-color="#ff00c2"/><stop offset=".7058" stop-color="#ff008e"/><stop offset=".8417" stop-color="#ff005f"/><stop offset="1" stop-color="#ff003d"/></linearGradient><linearGradient id="c200" gradientUnits="userSpaceOnUse" x1="1640" x2="2166" y1="0" y2="0"><stop offset="0" stop-color="#0059ff"/><stop offset=".2338" stop-color="#023eff"/><stop offset=".3878" stop-color="#7028ff"/><stop offset=".519" stop-color="#e310ff"/><stop offset=".5494" stop-color="#ff0afd"/><stop offset=".6141" stop-color="#ff00c7"/><stop offset=".7091" stop-color="#ff0092"/><stop offset=".846" stop-color="#ff0062"/><stop offset="1" stop-color="#ff0041"/></linearGradient><linearGradient id="c201" gradientUnits="userSpaceOnUse" x1="1641" x2="2158" y1="0" y2="0"><stop offset="0" stop-color="#0056ff"/><stop offset=".234" stop-color="#023cff"/><stop offset=".3907" stop-color="#6f25ff"/><stop offset=".5261" stop-color="#e30dff"/><stop offset=".5571" stop-color="#ff07fd"/><stop offset=".6151" stop-color="#ff00cd"/><stop offset=".7099" stop-color="#ff0097"/><stop offset=".8453" stop-color="#ff0066"/><stop offset="1" stop-color="#ff0044"/></linearGradient><linearGradient id="c202" gradientUnits="userSpaceOnUse" x1="1642" x2="2150" y1="0" y2="0"><stop offset="0" stop-color="#0053ff"/><stop offset=".2343" stop-color="#0239ff"/><stop offset=".3957" stop-color="#7022ff"/><stop offset=".5335" stop-color="#e30aff"/><stop offset=".565" stop-color="#ff04fd"/><stop offset=".6398" stop-color="#ff00c3"/><stop offset=".7421" stop-color="#ff008e"/><stop offset=".8898" stop-color="#ff005f"/><stop offset="1" stop-color="#ff0048"/></linearGradient><linearGradient id="c203" gradientUnits="userSpaceOnUse" x1="1644" x2="2141" y1="0" y2="0"><stop offset="0" stop-color="#0050ff"/><stop offset=".2334" stop-color="#0337ff"/><stop offset=".4004" stop-color="#7020ff"/><stop offset=".5412" stop-color="#e307ff"/><stop offset=".5755" stop-color="#ff01fc"/><stop offset=".6519" stop-color="#ff00c2"/><stop offset=".7586" stop-color="#ff008d"/><stop offset=".9115" stop-color="#ff005e"/><stop offset="1" stop-color="#ff004c"/></linearGradient><linearGradient id="c204" gradientUnits="userSpaceOnUse" x1="1645" x2="2133" y1="0" y2="0"><stop offset="0" stop-color="#004eff"/><stop offset=".2336" stop-color="#0334ff"/><stop offset=".4037" stop-color="#701dff"/><stop offset=".5492" stop-color="#e304ff"/><stop offset=".584" stop-color="#ff00fc"/><stop offset=".6639" stop-color="#ff00c1"/><stop offset=".7725" stop-color="#ff008d"/><stop offset=".9303" stop-color="#ff005e"/><stop offset="1" stop-color="#ff004f"/></linearGradient><linearGradient id="c205" gradientUnits="userSpaceOnUse" x1="1647" x2="2125" y1="0" y2="0"><stop offset="0" stop-color="#004bff"/><stop offset=".2322" stop-color="#0332ff"/><stop offset=".4079" stop-color="#701aff"/><stop offset=".5586" stop-color="#e401ff"/><stop offset=".5921" stop-color="#ff00fd"/><stop offset=".6736" stop-color="#ff00c2"/><stop offset=".7866" stop-color="#ff008d"/><stop offset=".9477" stop-color="#ff005e"/><stop offset="1" stop-color="#ff0053"/></linearGradient><linearGradient id="c206" gradientUnits="userSpaceOnUse" x1="1648" x2="2116" y1="0" y2="0"><stop offset="0" stop-color="#0048ff"/><stop offset=".2329" stop-color="#0330ff"/><stop offset=".4145" stop-color="#7118ff"/><stop offset=".5684" stop-color="#e400ff"/><stop offset=".6026" stop-color="#ff00fd"/><stop offset=".6859" stop-color="#ff00c2"/><stop offset=".8013" stop-color="#ff008e"/><stop offset=".9658" stop-color="#ff005f"/><stop offset="1" stop-color="#ff0058"/></linearGradient><linearGradient id="c207" gradientUnits="userSpaceOnUse" x1="1649" x2="2108" y1="0" y2="0"><stop offset="0" stop-color="#0046ff"/><stop offset=".2331" stop-color="#032eff"/><stop offset=".4183" stop-color="#7015ff"/><stop offset=".5752" stop-color="#e200ff"/><stop offset=".6122" stop-color="#ff00fd"/><stop offset=".6972" stop-color="#ff00c3"/><stop offset=".8148" stop-color="#ff008e"/><stop offset=".9847" stop-color="#ff005f"/><stop offset="1" stop-color="#ff005c"/></linearGradient><linearGradient id="c208" gradientUnits="userSpaceOnUse" x1="1651" x2="2099" y1="0" y2="0"><stop offset="0" stop-color="#0043ff"/><stop offset=".2321" stop-color="#032bff"/><stop offset=".4241" stop-color="#7113ff"/><stop offset=".5692" stop-color="#d600ff"/><stop offset=".625" stop-color="#ff00fc"/><stop offset=".7143" stop-color="#ff00c1"/><stop offset=".8371" stop-color="#ff008d"/><stop offset="1" stop-color="#ff0061"/></linearGradient><linearGradient id="c209" gradientUnits="userSpaceOnUse" x1="1652" x2="2091" y1="0" y2="0"><stop offset="0" stop-color="#0041ff"/><stop offset=".2301" stop-color="#0229ff"/><stop offset=".4282" stop-color="#7011ff"/><stop offset=".5626" stop-color="#ca00ff"/><stop offset=".6355" stop-color="#ff00fc"/><stop offset=".7267" stop-color="#ff00c2"/><stop offset=".8519" stop-color="#ff008d"/><stop offset="1" stop-color="#ff0065"/></linearGradient><linearGradient id="c210" gradientUnits="userSpaceOnUse" x1="1654" x2="2083" y1="0" y2="0"><stop offset="0" stop-color="#003eff"/><stop offset=".2284" stop-color="#0227ff"/><stop offset=".4312" stop-color="#6f0eff"/><stop offset=".5548" stop-color="#bf00ff"/><stop offset=".6457" stop-color="#ff00fd"/><stop offset=".7389" stop-color="#ff00c2"/><stop offset=".8695" stop-color="#ff008d"/><stop offset="1" stop-color="#ff006a"/></linearGradient><linearGradient id="c211" gradientUnits="userSpaceOnUse" x1="1655" x2="2074" y1="0" y2="0"><stop offset="0" stop-color="#003bff"/><stop offset=".2291" stop-color="#0225ff"/><stop offset=".4391" stop-color="#700cff"/><stop offset=".5513" stop-color="#b500ff"/><stop offset=".6587" stop-color="#ff00fd"/><stop offset=".7566" stop-color="#ff00c2"/><stop offset=".8902" stop-color="#ff008d"/><stop offset="1" stop-color="#ff0070"/></linearGradient><linearGradient id="c212" gradientUnits="userSpaceOnUse" x1="1656" x2="2066" y1="0" y2="0"><stop offset="0" stop-color="#0039ff"/><stop offset=".2293" stop-color="#0223ff"/><stop offset=".4439" stop-color="#6f0aff"/><stop offset=".5463" stop-color="#ac00ff"/><stop offset=".6707" stop-color="#ff00fd"/><stop offset=".7707" stop-color="#ff00c2"/><stop offset=".9073" stop-color="#ff008e"/><stop offset="1" stop-color="#ff0075"/></linearGradient><linearGradient id="c213" gradientUnits="userSpaceOnUse" x1="1658" x2="2058" y1="0" y2="0"><stop offset="0" stop-color="#0036ff"/><stop offset=".2275" stop-color="#0221ff"/><stop offset=".45" stop-color="#7007ff"/><stop offset=".5425" stop-color="#a500ff"/><stop offset=".6825" stop-color="#ff00fe"/><stop offset=".785" stop-color="#ff00c3"/><stop offset=".9275" stop-color="#ff008e"/><stop offset="1" stop-color="#ff007a"/></linearGradient><linearGradient id="c214" gradientUnits="userSpaceOnUse" x1="1659" x2="2049" y1="0" y2="0"><stop offset="0" stop-color="#0034ff"/><stop offset=".2282" stop-color="#021fff"/><stop offset=".459" stop-color="#7005ff"/><stop offset=".559" stop-color="#a800ff"/><stop offset=".7" stop-color="#ff00fc"/><stop offset=".8077" stop-color="#ff00c1"/><stop offset=".9564" stop-color="#ff008c"/><stop offset="1" stop-color="#ff0081"/></linearGradient><linearGradient id="c215" gradientUnits="userSpaceOnUse" x1="1661" x2="2041" y1="0" y2="0"><stop offset="0" stop-color="#0031ff"/><stop offset=".2263" stop-color="#031dff"/><stop offset=".4632" stop-color="#7003ff"/><stop offset=".6658" stop-color="#e300ff"/><stop offset=".7132" stop-color="#ff00fc"/><stop offset=".8237" stop-color="#ff00c2"/><stop offset=".9763" stop-color="#ff008d"/><stop offset="1" stop-color="#ff0086"/></linearGradient><linearGradient id="c216" gradientUnits="userSpaceOnUse" x1="1662" x2="2033" y1="0" y2="0"><stop offset="0" stop-color="#002fff"/><stop offset=".2264" stop-color="#031bff"/><stop offset=".4717" stop-color="#7000ff"/><stop offset=".6792" stop-color="#e300ff"/><stop offset=".7278" stop-color="#ff00fd"/><stop offset=".841" stop-color="#ff00c2"/><stop offset=".9973" stop-color="#ff008d"/><stop offset="1" stop-color="#ff008d"/></linearGradient><linearGradient id="c217" gradientUnits="userSpaceOnUse" x1="1664" x2="2024" y1="0" y2="0"><stop offset="0" stop-color="#002cff"/><stop offset=".225" stop-color="#0319ff"/><stop offset=".4778" stop-color="#7000ff"/><stop offset=".6944" stop-color="#e300ff"/><stop offset=".7444" stop-color="#ff00fd"/><stop offset=".8611" stop-color="#ff00c3"/><stop offset="1" stop-color="#ff0094"/></linearGradient><linearGradient id="c218" gradientUnits="userSpaceOnUse" x1="1666" x2="2016" y1="0" y2="0"><stop offset="0" stop-color="#002aff"/><stop offset=".2229" stop-color="#0317ff"/><stop offset=".4857" stop-color="#7000ff"/><stop offset=".7086" stop-color="#e300ff"/><stop offset=".7629" stop-color="#ff00fc"/><stop offset=".8857" stop-color="#ff00c1"/><stop offset="1" stop-color="#ff009b"/></linearGradient><linearGradient id="c219" gradientUnits="userSpaceOnUse" x1="1667" x2="2007" y1="0" y2="0"><stop offset="0" stop-color="#0027ff"/><stop offset=".2235" stop-color="#0315ff"/><stop offset=".4765" stop-color="#6800ff"/><stop offset=".7118" stop-color="#da00ff"/><stop offset=".7824" stop-color="#ff00fc"/><stop offset=".9088" stop-color="#ff00c2"/><stop offset="1" stop-color="#ff00a3"/></linearGradient><linearGradient id="c220" gradientUnits="userSpaceOnUse" x1="1669" x2="1999" y1="0" y2="0"><stop offset="0" stop-color="#0025ff"/><stop offset=".2212" stop-color="#0313ff"/><stop offset=".4636" stop-color="#5f00ff"/><stop offset=".7091" stop-color="#d100ff"/><stop offset=".8" stop-color="#ff00fc"/><stop offset=".9303" stop-color="#ff00c2"/><stop offset="1" stop-color="#ff00ab"/></linearGradient><linearGradient id="c221" gradientUnits="userSpaceOnUse" x1="1670" x2="1991" y1="0" y2="0"><stop offset="0" stop-color="#0023ff"/><stop offset=".2212" stop-color="#0311ff"/><stop offset=".4517" stop-color="#5700ff"/><stop offset=".7103" stop-color="#c900ff"/><stop offset=".8193" stop-color="#ff00fd"/><stop offset=".9533" stop-color="#ff00c3"/><stop offset="1" stop-color="#ff00b3"/></linearGradient><linearGradient id="c222" gradientUnits="userSpaceOnUse" x1="1672" x2="1982" y1="0" y2="0"><stop offset="0" stop-color="#0020ff"/><stop offset=".2194" stop-color="#030fff"/><stop offset=".4387" stop-color="#4f00ff"/><stop offset=".7097" stop-color="#c000ff"/><stop offset=".8419" stop-color="#ff00fd"/><stop offset=".9839" stop-color="#ff00c2"/><stop offset="1" stop-color="#ff00bd"/></linearGradient><linearGradient id="c223" gradientUnits="userSpaceOnUse" x1="1674" x2="1974" y1="0" y2="0"><stop offset="0" stop-color="#001eff"/><stop offset=".2133" stop-color="#020eff"/><stop offset=".4233" stop-color="#4800ff"/><stop offset=".71" stop-color="#b900ff"/><stop offset=".8633" stop-color="#ff00fd"/><stop offset="1" stop-color="#ff00c6"/></linearGradient><linearGradient id="c224" gradientUnits="userSpaceOnUse" x1="1675" x2="1966" y1="0" y2="0"><stop offset="0" stop-color="#001bff"/><stop offset=".2131" stop-color="#020cff"/><stop offset=".4124" stop-color="#4200ff"/><stop offset=".7113" stop-color="#b200ff"/><stop offset=".89" stop-color="#ff00fc"/><stop offset="1" stop-color="#ff00d0"/></linearGradient><linearGradient id="c225" gradientUnits="userSpaceOnUse" x1="1677" x2="1957" y1="0" y2="0"><stop offset="0" stop-color="#0019ff"/><stop offset=".2107" stop-color="#020aff"/><stop offset=".4" stop-color="#3c00ff"/><stop offset=".7179" stop-color="#ad00ff"/><stop offset=".9179" stop-color="#ff00fc"/><stop offset="1" stop-color="#ff00db"/></linearGradient><linearGradient id="c226" gradientUnits="userSpaceOnUse" x1="1679" x2="1949" y1="0" y2="0"><stop offset="0" stop-color="#0017ff"/><stop offset=".2074" stop-color="#0209ff"/><stop offset=".3852" stop-color="#3600ff"/><stop offset=".7185" stop-color="#a600ff"/><stop offset=".9444" stop-color="#ff00fd"/><stop offset="1" stop-color="#ff00e6"/></linearGradient><linearGradient id="c227" gradientUnits="userSpaceOnUse" x1="1681" x2="1940" y1="0" y2="0"><stop offset="0" stop-color="#0014ff"/><stop offset=".2046" stop-color="#0307ff"/><stop offset=".3784" stop-color="#3200ff"/><stop offset=".7297" stop-color="#a200ff"/><stop offset=".9768" stop-color="#ff00fd"/><stop offset="1" stop-color="#ff00f4"/></linearGradient><linearGradient id="c228" gradientUnits="userSpaceOnUse" x1="1683" x2="1932" y1="0" y2="0"><stop offset="0" stop-color="#0012ff"/><stop offset=".2008" stop-color="#0305ff"/><stop offset=".3855" stop-color="#3300ff"/><stop offset=".751" stop-color="#a200ff"/><stop offset="1" stop-color="#fd00ff"/></linearGradient><linearGradient id="c229" gradientUnits="userSpaceOnUse" x1="1685" x2="1924" y1="0" y2="0"><stop offset="0" stop-color="#000fff"/><stop offset=".1967" stop-color="#0303ff"/><stop offset=".5941" stop-color="#6b00ff"/><stop offset=".9498" stop-color="#de00ff"/><stop offset="1" stop-color="#f100ff"/></linearGradient><linearGradient id="c230" gradientUnits="userSpaceOnUse" x1="1687" x2="1915" y1="0" y2="0"><stop offset="0" stop-color="#000dff"/><stop offset=".193" stop-color="#0302ff"/><stop offset=".6316" stop-color="#7100ff"/><stop offset="1" stop-color="#e300ff"/></linearGradient><linearGradient id="c231" gradientUnits="userSpaceOnUse" x1="1689" x2="1907" y1="0" y2="0"><stop offset="0" stop-color="#000bff"/><stop offset=".1881" stop-color="#0300ff"/><stop offset=".6468" stop-color="#7000ff"/><stop offset="1" stop-color="#d700ff"/></linearGradient><linearGradient id="c232" gradientUnits="userSpaceOnUse" x1="1691" x2="1899" y1="0" y2="0"><stop offset="0" stop-color="#0008ff"/><stop offset=".1827" stop-color="#0300ff"/><stop offset=".6683" stop-color="#7100ff"/><stop offset="1" stop-color="#cb00ff"/></linearGradient><linearGradient id="c233" gradientUnits="userSpaceOnUse" x1="1693" x2="1890" y1="0" y2="0"><stop offset="0" stop-color="#0006ff"/><stop offset=".1777" stop-color="#0300ff"/><stop offset=".6904" stop-color="#7000ff"/><stop offset="1" stop-color="#bf00ff"/></linearGradient><linearGradient id="c234" gradientUnits="userSpaceOnUse" x1="1695" x2="1882" y1="0" y2="0"><stop offset="0" stop-color="#0004ff"/><stop offset=".1711" stop-color="#0300ff"/><stop offset=".7166" stop-color="#7100ff"/><stop offset="1" stop-color="#b400ff"/></linearGradient><linearGradient id="c235" gradientUnits="userSpaceOnUse" x1="1698" x2="1874" y1="0" y2="0"><stop offset="0" stop-color="#0001ff"/><stop offset=".1591" stop-color="#0300ff"/><stop offset=".7443" stop-color="#7100ff"/><stop offset="1" stop-color="#a900ff"/></linearGradient><linearGradient id="c236" gradientUnits="userSpaceOnUse" x1="1700" x2="1865" y1="0" y2="0"><stop offset="0" stop-color="#0000ff"/><stop offset=".1515" stop-color="#0300ff"/><stop offset=".7758" stop-color="#7000ff"/><stop offset="1" stop-color="#9e00ff"/></linearGradient><linearGradient id="c237" gradientUnits="userSpaceOnUse" x1="1703" x2="1857" y1="0" y2="0"><stop offset="0" stop-color="#0000ff"/><stop offset=".1364" stop-color="#0300ff"/><stop offset=".8117" stop-color="#7100ff"/><stop offset="1" stop-color="#9400ff"/></linearGradient><linearGradient id="c238" gradientUnits="userSpaceOnUse" x1="1706" x2="1848" y1="0" y2="0"><stop offset="0" stop-color="#0000ff"/><stop offset=".1197" stop-color="#0300ff"/><stop offset=".8521" stop-color="#7000ff"/><stop offset="1" stop-color="#8900ff"/></linearGradient><linearGradient id="c239" gradientUnits="userSpaceOnUse" x1="1708" x2="1840" y1="0" y2="0"><stop offset="0" stop-color="#0000ff"/><stop offset=".1136" stop-color="#0400ff"/><stop offset=".9091" stop-color="#7200ff"/><stop offset="1" stop-color="#8000ff"/></linearGradient><linearGradient id="c240" gradientUnits="userSpaceOnUse" x1="1712" x2="1832" y1="0" y2="0"><stop offset="0" stop-color="#0000ff"/><stop offset=".1167" stop-color="#0800ff"/><stop offset=".9917" stop-color="#7600ff"/><stop offset="1" stop-color="#7700ff"/></linearGradient><linearGradient id="c241" gradientUnits="userSpaceOnUse" x1="1715" x2="1823" y1="0" y2="0"><stop offset="0" stop-color="#0000ff"/><stop offset=".9074" stop-color="#6200ff"/><stop offset="1" stop-color="#6d00ff"/></linearGradient><linearGradient id="c242" gradientUnits="userSpaceOnUse" x1="1719" x2="1815" y1="0" y2="0"><stop offset="0" stop-color="#0400ff"/><stop offset="1" stop-color="#6500ff"/></linearGradient><linearGradient id="c243" gradientUnits="userSpaceOnUse" x1="1723" x2="1807" y1="0" y2="0"><stop offset="0" stop-color="#0800ff"/><stop offset="1" stop-color="#5d00ff"/></linearGradient><linearGradient id="c244" gradientUnits="userSpaceOnUse" x1="1727" x2="1798" y1="0" y2="0"><stop offset="0" stop-color="#0d00ff"/><stop offset="1" stop-color="#5400ff"/></linearGradient><linearGradient id="c245" gradientUnits="userSpaceOnUse" x1="1731" x2="1790" y1="0" y2="0"><stop offset="0" stop-color="#1200ff"/><stop offset="1" stop-color="#4c00ff"/></linearGradient><linearGradient id="c246" gradientUnits="userSpaceOnUse" x1="1736" x2="1781" y1="0" y2="0"><stop offset="0" stop-color="#1700ff"/><stop offset="1" stop-color="#4300ff"/></linearGradient><linearGradient id="c247" gradientUnits="userSpaceOnUse" x1="1740" x2="1773" y1="0" y2="0"><stop offset="0" stop-color="#1c00ff"/><stop offset="1" stop-color="#3c00ff"/></linearGradient><linearGradient id="c248" gradientUnits="userSpaceOnUse" x1="1745" x2="1765" y1="0" y2="0"><stop offset="0" stop-color="#2100ff"/><stop offset="1" stop-color="#3500ff"/></linearGradient><linearGradient id="i0" gradientUnits="userSpaceOnUse" x1="2197" x2="2534" y1="0" y2="0"><stop offset="0" stop-color="#88ffcc"/><stop offset=".6736" stop-color="#e7ffc7"/><stop offset=".8427" stop-color="#fffdc5"/><stop offset="1" stop-color="#ffe6b2"/></linearGradient><linearGradient id="i1" gradientUnits="userSpaceOnUse" x1="2197" x2="2534" y1="0" y2="0"><stop offset="0" stop-color="#89ffcd"/><stop offset=".6706" stop-color="#e8ffc9"/><stop offset=".8338" stop-color="#fffdc6"/><stop offset="1" stop-color="#ffe5b2"/></linearGradient><linearGradient id="i2" gradientUnits="userSpaceOnUse" x1="2197" x2="2534" y1="0" y2="0"><stop offset="0" stop-color="#8affce"/><stop offset=".6677" stop-color="#e8ffca"/><stop offset=".822" stop-color="#fffdc8"/><stop offset="1" stop-color="#ffe3b2"/></linearGradient><linearGradient id="i3" gradientUnits="userSpaceOnUse" x1="2197" x2="2534" y1="0" y2="0"><stop offset="0" stop-color="#8bffd0"/><stop offset=".6647" stop-color="#e9ffcc"/><stop offset=".8131" stop-color="#fffdc9"/><stop offset="1" stop-color="#ffe2b2"/></linearGradient><linearGradient id="i4" gradientUnits="userSpaceOnUse" x1="2197" x2="2534" y1="0" y2="0"><stop offset="0" stop-color="#8cffd1"/><stop offset=".6617" stop-color="#eaffcd"/><stop offset=".8042" stop-color="#fffdcb"/><stop offset="1" stop-color="#ffe1b3"/></linearGradient><linearGradient id="i5" gradientUnits="userSpaceOnUse" x1="2197" x2="2534" y1="0" y2="0"><stop offset="0" stop-color="#8dffd2"/><stop offset=".6588" stop-color="#ebffcf"/><stop offset=".7953" stop-color="#fffdcc"/><stop offset="1" stop-color="#ffdfb3"/></linearGradient><linearGradient id="i6" gradientUnits="userSpaceOnUse" x1="2197" x2="2534" y1="0" y2="0"><stop offset="0" stop-color="#8effd4"/><stop offset=".6558" stop-color="#ecffd0"/><stop offset=".7864" stop-color="#fffdce"/><stop offset="1" stop-color="#ffdeb3"/></linearGradient><linearGradient id="i7" gradientUnits="userSpaceOnUse" x1="2197" x2="2534" y1="0" y2="0"><stop offset="0" stop-color="#8fffd5"/><stop offset=".6558" stop-color="#eeffd2"/><stop offset=".7774" stop-color="#fffdcf"/><stop offset="1" stop-color="#ffddb4"/></linearGradient><linearGradient id="i8" gradientUnits="userSpaceOnUse" x1="2197" x2="2534" y1="0" y2="0"><stop offset="0" stop-color="#90ffd6"/><stop offset=".6528" stop-color="#efffd3"/><stop offset=".7656" stop-color="#fffdd1"/><stop offset="1" stop-color="#ffdbb4"/></linearGradient><linearGradient id="i9" gradientUnits="userSpaceOnUse" x1="2197" x2="2534" y1="0" y2="0"><stop offset="0" stop-color="#91ffd8"/><stop offset=".6499" stop-color="#f0ffd5"/><stop offset=".7567" stop-color="#fffdd2"/><stop offset="1" stop-color="#ffdab4"/></linearGradient><linearGradient id="i10" gradientUnits="userSpaceOnUse" x1="2197" x2="2534" y1="0" y2="0"><stop offset="0" stop-color="#92ffd9"/><stop offset=".6469" stop-color="#f1ffd6"/><stop offset=".7478" stop-color="#fffdd4"/><stop offset="1" stop-color="#ffd9b4"/></linearGradient><linearGradient id="i11" gradientUnits="userSpaceOnUse" x1="2197" x2="2534" y1="0" y2="0"><stop offset="0" stop-color="#93ffda"/><stop offset=".6439" stop-color="#f2ffd8"/><stop offset=".7389" stop-color="#fffdd5"/><stop offset="1" stop-color="#ffd7b5"/></linearGradient><linearGradient id="i12" gradientUnits="userSpaceOnUse" x1="2197" x2="2534" y1="0" y2="0"><stop offset="0" stop-color="#94ffdc"/><stop offset=".6409" stop-color="#f3ffd9"/><stop offset=".73" stop-color="#fffdd7"/><stop offset="1" stop-color="#ffd6b5"/></linearGradient><linearGradient id="i13" gradientUnits="userSpaceOnUse" x1="2197" x2="2534" y1="0" y2="0"><stop offset="0" stop-color="#95ffdd"/><stop offset=".638" stop-color="#f4ffdb"/><stop offset=".7211" stop-color="#fffdd8"/><stop offset="1" stop-color="#ffd5b5"/></linearGradient><linearGradient id="i14" gradientUnits="userSpaceOnUse" x1="2197" x2="2534" y1="0" y2="0"><stop offset="0" stop-color="#96ffdf"/><stop offset=".638" stop-color="#f5ffdc"/><stop offset=".7122" stop-color="#fffdda"/><stop offset="1" stop-color="#ffd4b5"/></linearGradient><linearGradient id="i15" gradientUnits="userSpaceOnUse" x1="2197" x2="2534" y1="0" y2="0"><stop offset="0" stop-color="#97ffe0"/><stop offset=".635" stop-color="#f6ffde"/><stop offset=".7033" stop-color="#fffcdb"/><stop offset="1" stop-color="#ffd2b5"/></linearGradient><linearGradient id="i16" gradientUnits="userSpaceOnUse" x1="2197" x2="2534" y1="0" y2="0"><stop offset="0" stop-color="#98ffe2"/><stop offset=".632" stop-color="#f7ffdf"/><stop offset=".6944" stop-color="#fffcdd"/><stop offset="1" stop-color="#ffd1b6"/></linearGradient><linearGradient id="i17" gradientUnits="userSpaceOnUse" x1="2197" x2="2534" y1="0" y2="0"><stop offset="0" stop-color="#99ffe3"/><stop offset=".6291" stop-color="#f8ffe1"/><stop offset=".6855" stop-color="#fffcde"/><stop offset="1" stop-color="#ffd0b6"/></linearGradient><linearGradient id="i18" gradientUnits="userSpaceOnUse" x1="2197" x2="2534" y1="0" y2="0"><stop offset="0" stop-color="#9affe4"/><stop offset=".6706" stop-color="#fffde1"/><stop offset="1" stop-color="#ffcfb6"/></linearGradient><linearGradient id="i19" gradientUnits="userSpaceOnUse" x1="2197" x2="2534" y1="0" y2="0"><stop offset="0" stop-color="#9bffe6"/><stop offset=".6231" stop-color="#fbffe4"/><stop offset=".6706" stop-color="#fffce1"/><stop offset="1" stop-color="#ffcdb6"/></linearGradient><linearGradient id="i20" gradientUnits="userSpaceOnUse" x1="2197" x2="2534" y1="0" y2="0"><stop offset="0" stop-color="#9cffe7"/><stop offset=".6202" stop-color="#fcffe6"/><stop offset=".6677" stop-color="#fffbe1"/><stop offset="1" stop-color="#ffccb7"/></linearGradient><linearGradient id="i21" gradientUnits="userSpaceOnUse" x1="2197" x2="2534" y1="0" y2="0"><stop offset="0" stop-color="#9dffe9"/><stop offset=".6409" stop-color="#fffde6"/><stop offset=".9852" stop-color="#ffcdb9"/><stop offset="1" stop-color="#ffcbb7"/></linearGradient><linearGradient id="i22" gradientUnits="userSpaceOnUse" x1="2197" x2="2534" y1="0" y2="0"><stop offset="0" stop-color="#9effea"/><stop offset=".632" stop-color="#fffde7"/><stop offset=".9733" stop-color="#ffcdba"/><stop offset="1" stop-color="#ffcab7"/></linearGradient><linearGradient id="i23" gradientUnits="userSpaceOnUse" x1="2197" x2="2534" y1="0" y2="0"><stop offset="0" stop-color="#a0ffec"/><stop offset=".6231" stop-color="#fffde9"/><stop offset=".9644" stop-color="#ffcdbb"/><stop offset="1" stop-color="#ffc8b7"/></linearGradient><linearGradient id="i24" gradientUnits="userSpaceOnUse" x1="2197" x2="2534" y1="0" y2="0"><stop offset="0" stop-color="#a1ffed"/><stop offset=".6142" stop-color="#fffdea"/><stop offset=".9555" stop-color="#ffccbd"/><stop offset="1" stop-color="#ffc7b8"/></linearGradient><linearGradient id="i25" gradientUnits="userSpaceOnUse" x1="2197" x2="2534" y1="0" y2="0"><stop offset="0" stop-color="#a2ffef"/><stop offset=".6053" stop-color="#fffdec"/><stop offset=".9466" stop-color="#ffccbe"/><stop offset="1" stop-color="#ffc6b8"/></linearGradient><linearGradient id="i26" gradientUnits="userSpaceOnUse" x1="2197" x2="2534" y1="0" y2="0"><stop offset="0" stop-color="#a3fff1"/><stop offset=".5935" stop-color="#fffdee"/><stop offset=".9318" stop-color="#ffcdc0"/><stop offset="1" stop-color="#ffc5b8"/></linearGradient><linearGradient id="i27" gradientUnits="userSpaceOnUse" x1="2197" x2="2534" y1="0" y2="0"><stop offset="0" stop-color="#a4fff2"/><stop offset=".5846" stop-color="#fffdf0"/><stop offset=".9228" stop-color="#ffcdc1"/><stop offset="1" stop-color="#ffc3b8"/></linearGradient><linearGradient id="i28" gradientUnits="userSpaceOnUse" x1="2197" x2="2534" y1="0" y2="0"><stop offset="0" stop-color="#a5fff4"/><stop offset=".5757" stop-color="#fffdf1"/><stop offset=".9139" stop-color="#ffccc2"/><stop offset="1" stop-color="#ffc2b9"/></linearGradient><linearGradient id="i29" gradientUnits="userSpaceOnUse" x1="2197" x2="2534" y1="0" y2="0"><stop offset="0" stop-color="#a6fff5"/><stop offset=".5668" stop-color="#fffdf3"/><stop offset=".9021" stop-color="#ffcdc4"/><stop offset="1" stop-color="#ffc1b9"/></linearGradient><linearGradient id="i30" gradientUnits="userSpaceOnUse" x1="2197" x2="2534" y1="0" y2="0"><stop offset="0" stop-color="#a8fff7"/><stop offset=".5579" stop-color="#fffdf4"/><stop offset=".8932" stop-color="#ffccc5"/><stop offset="1" stop-color="#ffc0b9"/></linearGradient><linearGradient id="i31" gradientUnits="userSpaceOnUse" x1="2197" x2="2534" y1="0" y2="0"><stop offset="0" stop-color="#a9fff8"/><stop offset=".546" stop-color="#fffdf7"/><stop offset=".8813" stop-color="#ffcdc7"/><stop offset="1" stop-color="#ffbfb9"/></linearGradient><linearGradient id="i32" gradientUnits="userSpaceOnUse" x1="2197" x2="2534" y1="0" y2="0"><stop offset="0" stop-color="#aafffa"/><stop offset=".5371" stop-color="#fffdf8"/><stop offset=".8694" stop-color="#ffcdc9"/><stop offset="1" stop-color="#ffbdba"/></linearGradient><linearGradient id="i33" gradientUnits="userSpaceOnUse" x1="2197" x2="2534" y1="0" y2="0"><stop offset="0" stop-color="#abfffc"/><stop offset=".5282" stop-color="#fffdfa"/><stop offset=".8605" stop-color="#ffcdca"/><stop offset="1" stop-color="#ffbcba"/></linearGradient><linearGradient id="i34" gradientUnits="userSpaceOnUse" x1="2197" x2="2534" y1="0" y2="0"><stop offset="0" stop-color="#acfffd"/><stop offset=".5193" stop-color="#fffdfb"/><stop offset=".8516" stop-color="#ffcccb"/><stop offset="1" stop-color="#ffbbba"/></linearGradient><linearGradient id="i35" gradientUnits="userSpaceOnUse" x1="2197" x2="2534" y1="0" y2="0"><stop offset="0" stop-color="#aeffff"/><stop offset=".5104" stop-color="#fffdfd"/><stop offset=".8398" stop-color="#ffcdcd"/><stop offset="1" stop-color="#ffbaba"/></linearGradient><linearGradient id="i36" gradientUnits="userSpaceOnUse" x1="2197" x2="2534" y1="0" y2="0"><stop offset="0" stop-color="#aefdff"/><stop offset=".5104" stop-color="#fffbfd"/><stop offset=".8427" stop-color="#ffcbcd"/><stop offset="1" stop-color="#ffb9ba"/></linearGradient><linearGradient id="i37" gradientUnits="userSpaceOnUse" x1="2197" x2="2534" y1="0" y2="0"><stop offset="0" stop-color="#aefcff"/><stop offset=".5104" stop-color="#fffafd"/><stop offset=".8427" stop-color="#ffcacd"/><stop offset="1" stop-color="#ffb8bb"/></linearGradient><linearGradient id="i38" gradientUnits="userSpaceOnUse" x1="2197" x2="2534" y1="0" y2="0"><stop offset="0" stop-color="#aefaff"/><stop offset=".5134" stop-color="#fff8fd"/><stop offset=".8487" stop-color="#ffc8cc"/><stop offset="1" stop-color="#ffb6bb"/></linearGradient><linearGradient id="i39" gradientUnits="userSpaceOnUse" x1="2197" x2="2534" y1="0" y2="0"><stop offset="0" stop-color="#aef8ff"/><stop offset=".5134" stop-color="#fff6fd"/><stop offset=".8487" stop-color="#ffc6cd"/><stop offset="1" stop-color="#ffb5bb"/></linearGradient><linearGradient id="i40" gradientUnits="userSpaceOnUse" x1="2197" x2="2534" y1="0" y2="0"><stop offset="0" stop-color="#aef7ff"/><stop offset=".5134" stop-color="#fff4fd"/><stop offset=".8487" stop-color="#ffc5cd"/><stop offset="1" stop-color="#ffb4bb"/></linearGradient><linearGradient id="i41" gradientUnits="userSpaceOnUse" x1="2197" x2="2534" y1="0" y2="0"><stop offset="0" stop-color="#aef5ff"/><stop offset=".5134" stop-color="#fff3fd"/><stop offset=".8487" stop-color="#ffc4cd"/><stop offset="1" stop-color="#ffb3bc"/></linearGradient><linearGradient id="i42" gradientUnits="userSpaceOnUse" x1="2197" x2="2534" y1="0" y2="0"><stop offset="0" stop-color="#aef4ff"/><stop offset=".5163" stop-color="#fff1fd"/><stop offset=".8546" stop-color="#ffc2cc"/><stop offset="1" stop-color="#ffb2bc"/></linearGradient><linearGradient id="i43" gradientUnits="userSpaceOnUse" x1="2197" x2="2534" y1="0" y2="0"><stop offset="0" stop-color="#aef2ff"/><stop offset=".5163" stop-color="#ffeffd"/><stop offset=".8546" stop-color="#ffc1cd"/><stop offset="1" stop-color="#ffb1bc"/></linearGradient><linearGradient id="i44" gradientUnits="userSpaceOnUse" x1="2197" x2="2534" y1="0" y2="0"><stop offset="0" stop-color="#aef0ff"/><stop offset=".5163" stop-color="#ffeefd"/><stop offset=".8546" stop-color="#ffbfcd"/><stop offset="1" stop-color="#ffb0bc"/></linearGradient><linearGradient id="i45" gradientUnits="userSpaceOnUse" x1="2197" x2="2534" y1="0" y2="0"><stop offset="0" stop-color="#afefff"/><stop offset=".5163" stop-color="#ffecfd"/><stop offset=".8546" stop-color="#ffbecd"/><stop offset="1" stop-color="#ffaebc"/></linearGradient><linearGradient id="i46" gradientUnits="userSpaceOnUse" x1="2197" x2="2534" y1="0" y2="0"><stop offset="0" stop-color="#afedff"/><stop offset=".5193" stop-color="#ffeafd"/><stop offset=".8605" stop-color="#ffbccd"/><stop offset="1" stop-color="#ffadbd"/></linearGradient><linearGradient id="i47" gradientUnits="userSpaceOnUse" x1="2197" x2="2534" y1="0" y2="0"><stop offset="0" stop-color="#afecff"/><stop offset=".5193" stop-color="#ffe8fd"/><stop offset=".8605" stop-color="#ffbbcd"/><stop offset="1" stop-color="#ffacbd"/></linearGradient><linearGradient id="i48" gradientUnits="userSpaceOnUse" x1="2197" x2="2534" y1="0" y2="0"><stop offset="0" stop-color="#afeaff"/><stop offset=".5193" stop-color="#ffe7fd"/><stop offset=".8605" stop-color="#ffbacd"/><stop offset="1" stop-color="#ffabbd"/></linearGradient><linearGradient id="i49" gradientUnits="userSpaceOnUse" x1="2197" x2="2534" y1="0" y2="0"><stop offset="0" stop-color="#afe9ff"/><stop offset=".5223" stop-color="#ffe5fd"/><stop offset=".8665" stop-color="#ffb8cc"/><stop offset="1" stop-color="#ffaabd"/></linearGradient><linearGradient id="i50" gradientUnits="userSpaceOnUse" x1="2197" x2="2534" y1="0" y2="0"><stop offset="0" stop-color="#afe7ff"/><stop offset=".5223" stop-color="#ffe3fd"/><stop offset=".8665" stop-color="#ffb7cd"/><stop offset="1" stop-color="#ffa9be"/></linearGradient><linearGradient id="i51" gradientUnits="userSpaceOnUse" x1="2197" x2="2534" y1="0" y2="0"><stop offset="0" stop-color="#afe5ff"/><stop offset=".5223" stop-color="#ffe2fd"/><stop offset=".8665" stop-color="#ffb5cd"/><stop offset="1" stop-color="#ffa8be"/></linearGradient><linearGradient id="i52" gradientUnits="userSpaceOnUse" x1="2197" x2="2534" y1="0" y2="0"><stop offset="0" stop-color="#afe4ff"/><stop offset=".5223" stop-color="#ffe0fd"/><stop offset=".8694" stop-color="#ffb4cd"/><stop offset="1" stop-color="#ffa7be"/></linearGradient><linearGradient id="i53" gradientUnits="userSpaceOnUse" x1="2197" x2="2534" y1="0" y2="0"><stop offset="0" stop-color="#afe2ff"/><stop offset=".5252" stop-color="#ffdefd"/><stop offset=".8724" stop-color="#ffb2cd"/><stop offset="1" stop-color="#ffa5be"/></linearGradient><linearGradient id="i54" gradientUnits="userSpaceOnUse" x1="2197" x2="2534" y1="0" y2="0"><stop offset="0" stop-color="#afe1ff"/><stop offset=".5252" stop-color="#ffddfd"/><stop offset=".8724" stop-color="#ffb1cd"/><stop offset="1" stop-color="#ffa4be"/></linearGradient><linearGradient id="i55" gradientUnits="userSpaceOnUse" x1="2197" x2="2534" y1="0" y2="0"><stop offset="0" stop-color="#afdfff"/><stop offset=".5252" stop-color="#ffdbfd"/><stop offset=".8754" stop-color="#ffb0cd"/><stop offset="1" stop-color="#ffa3bf"/></linearGradient><linearGradient id="i56" gradientUnits="userSpaceOnUse" x1="2197" x2="2534" y1="0" y2="0"><stop offset="0" stop-color="#b0deff"/><stop offset=".5252" stop-color="#ffdafd"/><stop offset=".8754" stop-color="#ffafcd"/><stop offset="1" stop-color="#ffa2bf"/></linearGradient><linearGradient id="i57" gradientUnits="userSpaceOnUse" x1="2197" x2="2534" y1="0" y2="0"><stop offset="0" stop-color="#b0dcff"/><stop offset=".5282" stop-color="#ffd8fd"/><stop offset=".8783" stop-color="#ffadcd"/><stop offset="1" stop-color="#ffa1bf"/></linearGradient><linearGradient id="i58" gradientUnits="userSpaceOnUse" x1="2197" x2="2534" y1="0" y2="0"><stop offset="0" stop-color="#b0dbff"/><stop offset=".5282" stop-color="#ffd7fd"/><stop offset=".8813" stop-color="#ffaccc"/><stop offset="1" stop-color="#ffa0bf"/></linearGradient><linearGradient id="i59" gradientUnits="userSpaceOnUse" x1="2197" x2="2534" y1="0" y2="0"><stop offset="0" stop-color="#b0d9ff"/><stop offset=".5282" stop-color="#ffd5fd"/><stop offset=".8813" stop-color="#ffabcd"/><stop offset="1" stop-color="#ff9fbf"/></linearGradient><linearGradient id="i60" gradientUnits="userSpaceOnUse" x1="2197" x2="2534" y1="0" y2="0"><stop offset="0" stop-color="#b0d8ff"/><stop offset=".5282" stop-color="#ffd4fd"/><stop offset=".8813" stop-color="#ffa9cd"/><stop offset="1" stop-color="#ff9ec0"/></linearGradient><linearGradient id="i61" gradientUnits="userSpaceOnUse" x1="2197" x2="2534" y1="0" y2="0"><stop offset="0" stop-color="#b0d7ff"/><stop offset=".5312" stop-color="#ffd2fd"/><stop offset=".8872" stop-color="#ffa8cc"/><stop offset="1" stop-color="#ff9dc0"/></linearGradient><linearGradient id="i62" gradientUnits="userSpaceOnUse" x1="2197" x2="2534" y1="0" y2="0"><stop offset="0" stop-color="#b0d5ff"/><stop offset=".5312" stop-color="#ffd0fd"/><stop offset=".8872" stop-color="#ffa6cd"/><stop offset="1" stop-color="#ff9cc0"/></linearGradient><linearGradient id="i63" gradientUnits="userSpaceOnUse" x1="2197" x2="2534" y1="0" y2="0"><stop offset="0" stop-color="#b0d4ff"/><stop offset=".5312" stop-color="#ffcffd"/><stop offset=".8872" stop-color="#ffa5cd"/><stop offset="1" stop-color="#ff9bc0"/></linearGradient><linearGradient id="i64" gradientUnits="userSpaceOnUse" x1="2197" x2="2534" y1="0" y2="0"><stop offset="0" stop-color="#b0d2ff"/><stop offset=".5312" stop-color="#ffcefd"/><stop offset=".8872" stop-color="#ffa4cd"/><stop offset="1" stop-color="#ff9ac1"/></linearGradient><linearGradient id="i65" gradientUnits="userSpaceOnUse" x1="2197" x2="2534" y1="0" y2="0"><stop offset="0" stop-color="#b0d1ff"/><stop offset=".5341" stop-color="#ffccfd"/><stop offset=".8932" stop-color="#ffa3cc"/><stop offset="1" stop-color="#ff99c1"/></linearGradient><linearGradient id="i66" gradientUnits="userSpaceOnUse" x1="2197" x2="2534" y1="0" y2="0"><stop offset="0" stop-color="#b0cfff"/><stop offset=".5341" stop-color="#ffcafd"/><stop offset=".8932" stop-color="#ffa1cd"/><stop offset="1" stop-color="#ff97c1"/></linearGradient><linearGradient id="i67" gradientUnits="userSpaceOnUse" x1="2197" x2="2534" y1="0" y2="0"><stop offset="0" stop-color="#b0ceff"/><stop offset=".5341" stop-color="#ffc9fd"/><stop offset=".8932" stop-color="#ffa0cd"/><stop offset="1" stop-color="#ff96c1"/></linearGradient><linearGradient id="i68" gradientUnits="userSpaceOnUse" x1="2197" x2="2534" y1="0" y2="0"><stop offset="0" stop-color="#b1cdff"/><stop offset=".5341" stop-color="#ffc8fd"/><stop offset=".8961" stop-color="#ff9fcd"/><stop offset="1" stop-color="#ff95c1"/></linearGradient><linearGradient id="i69" gradientUnits="userSpaceOnUse" x1="2197" x2="2534" y1="0" y2="0"><stop offset="0" stop-color="#b1cbff"/><stop offset=".5371" stop-color="#ffc6fd"/><stop offset=".8991" stop-color="#ff9dcd"/><stop offset="1" stop-color="#ff94c2"/></linearGradient><linearGradient id="i70" gradientUnits="userSpaceOnUse" x1="2197" x2="2534" y1="0" y2="0"><stop offset="0" stop-color="#b1caff"/><stop offset=".5371" stop-color="#ffc4fd"/><stop offset=".8991" stop-color="#ff9ccd"/><stop offset="1" stop-color="#ff93c2"/></linearGradient><linearGradient id="g27" x1="0" y1="0" x2="0" y2="1"><stop offset="0" stop-color="#ff5c5c"/><stop offset="1" stop-color="#ff4444"/></linearGradient><linearGradient id="g28" x1="0" y1="0" x2="0" y2="1"><stop offset="0" stop-color="#5cae5c"/><stop offset="1" stop-color="#3c9c3c"/></linearGradient><linearGradient id="g29" x1="0" y1="0" x2="0" y2="1"><stop offset="0" stop-color="#5c5cff"/><stop offset="1" stop-color="#4444ff"/></linearGradient><linearGradient id="g30" x1="0" y1="0" x2="0" y2="1"><stop offset="0" stop-color="#3e3e3e"/><stop offset="0.49" stop-color="#303030"/><stop offset="0.5" stop-color="#181818"/><stop offset="1" stop-color="#282828"/></linearGradient><linearGradient id="g31" x1="0" y1="0" x2="0" y2="1"><stop offset="0" stop-color="#484848"/><stop offset="1" stop-color="#222222"/></linearGradient><linearGradient id="g32" x1="0" y1="0" x2="0" y2="1"><stop offset="0" stop-color="#a8a8a8"/><stop offset="0.12" stop-color="#929292"/><stop offset="1" stop-color="#646464"/></linearGradient><linearGradient id="g33" x1="0" y1="0" x2="0" y2="1"><stop offset="0" stop-color="#141414"/><stop offset="1" stop-color="#3c3c3c"/></linearGradient><linearGradient id="g34" x1="0" y1="0" x2="0" y2="1"><stop offset="0" stop-color="#aaaaaa"/><stop offset="1" stop-color="#6a6a6a"/></linearGradient><linearGradient id="g35" x1="0" y1="0" x2="0" y2="1"><stop offset="0" stop-color="#a4a4a4"/><stop offset="1" stop-color="#8a8a8a"/></linearGradient><linearGradient id="g36" x1="0" y1="0" x2="0" y2="1"><stop offset="0" stop-color="#8e8e8e"/><stop offset="1" stop-color="#5a5a5a"/></linearGradient><linearGradient id="g37" x1="0" y1="0" x2="0" y2="1"><stop offset="0" stop-color="#7c7c7c"/><stop offset="1" stop-color="#a8a8a8"/></linearGradient><linearGradient id="g38" x1="0" y1="0" x2="0" y2="1"><stop offset="0" stop-color="#a2a2a2"/><stop offset="0.47" stop-color="#b0b0b0"/><stop offset="0.52" stop-color="#969696"/><stop offset="1" stop-color="#909090"/></linearGradient><linearGradient id="g39" x1="0" y1="0" x2="0" y2="1"><stop offset="0" stop-color="#1c1c1c"/><stop offset="0.45" stop-color="#1c1c1c"/><stop offset="0.5" stop-color="#000"/><stop offset="1" stop-color="#000"/></linearGradient><linearGradient id="g40" x1="0" y1="0" x2="0" y2="1"><stop offset="0" stop-color="#7e7e7e"/><stop offset="1" stop-color="#a6a6a6"/></linearGradient><linearGradient id="g41" x1="0" y1="0" x2="0" y2="1"><stop offset="0" stop-color="#7e7e7e"/><stop offset="1" stop-color="#a6a6a6"/></linearGradient><linearGradient id="g42" x1="0" y1="0" x2="0" y2="1"><stop offset="0" stop-color="#7e7e7e"/><stop offset="1" stop-color="#a6a6a6"/></linearGradient><linearGradient id="g43" x1="0" y1="0" x2="0" y2="1"><stop offset="0" stop-color="#7e7e7e"/><stop offset="1" stop-color="#a6a6a6"/></linearGradient><linearGradient id="g44" x1="0" y1="0" x2="0" y2="1"><stop offset="0" stop-color="#7e7e7e"/><stop offset="1" stop-color="#a6a6a6"/></linearGradient><linearGradient id="g45" x1="0" y1="0" x2="0" y2="1"><stop offset="0" stop-color="#7e7e7e"/><stop offset="1" stop-color="#a6a6a6"/></linearGradient><linearGradient id="g46" x1="0" y1="0" x2="0" y2="1"><stop offset="0" stop-color="#7e7e7e"/><stop offset="1" stop-color="#a6a6a6"/></linearGradient><linearGradient id="g47" x1="0" y1="0" x2="1" y2="0"><stop offset="0" stop-color="#000000" stop-opacity="0"/><stop offset="0.4" stop-color="#000000" stop-opacity="0.4"/><stop offset="1" stop-color="#000000" stop-opacity="0.8"/></linearGradient></defs><rect x="0" y="0" width="2560" height="1628" fill="#333333"/>
<rect x="0" y="0" width="2560" height="37" fill="#f3f3f3"/>
<text x="36.04" y="25.6" font-size="19.68" fill="#969696" textLength="553.88" lengthAdjust="spacingAndGlyphs" xml:space="preserve">Calman 2025 Calman Ultimate for Business 296 Days Remaining</text>
<text x="600.37" y="25.6" font-size="19.68" fill="#969696" textLength="83.31" lengthAdjust="spacingAndGlyphs" xml:space="preserve">- Untitled</text>
<g transform="translate(14.8 17.6) rotate(0)">
<rect x="-4.95" y="-4.95" width="9.9" height="9.9" rx="2" fill="#f9c610" transform="translate(0 -6.95) rotate(45)"/>
<path d="M-3.4 -5.3L0 -8.700L3.4 -5.3" fill="none" stroke="#ffe860" stroke-width="1.1"/>
</g>
<g transform="translate(14.8 17.6) rotate(90)">
<rect x="-4.95" y="-4.95" width="9.9" height="9.9" rx="2" fill="#12cc12" transform="translate(0 -6.95) rotate(45)"/>
<path d="M-3.4 -5.3L0 -8.700L3.4 -5.3" fill="none" stroke="#70ff70" stroke-width="1.1"/>
</g>
<g transform="translate(14.8 17.6) rotate(180)">
<rect x="-4.95" y="-4.95" width="9.9" height="9.9" rx="2" fill="#ee1a5c" transform="translate(0 -6.95) rotate(45)"/>
<path d="M-3.4 -5.3L0 -8.700L3.4 -5.3" fill="none" stroke="#ff8ab4" stroke-width="1.1"/>
</g>
<g transform="translate(14.8 17.6) rotate(270)">
<rect x="-4.95" y="-4.95" width="9.9" height="9.9" rx="2" fill="#30b4ee" transform="translate(0 -6.95) rotate(45)"/>
<path d="M-3.4 -5.3L0 -8.700L3.4 -5.3" fill="none" stroke="#a0ecff" stroke-width="1.1"/>
</g>
<line x1="2360.7" y1="17" x2="2377.2" y2="17" stroke="#8a8a8a" stroke-width="1.3"/>
<rect x="2435.5" y="12.5" width="13" height="12.5" rx="2.5" fill="none" stroke="#8a8a8a" stroke-width="1.3"/>
<path d="M2439 9.7h8.5a4 4 0 0 1 4 4v8.5" fill="none" stroke="#8a8a8a" stroke-width="1.3"/>
<path d="M2512 9.5l16 16m0-16l-16 16" stroke="#8a8a8a" stroke-width="1.3" fill="none"/>
<rect x="0" y="37" width="2560" height="107.5" fill="#222222"/>
<rect x="311.5" y="57.5" width="2248.5" height="8.5" fill="url(#g1)"/>
<path d="M1 37H299.6V79a5.5 5.5 0 0 1-5.5 5.500H6.5A5.5 5.5 0 0 1 1 79Z" fill="url(#g2)" stroke="#b88c8c" stroke-width="1.5"/>
<rect x="1" y="37" width="298.8" height="1.2" fill="#e23d3d"/>
<g transform="translate(56.3 60.4) rotate(45) scale(1.06)">
<rect x="-11.9" y="-11.9" width="23.8" height="23.8" rx="2.5" fill="none" stroke="#fff" stroke-width="3.8"/>
<rect x="-7.8" y="-7.8" width="6.8" height="6.8" rx="0.8" fill="#fff"/>
<rect x="-7.8" y="1" width="6.8" height="6.8" rx="0.8" fill="#fff"/>
<rect x="1" y="-7.8" width="6.8" height="6.8" rx="0.8" fill="#fff"/>
<rect x="1" y="1" width="6.8" height="6.8" rx="0.8" fill="#fff"/>
<rect x="-0.6" y="-14.5" width="1.2" height="5" fill="#d42a2c" transform="rotate(0)"/>
<rect x="-0.6" y="-14.5" width="1.2" height="5" fill="#d42a2c" transform="rotate(90)"/>
<rect x="-0.6" y="-14.5" width="1.2" height="5" fill="#d42a2c" transform="rotate(180)"/>
<rect x="-0.6" y="-14.5" width="1.2" height="5" fill="#d42a2c" transform="rotate(270)"/>
</g>
<text x="79.71" y="70.9" font-size="40" fill="#ffffff" textLength="144.63" lengthAdjust="spacingAndGlyphs" xml:space="preserve">calman</text>
<circle cx="272.3" cy="59.8" r="15.7" fill="url(#g3)"/>
<path d="M264.2 58.1H280.5L272.35 66.5Z" fill="#fff"/>
<rect x="-6" y="95" width="49.5" height="44.5" rx="6" fill="url(#g4)" stroke="#d0d0d0" stroke-width="1.6"/>
<circle cx="21.2" cy="117.4" r="16.6" fill="url(#g5)"/>
<path d="M16.8 108.7L25.6 116.8L16.8 124.9Z" fill="#fff"/>
<path d="M48.2 144.5V100.5a6 6 0 0 1 6-6H192.3a6 6 0 0 1 6 6V144.5Z" fill="url(#g6)"/>
<path d="M48.2 144.5V100.5a6 6 0 0 1 6-6H192.3a6 6 0 0 1 6 6V144.5" fill="none" stroke="#8c8c8c" stroke-width="1.4"/>
<line x1="143.6" y1="95" x2="143.6" y2="144.5" stroke="#8c8c8c" stroke-width="1.4"/>
<text x="56.72" y="128" font-size="18.28" fill="#e6e6e6" textLength="78.08" lengthAdjust="spacingAndGlyphs" xml:space="preserve">History 1</text>
<circle cx="168.8" cy="122.4" r="16" fill="url(#g7)"/>
<path d="M164.4 124.4h9M168.9 119.9v9" stroke="#9a9a9a" stroke-width="1.5" fill="none"/>
<path d="M1623.9 144.5V101a6.5 6.5 0 0 1 6.5-6.5H1850.5a8 8 0 0 1 8 8V144.5Z" fill="url(#g8)"/>
<path d="M1624.7 144.5V101a6.5 6.5 0 0 1 6.5-6.5H1634.2V144.5Z" fill="#12e012"/>
<circle cx="1767.8" cy="119.5" r="14.5" fill="url(#g9)"/>
<path d="M1760.5 117.4h14.6l-7.3 7.9Z" fill="#fff"/>
<text x="1638.45" y="113.7" font-size="16.84" fill="#f0f0f0" textLength="108.24" lengthAdjust="spacingAndGlyphs" xml:space="preserve">X-Rite i1Pro 3</text>
<text x="1637.33" y="137.4" font-size="16.84" fill="#f0f0f0" textLength="92.44" lengthAdjust="spacingAndGlyphs" xml:space="preserve">Direct View</text>
<line x1="1799.8" y1="97" x2="1799.8" y2="144.5" stroke="#3c3c3c" stroke-width="1.6"/>
<circle cx="1833.6" cy="119" r="20.6" fill="#0000f0" stroke="#fff" stroke-width="1.6"/>
<text x="1833.8" y="124.5" font-size="16" fill="#fff" text-anchor="middle" font-family="'Liberation Serif', serif">718</text>
<path d="M1867.9 144.5V101a6.5 6.5 0 0 1 6.5-6.5H2201.5a8 8 0 0 1 8 8V144.5Z" fill="url(#g10)"/>
<path d="M1868.7 144.5V101a6.5 6.5 0 0 1 6.5-6.5H1878.2V144.5Z" fill="#12e012"/>
<circle cx="2183.5" cy="119.5" r="14.5" fill="url(#g11)"/>
<path d="M2176.2 117.4h14.6l-7.3 7.9Z" fill="#fff"/>
<text x="1881.91" y="113.7" font-size="16.84" fill="#f0f0f0" textLength="280.04" lengthAdjust="spacingAndGlyphs" xml:space="preserve">CalMAN Client 3 Pattern Generator</text>
<path d="M2219.9 144.5V101a6.5 6.5 0 0 1 6.5-6.5H2446.5a8 8 0 0 1 8 8V144.5Z" fill="url(#g12)"/>
<path d="M2220.7 144.5V101a6.5 6.5 0 0 1 6.5-6.5H2230.2V144.5Z" fill="#e8e800"/>
<circle cx="2428.6" cy="119.5" r="14.5" fill="url(#g13)"/>
<path d="M2421.3 117.4h14.6l-7.3 7.9Z" fill="#fff"/>
<text x="2233.56" y="113.7" font-size="16.84" fill="#f0f0f0" textLength="174.32" lengthAdjust="spacingAndGlyphs" xml:space="preserve">Direct Display Control</text>
<rect x="2461" y="95.2" width="52.6" height="44.3" rx="6" fill="url(#g14)" stroke="#c8c8c8" stroke-width="1.6"/>
<circle cx="2487.3" cy="117.6" r="16.5" fill="url(#g15)"/>
<g transform="translate(2487.6 117.5)">
<circle r="7.2" fill="none" stroke="#dcdcdc" stroke-width="3.5"/>
<path d="M-2.5 -8.3L-1 -11.2H1L2.5 -8.3Z" fill="#dcdcdc" transform="rotate(0)"/>
<path d="M-2.5 -8.3L-1 -11.2H1L2.5 -8.3Z" fill="#dcdcdc" transform="rotate(45)"/>
<path d="M-2.5 -8.3L-1 -11.2H1L2.5 -8.3Z" fill="#dcdcdc" transform="rotate(90)"/>
<path d="M-2.5 -8.3L-1 -11.2H1L2.5 -8.3Z" fill="#dcdcdc" transform="rotate(135)"/>
<path d="M-2.5 -8.3L-1 -11.2H1L2.5 -8.3Z" fill="#dcdcdc" transform="rotate(180)"/>
<path d="M-2.5 -8.3L-1 -11.2H1L2.5 -8.3Z" fill="#dcdcdc" transform="rotate(225)"/>
<path d="M-2.5 -8.3L-1 -11.2H1L2.5 -8.3Z" fill="#dcdcdc" transform="rotate(270)"/>
<path d="M-2.5 -8.3L-1 -11.2H1L2.5 -8.3Z" fill="#dcdcdc" transform="rotate(315)"/>
</g>
<rect x="2517" y="95.2" width="60" height="44.3" rx="6" fill="url(#g16)" stroke="#c8c8c8" stroke-width="1.6"/>
<circle cx="2538.6" cy="117.6" r="16.5" fill="url(#g17)"/>
<path d="M2541.8 109L2534 116.6L2541.8 124.2Z" fill="#fff"/>
<rect x="0" y="144.5" width="2.5" height="1482" fill="#2a2a2a"/>
<text x="35.63" y="298.5" font-size="63.01" fill="#f2f2f2" textLength="300.13" lengthAdjust="spacingAndGlyphs" xml:space="preserve">Colorspace</text>
<text x="226.7" y="375.3" font-size="23.55" fill="#d8d8d8" textLength="123.56" lengthAdjust="spacingAndGlyphs" xml:space="preserve">DeltaE 2000</text>
<rect x="32" y="383.5" width="513.8" height="633.7" fill="#232323"/>
<line x1="98.96" y1="383.5" x2="98.96" y2="1017.2" stroke="#8c8c8c" stroke-width="1.8"/>
<line x1="98.96" y1="1017.7" x2="98.96" y2="1025.7" stroke="#c2c2c2" stroke-width="2"/>
<line x1="167.52" y1="383.5" x2="167.52" y2="1017.2" stroke="#8c8c8c" stroke-width="1.8"/>
<line x1="167.52" y1="1017.7" x2="167.52" y2="1025.7" stroke="#c2c2c2" stroke-width="2"/>
<line x1="236.08" y1="383.5" x2="236.08" y2="1017.2" stroke="#8c8c8c" stroke-width="1.8"/>
<line x1="236.08" y1="1017.7" x2="236.08" y2="1025.7" stroke="#c2c2c2" stroke-width="2"/>
<line x1="304.64" y1="383.5" x2="304.64" y2="1017.2" stroke="#8c8c8c" stroke-width="1.8"/>
<line x1="304.64" y1="1017.7" x2="304.64" y2="1025.7" stroke="#c2c2c2" stroke-width="2"/>
<line x1="373.2" y1="383.5" x2="373.2" y2="1017.2" stroke="#8c8c8c" stroke-width="1.8"/>
<line x1="373.2" y1="1017.7" x2="373.2" y2="1025.7" stroke="#c2c2c2" stroke-width="2"/>
<line x1="441.76" y1="383.5" x2="441.76" y2="1017.2" stroke="#8c8c8c" stroke-width="1.8"/>
<line x1="441.76" y1="1017.7" x2="441.76" y2="1025.7" stroke="#c2c2c2" stroke-width="2"/>
<line x1="510.32" y1="383.5" x2="510.32" y2="1017.2" stroke="#8c8c8c" stroke-width="1.8"/>
<line x1="510.32" y1="1017.7" x2="510.32" y2="1025.7" stroke="#c2c2c2" stroke-width="2"/>
<line x1="32" y1="1017.2" x2="32" y2="1025.7" stroke="#c2c2c2" stroke-width="2"/>
<rect x="32" y="383.5" width="513.8" height="633.7" fill="none" stroke="#8c8c8c" stroke-width="2"/>
<text x="31.1" y="1050.9" font-size="23.35" fill="#d8d8d8" text-anchor="middle" xml:space="preserve">0</text>
<text x="99.66" y="1050.9" font-size="23.35" fill="#d8d8d8" text-anchor="middle" xml:space="preserve">2</text>
<text x="168.22" y="1050.9" font-size="23.35" fill="#d8d8d8" text-anchor="middle" xml:space="preserve">4</text>
<text x="236.78" y="1050.9" font-size="23.35" fill="#d8d8d8" text-anchor="middle" xml:space="preserve">6</text>
<text x="305.34" y="1050.9" font-size="23.35" fill="#d8d8d8" text-anchor="middle" xml:space="preserve">8</text>
<text x="373.9" y="1050.9" font-size="23.35" fill="#d8d8d8" text-anchor="middle" xml:space="preserve">10</text>
<text x="442.46" y="1050.9" font-size="23.35" fill="#d8d8d8" text-anchor="middle" xml:space="preserve">12</text>
<text x="511.02" y="1050.9" font-size="23.35" fill="#d8d8d8" text-anchor="middle" xml:space="preserve">14</text>
<rect x="33.2" y="392.1" width="108.7" height="59.4" fill="url(#g18)" stroke="#000" stroke-width="1.8"/>
<rect x="33.2" y="471.4" width="113.1" height="59.4" fill="url(#g19)" stroke="#000" stroke-width="1.8"/>
<rect x="33.2" y="550.7" width="165.7" height="59.4" fill="url(#g20)" stroke="#000" stroke-width="1.8"/>
<rect x="33.2" y="630" width="119.5" height="59.4" fill="url(#g21)" stroke="#000" stroke-width="1.8"/>
<rect x="33.2" y="709.3" width="15.7" height="59.4" fill="url(#g22)" stroke="#000" stroke-width="1.8"/>
<rect x="33.2" y="788.6" width="223.8" height="59.4" fill="url(#g23)" stroke="#000" stroke-width="1.8"/>
<rect x="33.2" y="867.9" width="207.9" height="59.4" fill="url(#g24)" stroke="#000" stroke-width="1.8"/>
<rect x="33.2" y="947.2" width="83.3" height="59.4" fill="url(#g25)" stroke="#000" stroke-width="1.8"/>
<line x1="32" y1="383.5" x2="32" y2="1017.2" stroke="#8c8c8c" stroke-width="2"/>
<rect x="626.6" y="278.2" width="221.4" height="485.8" fill="#232323"/>
<line x1="617.1" y1="281.3" x2="626.1" y2="281.3" stroke="#c2c2c2" stroke-width="2"/>
<text x="591.87" y="288.9" font-size="23.35" fill="#d8d8d8" textLength="24.13" lengthAdjust="spacingAndGlyphs" xml:space="preserve">15</text>
<line x1="626.6" y1="362.7" x2="848" y2="362.7" stroke="#8c8c8c" stroke-width="1.8"/>
<line x1="617.1" y1="362.7" x2="626.1" y2="362.7" stroke="#c2c2c2" stroke-width="2"/>
<text x="591.87" y="370.7" font-size="23.35" fill="#d8d8d8" textLength="24.13" lengthAdjust="spacingAndGlyphs" xml:space="preserve">10</text>
<line x1="626.6" y1="441.4" x2="848" y2="441.4" stroke="#8c8c8c" stroke-width="1.8"/>
<line x1="617.1" y1="441.4" x2="626.1" y2="441.4" stroke="#c2c2c2" stroke-width="2"/>
<text x="603.93" y="449.4" font-size="23.35" fill="#d8d8d8" textLength="12.07" lengthAdjust="spacingAndGlyphs" xml:space="preserve">5</text>
<line x1="626.6" y1="522.8" x2="848" y2="522.8" stroke="#8c8c8c" stroke-width="1.8"/>
<line x1="617.1" y1="522.8" x2="626.1" y2="522.8" stroke="#c2c2c2" stroke-width="2"/>
<text x="603.93" y="530.8" font-size="23.35" fill="#d8d8d8" textLength="12.07" lengthAdjust="spacingAndGlyphs" xml:space="preserve">0</text>
<line x1="626.6" y1="604.4" x2="848" y2="604.4" stroke="#8c8c8c" stroke-width="1.8"/>
<line x1="617.1" y1="604.4" x2="626.1" y2="604.4" stroke="#c2c2c2" stroke-width="2"/>
<text x="596.71" y="612.4" font-size="23.35" fill="#d8d8d8" textLength="19.29" lengthAdjust="spacingAndGlyphs" xml:space="preserve">-5</text>
<line x1="626.6" y1="685.4" x2="848" y2="685.4" stroke="#8c8c8c" stroke-width="1.8"/>
<line x1="617.1" y1="685.4" x2="626.1" y2="685.4" stroke="#c2c2c2" stroke-width="2"/>
<text x="584.64" y="693.4" font-size="23.35" fill="#d8d8d8" textLength="31.36" lengthAdjust="spacingAndGlyphs" xml:space="preserve">-10</text>
<line x1="617.1" y1="764.1" x2="626.1" y2="764.1" stroke="#c2c2c2" stroke-width="2"/>
<text x="584.64" y="775.4" font-size="23.35" fill="#d8d8d8" textLength="31.36" lengthAdjust="spacingAndGlyphs" xml:space="preserve">-15</text>
<line x1="626.6" y1="281.6" x2="848" y2="281.6" stroke="#8c8c8c" stroke-width="1.8"/>
<rect x="626.6" y="278.2" width="221.4" height="485.8" fill="none" stroke="#8c8c8c" stroke-width="2"/>
<line x1="626.6" y1="764" x2="626.6" y2="772.5" stroke="#c2c2c2" stroke-width="2"/>
<line x1="848" y1="764" x2="848" y2="772.5" stroke="#c2c2c2" stroke-width="2"/>
<text x="680.48" y="271" font-size="23.55" fill="#d8d8d8" textLength="72.19" lengthAdjust="spacingAndGlyphs" xml:space="preserve">Delta L</text>
<text x="708.96" y="789" font-size="23.35" fill="#d8d8d8" textLength="56.68" lengthAdjust="spacingAndGlyphs" xml:space="preserve">100W</text>
<line x1="648.6" y1="522.5" x2="825.3" y2="522.5" stroke="#0a0a0a" stroke-width="2"/>
<rect x="929.5" y="278.2" width="221.3" height="485.8" fill="#232323"/>
<line x1="920" y1="281.3" x2="929" y2="281.3" stroke="#c2c2c2" stroke-width="2"/>
<text x="894.77" y="288.9" font-size="23.35" fill="#d8d8d8" textLength="24.13" lengthAdjust="spacingAndGlyphs" xml:space="preserve">15</text>
<line x1="929.5" y1="362.7" x2="1150.8" y2="362.7" stroke="#8c8c8c" stroke-width="1.8"/>
<line x1="920" y1="362.7" x2="929" y2="362.7" stroke="#c2c2c2" stroke-width="2"/>
<text x="894.77" y="370.7" font-size="23.35" fill="#d8d8d8" textLength="24.13" lengthAdjust="spacingAndGlyphs" xml:space="preserve">10</text>
<line x1="929.5" y1="441.4" x2="1150.8" y2="441.4" stroke="#8c8c8c" stroke-width="1.8"/>
<line x1="920" y1="441.4" x2="929" y2="441.4" stroke="#c2c2c2" stroke-width="2"/>
<text x="906.83" y="449.4" font-size="23.35" fill="#d8d8d8" textLength="12.07" lengthAdjust="spacingAndGlyphs" xml:space="preserve">5</text>
<line x1="929.5" y1="522.8" x2="1150.8" y2="522.8" stroke="#8c8c8c" stroke-width="1.8"/>
<line x1="920" y1="522.8" x2="929" y2="522.8" stroke="#c2c2c2" stroke-width="2"/>
<text x="906.83" y="530.8" font-size="23.35" fill="#d8d8d8" textLength="12.07" lengthAdjust="spacingAndGlyphs" xml:space="preserve">0</text>
<line x1="929.5" y1="604.4" x2="1150.8" y2="604.4" stroke="#8c8c8c" stroke-width="1.8"/>
<line x1="920" y1="604.4" x2="929" y2="604.4" stroke="#c2c2c2" stroke-width="2"/>
<text x="899.61" y="612.4" font-size="23.35" fill="#d8d8d8" textLength="19.29" lengthAdjust="spacingAndGlyphs" xml:space="preserve">-5</text>
<line x1="929.5" y1="685.4" x2="1150.8" y2="685.4" stroke="#8c8c8c" stroke-width="1.8"/>
<line x1="920" y1="685.4" x2="929" y2="685.4" stroke="#c2c2c2" stroke-width="2"/>
<text x="887.54" y="693.4" font-size="23.35" fill="#d8d8d8" textLength="31.36" lengthAdjust="spacingAndGlyphs" xml:space="preserve">-10</text>
<line x1="920" y1="764.1" x2="929" y2="764.1" stroke="#c2c2c2" stroke-width="2"/>
<text x="887.54" y="775.4" font-size="23.35" fill="#d8d8d8" textLength="31.36" lengthAdjust="spacingAndGlyphs" xml:space="preserve">-15</text>
<line x1="929.5" y1="281.6" x2="1150.8" y2="281.6" stroke="#8c8c8c" stroke-width="1.8"/>
<rect x="929.5" y="278.2" width="221.3" height="485.8" fill="none" stroke="#8c8c8c" stroke-width="2"/>
<line x1="929.5" y1="764" x2="929.5" y2="772.5" stroke="#c2c2c2" stroke-width="2"/>
<line x1="1150.8" y1="764" x2="1150.8" y2="772.5" stroke="#c2c2c2" stroke-width="2"/>
<text x="981.7" y="271" font-size="23.55" fill="#d8d8d8" textLength="74.99" lengthAdjust="spacingAndGlyphs" xml:space="preserve">Delta C</text>
<text x="1011.81" y="789" font-size="23.35" fill="#d8d8d8" textLength="56.68" lengthAdjust="spacingAndGlyphs" xml:space="preserve">100W</text>
<rect x="952.4" y="483.4" width="175.7" height="40" fill="url(#g26)" stroke="#000" stroke-width="1.8"/>
<rect x="1231.6" y="278.2" width="221.3" height="485.8" fill="#232323"/>
<line x1="1222.1" y1="281.3" x2="1231.1" y2="281.3" stroke="#c2c2c2" stroke-width="2"/>
<text x="1196.87" y="288.9" font-size="23.35" fill="#d8d8d8" textLength="24.13" lengthAdjust="spacingAndGlyphs" xml:space="preserve">15</text>
<line x1="1231.6" y1="362.7" x2="1452.9" y2="362.7" stroke="#8c8c8c" stroke-width="1.8"/>
<line x1="1222.1" y1="362.7" x2="1231.1" y2="362.7" stroke="#c2c2c2" stroke-width="2"/>
<text x="1196.87" y="370.7" font-size="23.35" fill="#d8d8d8" textLength="24.13" lengthAdjust="spacingAndGlyphs" xml:space="preserve">10</text>
<line x1="1231.6" y1="441.4" x2="1452.9" y2="441.4" stroke="#8c8c8c" stroke-width="1.8"/>
<line x1="1222.1" y1="441.4" x2="1231.1" y2="441.4" stroke="#c2c2c2" stroke-width="2"/>
<text x="1208.93" y="449.4" font-size="23.35" fill="#d8d8d8" textLength="12.07" lengthAdjust="spacingAndGlyphs" xml:space="preserve">5</text>
<line x1="1231.6" y1="522.8" x2="1452.9" y2="522.8" stroke="#8c8c8c" stroke-width="1.8"/>
<line x1="1222.1" y1="522.8" x2="1231.1" y2="522.8" stroke="#c2c2c2" stroke-width="2"/>
<text x="1208.93" y="530.8" font-size="23.35" fill="#d8d8d8" textLength="12.07" lengthAdjust="spacingAndGlyphs" xml:space="preserve">0</text>
<line x1="1231.6" y1="604.4" x2="1452.9" y2="604.4" stroke="#8c8c8c" stroke-width="1.8"/>
<line x1="1222.1" y1="604.4" x2="1231.1" y2="604.4" stroke="#c2c2c2" stroke-width="2"/>
<text x="1201.71" y="612.4" font-size="23.35" fill="#d8d8d8" textLength="19.29" lengthAdjust="spacingAndGlyphs" xml:space="preserve">-5</text>
<line x1="1231.6" y1="685.4" x2="1452.9" y2="685.4" stroke="#8c8c8c" stroke-width="1.8"/>
<line x1="1222.1" y1="685.4" x2="1231.1" y2="685.4" stroke="#c2c2c2" stroke-width="2"/>
<text x="1189.64" y="693.4" font-size="23.35" fill="#d8d8d8" textLength="31.36" lengthAdjust="spacingAndGlyphs" xml:space="preserve">-10</text>
<line x1="1222.1" y1="764.1" x2="1231.1" y2="764.1" stroke="#c2c2c2" stroke-width="2"/>
<text x="1189.64" y="775.4" font-size="23.35" fill="#d8d8d8" textLength="31.36" lengthAdjust="spacingAndGlyphs" xml:space="preserve">-15</text>
<line x1="1231.6" y1="281.6" x2="1452.9" y2="281.6" stroke="#8c8c8c" stroke-width="1.8"/>
<rect x="1231.6" y="278.2" width="221.3" height="485.8" fill="none" stroke="#8c8c8c" stroke-width="2"/>
<line x1="1231.6" y1="764" x2="1231.6" y2="772.5" stroke="#c2c2c2" stroke-width="2"/>
<line x1="1452.9" y1="764" x2="1452.9" y2="772.5" stroke="#c2c2c2" stroke-width="2"/>
<text x="1283.03" y="271" font-size="23.55" fill="#d8d8d8" textLength="77.93" lengthAdjust="spacingAndGlyphs" xml:space="preserve">Delta H</text>
<text x="1313.91" y="789" font-size="23.35" fill="#d8d8d8" textLength="56.68" lengthAdjust="spacingAndGlyphs" xml:space="preserve">100W</text>
<line x1="1253.6" y1="522.5" x2="1430.2" y2="522.5" stroke="#0a0a0a" stroke-width="2"/>
<rect x="575.8" y="815" width="907.4" height="249.7" fill="#000000"/>
<rect x="602.2" y="825.7" width="96" height="204.2" fill="#ffffff"/>
<rect x="604.2" y="827.7" width="92" height="200.2" fill="#c0c4c0"/>
<rect x="604.2" y="928.3" width="92" height="99.6" fill="#c0c0c0"/>
<text x="625.15" y="1052.4" font-size="17.87" fill="#ffffff" textLength="50.92" lengthAdjust="spacingAndGlyphs" stroke="#fff" stroke-width=".35" xml:space="preserve">White</text>
<rect x="713.1" y="825.7" width="96" height="204.2" fill="#ffffff"/>
<rect x="715.1" y="827.7" width="92" height="200.2" fill="#d0001a"/>
<rect x="715.1" y="928.3" width="92" height="99.6" fill="#dc2e36"/>
<text x="744.14" y="1052.4" font-size="17.87" fill="#ffffff" textLength="33.55" lengthAdjust="spacingAndGlyphs" stroke="#fff" stroke-width=".35" xml:space="preserve">Red</text>
<rect x="824" y="825.7" width="96" height="204.2" fill="#ffffff"/>
<rect x="826" y="827.7" width="92" height="200.2" fill="#00d89e"/>
<rect x="826" y="928.3" width="92" height="99.6" fill="#00d070"/>
<text x="845.29" y="1052.4" font-size="17.87" fill="#ffffff" textLength="53.61" lengthAdjust="spacingAndGlyphs" stroke="#fff" stroke-width=".35" xml:space="preserve">Green</text>
<rect x="934.9" y="825.7" width="96" height="204.2" fill="#ffffff"/>
<rect x="936.9" y="827.7" width="92" height="200.2" fill="#0303c8"/>
<rect x="936.9" y="928.3" width="92" height="99.6" fill="#0000c8"/>
<text x="963.1" y="1052.4" font-size="17.87" fill="#ffffff" textLength="38.86" lengthAdjust="spacingAndGlyphs" stroke="#fff" stroke-width=".35" xml:space="preserve">Blue</text>
<rect x="1045.8" y="825.7" width="96" height="204.2" fill="#ffffff"/>
<rect x="1047.8" y="827.7" width="92" height="200.2" fill="#64d0cc"/>
<rect x="1047.8" y="928.3" width="92" height="99.6" fill="#00cccc"/>
<text x="1072.64" y="1052.4" font-size="17.87" fill="#ffffff" textLength="42.49" lengthAdjust="spacingAndGlyphs" stroke="#fff" stroke-width=".35" xml:space="preserve">Cyan</text>
<rect x="1156.7" y="825.7" width="96" height="204.2" fill="#ffffff"/>
<rect x="1158.7" y="827.7" width="92" height="200.2" fill="#cc00c8"/>
<rect x="1158.7" y="928.3" width="92" height="99.6" fill="#e02cc8"/>
<text x="1165.89" y="1052.4" font-size="17.87" fill="#ffffff" textLength="76" lengthAdjust="spacingAndGlyphs" stroke="#fff" stroke-width=".35" xml:space="preserve">Magenta</text>
<rect x="1267.6" y="825.7" width="96" height="204.2" fill="#ffffff"/>
<rect x="1269.6" y="827.7" width="92" height="200.2" fill="#c8c800"/>
<rect x="1269.6" y="928.3" width="92" height="99.6" fill="#c8c84a"/>
<text x="1288.22" y="1052.4" font-size="17.87" fill="#ffffff" textLength="54.36" lengthAdjust="spacingAndGlyphs" stroke="#fff" stroke-width=".35" xml:space="preserve">Yellow</text>
<rect x="1378.5" y="825.7" width="96" height="204.2" fill="#ffffff"/>
<rect x="1380.5" y="827.7" width="92" height="200.2" fill="#fbfffb"/>
<rect x="1380.5" y="928.3" width="92" height="99.6" fill="#ffffff"/>
<text x="1400.55" y="1052.4" font-size="17.87" fill="#ffffff" textLength="50.4" lengthAdjust="spacingAndGlyphs" stroke="#fff" stroke-width=".35" xml:space="preserve">100W</text>
<text transform="translate(596.2 897) rotate(-90)" font-size="17.9" fill="#fff" textLength="52.5" lengthAdjust="spacingAndGlyphs" stroke="#fff" stroke-width=".35">Actual</text>
<text transform="translate(596.2 1011.4) rotate(-90)" font-size="17.9" fill="#fff" textLength="52.5" lengthAdjust="spacingAndGlyphs" stroke="#fff" stroke-width=".35">Target</text>
<rect x="1499.1" y="235.6" width="1060.9" height="844.6" fill="#333333" stroke="#c4c408" stroke-width="10.8"/>
<rect x="2548" y="230.2" width="12" height="855.4" fill="#c4c408"/>
<text x="1967.73" y="269" font-size="23.04" fill="#d8d8d8" textLength="116.12" lengthAdjust="spacingAndGlyphs" xml:space="preserve">CIE 1931 xy</text>
<rect x="1549.6" y="277" width="993" height="754.1" fill="#232323"/>
<g clip-path="url(#loc)" shape-rendering="crispEdges">
<rect x="1625" y="281" width="41" height="3.6" fill="url(#c0)"/>
<rect x="1615" y="284" width="64" height="3.6" fill="url(#c1)"/>
<rect x="1609" y="287" width="81" height="3.6" fill="url(#c2)"/>
<rect x="1603" y="290" width="96" height="3.6" fill="url(#c3)"/>
<rect x="1599" y="293" width="108" height="3.6" fill="url(#c4)"/>
<rect x="1596" y="296" width="119" height="3.6" fill="url(#c5)"/>
<rect x="1592" y="299" width="130" height="3.6" fill="url(#c6)"/>
<rect x="1590" y="302" width="139" height="3.6" fill="url(#c7)"/>
<rect x="1587" y="305" width="149" height="3.6" fill="url(#c8)"/>
<rect x="1585" y="308" width="158" height="3.6" fill="url(#c9)"/>
<rect x="1583" y="311" width="166" height="3.6" fill="url(#c10)"/>
<rect x="1581" y="314" width="175" height="3.6" fill="url(#c11)"/>
<rect x="1579" y="317" width="183" height="3.6" fill="url(#c12)"/>
<rect x="1577" y="320" width="191" height="3.6" fill="url(#c13)"/>
<rect x="1576" y="323" width="198" height="3.6" fill="url(#c14)"/>
<rect x="1574" y="326" width="205" height="3.6" fill="url(#c15)"/>
<rect x="1573" y="329" width="212" height="3.6" fill="url(#c16)"/>
<rect x="1571" y="332" width="220" height="3.6" fill="url(#c17)"/>
<rect x="1570" y="335" width="226" height="3.6" fill="url(#c18)"/>
<rect x="1569" y="338" width="232" height="3.6" fill="url(#c19)"/>
<rect x="1568" y="341" width="239" height="3.6" fill="url(#c20)"/>
<rect x="1566" y="344" width="246" height="3.6" fill="url(#c21)"/>
<rect x="1565" y="347" width="252" height="3.6" fill="url(#c22)"/>
<rect x="1564" y="350" width="258" height="3.6" fill="url(#c23)"/>
<rect x="1564" y="353" width="263" height="3.6" fill="url(#c24)"/>
<rect x="1563" y="356" width="269" height="3.6" fill="url(#c25)"/>
<rect x="1562" y="359" width="275" height="3.6" fill="url(#c26)"/>
<rect x="1561" y="362" width="281" height="3.6" fill="url(#c27)"/>
<rect x="1560" y="365" width="286" height="3.6" fill="url(#c28)"/>
<rect x="1560" y="368" width="291" height="3.6" fill="url(#c29)"/>
<rect x="1559" y="371" width="297" height="3.6" fill="url(#c30)"/>
<rect x="1558" y="374" width="302" height="3.6" fill="url(#c31)"/>
<rect x="1558" y="377" width="307" height="3.6" fill="url(#c32)"/>
<rect x="1557" y="380" width="313" height="3.6" fill="url(#c33)"/>
<rect x="1557" y="383" width="317" height="3.6" fill="url(#c34)"/>
<rect x="1556" y="386" width="323" height="3.6" fill="url(#c35)"/>
<rect x="1556" y="389" width="327" height="3.6" fill="url(#c36)"/>
<rect x="1555" y="392" width="332" height="3.6" fill="url(#c37)"/>
<rect x="1555" y="395" width="337" height="3.6" fill="url(#c38)"/>
<rect x="1555" y="398" width="341" height="3.6" fill="url(#c39)"/>
<rect x="1554" y="401" width="347" height="3.6" fill="url(#c40)"/>
<rect x="1554" y="404" width="351" height="3.6" fill="url(#c41)"/>
<rect x="1554" y="407" width="355" height="3.6" fill="url(#c42)"/>
<rect x="1553" y="410" width="361" height="3.6" fill="url(#c43)"/>
<rect x="1553" y="413" width="365" height="3.6" fill="url(#c44)"/>
<rect x="1553" y="416" width="369" height="3.6" fill="url(#c45)"/>
<rect x="1552" y="419" width="374" height="3.6" fill="url(#c46)"/>
<rect x="1552" y="422" width="379" height="3.6" fill="url(#c47)"/>
<rect x="1552" y="425" width="383" height="3.6" fill="url(#c48)"/>
<rect x="1552" y="428" width="387" height="3.6" fill="url(#c49)"/>
<rect x="1552" y="431" width="391" height="3.6" fill="url(#c50)"/>
<rect x="1552" y="434" width="395" height="3.6" fill="url(#c51)"/>
<rect x="1551" y="437" width="400" height="3.6" fill="url(#c52)"/>
<rect x="1551" y="440" width="405" height="3.6" fill="url(#c53)"/>
<rect x="1551" y="443" width="409" height="3.6" fill="url(#c54)"/>
<rect x="1551" y="446" width="413" height="3.6" fill="url(#c55)"/>
<rect x="1551" y="449" width="417" height="3.6" fill="url(#c56)"/>
<rect x="1551" y="452" width="421" height="3.6" fill="url(#c57)"/>
<rect x="1551" y="455" width="425" height="3.6" fill="url(#c58)"/>
<rect x="1551" y="458" width="429" height="3.6" fill="url(#c59)"/>
<rect x="1551" y="461" width="433" height="3.6" fill="url(#c60)"/>
<rect x="1551" y="464" width="437" height="3.6" fill="url(#c61)"/>
<rect x="1551" y="467" width="442" height="3.6" fill="url(#c62)"/>
<rect x="1551" y="470" width="446" height="3.6" fill="url(#c63)"/>
<rect x="1551" y="473" width="450" height="3.6" fill="url(#c64)"/>
<rect x="1551" y="476" width="454" height="3.6" fill="url(#c65)"/>
<rect x="1551" y="479" width="458" height="3.6" fill="url(#c66)"/>
<rect x="1551" y="482" width="462" height="3.6" fill="url(#c67)"/>
<rect x="1552" y="485" width="465" height="3.6" fill="url(#c68)"/>
<rect x="1552" y="488" width="469" height="3.6" fill="url(#c69)"/>
<rect x="1552" y="491" width="473" height="3.6" fill="url(#c70)"/>
<rect x="1552" y="494" width="477" height="3.6" fill="url(#c71)"/>
<rect x="1552" y="497" width="481" height="3.6" fill="url(#c72)"/>
<rect x="1552" y="500" width="485" height="3.6" fill="url(#c73)"/>
<rect x="1552" y="503" width="489" height="3.6" fill="url(#c74)"/>
<rect x="1553" y="506" width="492" height="3.6" fill="url(#c75)"/>
<rect x="1553" y="509" width="496" height="3.6" fill="url(#c76)"/>
<rect x="1553" y="512" width="500" height="3.6" fill="url(#c77)"/>
<rect x="1553" y="515" width="504" height="3.6" fill="url(#c78)"/>
<rect x="1553" y="518" width="508" height="3.6" fill="url(#c79)"/>
<rect x="1554" y="521" width="511" height="3.6" fill="url(#c80)"/>
<rect x="1554" y="524" width="515" height="3.6" fill="url(#c81)"/>
<rect x="1554" y="527" width="519" height="3.6" fill="url(#c82)"/>
<rect x="1554" y="530" width="523" height="3.6" fill="url(#c83)"/>
<rect x="1555" y="533" width="526" height="3.6" fill="url(#c84)"/>
<rect x="1555" y="536" width="530" height="3.6" fill="url(#c85)"/>
<rect x="1555" y="539" width="534" height="3.6" fill="url(#c86)"/>
<rect x="1556" y="542" width="537" height="3.6" fill="url(#c87)"/>
<rect x="1556" y="545" width="541" height="3.6" fill="url(#c88)"/>
<rect x="1556" y="548" width="545" height="3.6" fill="url(#c89)"/>
<rect x="1557" y="551" width="548" height="3.6" fill="url(#c90)"/>
<rect x="1557" y="554" width="552" height="3.6" fill="url(#c91)"/>
<rect x="1557" y="557" width="556" height="3.6" fill="url(#c92)"/>
<rect x="1558" y="560" width="559" height="3.6" fill="url(#c93)"/>
<rect x="1558" y="563" width="563" height="3.6" fill="url(#c94)"/>
<rect x="1558" y="566" width="567" height="3.6" fill="url(#c95)"/>
<rect x="1559" y="569" width="570" height="3.6" fill="url(#c96)"/>
<rect x="1559" y="572" width="574" height="3.6" fill="url(#c97)"/>
<rect x="1560" y="575" width="577" height="3.6" fill="url(#c98)"/>
<rect x="1560" y="578" width="580" height="3.6" fill="url(#c99)"/>
<rect x="1560" y="581" width="584" height="3.6" fill="url(#c100)"/>
<rect x="1561" y="584" width="587" height="3.6" fill="url(#c101)"/>
<rect x="1561" y="587" width="591" height="3.6" fill="url(#c102)"/>
<rect x="1562" y="590" width="594" height="3.6" fill="url(#c103)"/>
<rect x="1562" y="593" width="598" height="3.6" fill="url(#c104)"/>
<rect x="1563" y="596" width="601" height="3.6" fill="url(#c105)"/>
<rect x="1563" y="599" width="605" height="3.6" fill="url(#c106)"/>
<rect x="1564" y="602" width="608" height="3.6" fill="url(#c107)"/>
<rect x="1564" y="605" width="612" height="3.6" fill="url(#c108)"/>
<rect x="1565" y="608" width="615" height="3.6" fill="url(#c109)"/>
<rect x="1565" y="611" width="619" height="3.6" fill="url(#c110)"/>
<rect x="1566" y="614" width="622" height="3.6" fill="url(#c111)"/>
<rect x="1566" y="617" width="626" height="3.6" fill="url(#c112)"/>
<rect x="1567" y="620" width="629" height="3.6" fill="url(#c113)"/>
<rect x="1567" y="623" width="633" height="3.6" fill="url(#c114)"/>
<rect x="1568" y="626" width="636" height="3.6" fill="url(#c115)"/>
<rect x="1568" y="629" width="640" height="3.6" fill="url(#c116)"/>
<rect x="1569" y="632" width="643" height="3.6" fill="url(#c117)"/>
<rect x="1569" y="635" width="647" height="3.6" fill="url(#c118)"/>
<rect x="1570" y="638" width="650" height="3.6" fill="url(#c119)"/>
<rect x="1570" y="641" width="654" height="3.6" fill="url(#c120)"/>
<rect x="1571" y="644" width="657" height="3.6" fill="url(#c121)"/>
<rect x="1572" y="647" width="660" height="3.6" fill="url(#c122)"/>
<rect x="1572" y="650" width="664" height="3.6" fill="url(#c123)"/>
<rect x="1573" y="653" width="667" height="3.6" fill="url(#c124)"/>
<rect x="1573" y="656" width="671" height="3.6" fill="url(#c125)"/>
<rect x="1574" y="659" width="674" height="3.6" fill="url(#c126)"/>
<rect x="1574" y="662" width="678" height="3.6" fill="url(#c127)"/>
<rect x="1575" y="665" width="680" height="3.6" fill="url(#c128)"/>
<rect x="1576" y="668" width="683" height="3.6" fill="url(#c129)"/>
<rect x="1576" y="671" width="687" height="3.6" fill="url(#c130)"/>
<rect x="1577" y="674" width="690" height="3.6" fill="url(#c131)"/>
<rect x="1578" y="677" width="693" height="3.6" fill="url(#c132)"/>
<rect x="1578" y="680" width="697" height="3.6" fill="url(#c133)"/>
<rect x="1579" y="683" width="700" height="3.6" fill="url(#c134)"/>
<rect x="1580" y="686" width="703" height="3.6" fill="url(#c135)"/>
<rect x="1580" y="689" width="707" height="3.6" fill="url(#c136)"/>
<rect x="1581" y="692" width="710" height="3.6" fill="url(#c137)"/>
<rect x="1582" y="695" width="713" height="3.6" fill="url(#c138)"/>
<rect x="1582" y="698" width="717" height="3.6" fill="url(#c139)"/>
<rect x="1583" y="701" width="720" height="3.6" fill="url(#c140)"/>
<rect x="1584" y="704" width="723" height="3.6" fill="url(#c141)"/>
<rect x="1584" y="707" width="727" height="3.6" fill="url(#c142)"/>
<rect x="1585" y="710" width="730" height="3.6" fill="url(#c143)"/>
<rect x="1586" y="713" width="733" height="3.6" fill="url(#c144)"/>
<rect x="1587" y="716" width="736" height="3.6" fill="url(#c145)"/>
<rect x="1587" y="719" width="740" height="3.6" fill="url(#c146)"/>
<rect x="1588" y="722" width="743" height="3.6" fill="url(#c147)"/>
<rect x="1589" y="725" width="746" height="3.6" fill="url(#c148)"/>
<rect x="1590" y="728" width="749" height="3.6" fill="url(#c149)"/>
<rect x="1590" y="731" width="753" height="3.6" fill="url(#c150)"/>
<rect x="1591" y="734" width="756" height="3.6" fill="url(#c151)"/>
<rect x="1592" y="737" width="759" height="3.6" fill="url(#c152)"/>
<rect x="1593" y="740" width="762" height="3.6" fill="url(#c153)"/>
<rect x="1594" y="743" width="765" height="3.6" fill="url(#c154)"/>
<rect x="1594" y="746" width="769" height="3.6" fill="url(#c155)"/>
<rect x="1595" y="749" width="772" height="3.6" fill="url(#c156)"/>
<rect x="1596" y="752" width="775" height="3.6" fill="url(#c157)"/>
<rect x="1597" y="755" width="778" height="3.6" fill="url(#c158)"/>
<rect x="1598" y="758" width="781" height="3.6" fill="url(#c159)"/>
<rect x="1599" y="761" width="784" height="3.6" fill="url(#c160)"/>
<rect x="1599" y="764" width="787" height="3.6" fill="url(#c161)"/>
<rect x="1600" y="767" width="790" height="3.6" fill="url(#c162)"/>
<rect x="1601" y="770" width="793" height="3.6" fill="url(#c163)"/>
<rect x="1602" y="773" width="796" height="3.6" fill="url(#c164)"/>
<rect x="1603" y="776" width="799" height="3.6" fill="url(#c165)"/>
<rect x="1604" y="779" width="802" height="3.6" fill="url(#c166)"/>
<rect x="1605" y="782" width="805" height="3.6" fill="url(#c167)"/>
<rect x="1605" y="785" width="809" height="3.6" fill="url(#c168)"/>
<rect x="1606" y="788" width="809" height="3.6" fill="url(#c169)"/>
<rect x="1607" y="791" width="808" height="3.6" fill="url(#c170)"/>
<rect x="1608" y="794" width="801" height="3.6" fill="url(#c171)"/>
<rect x="1609" y="797" width="792" height="3.6" fill="url(#c172)"/>
<rect x="1610" y="800" width="782" height="3.6" fill="url(#c173)"/>
<rect x="1611" y="803" width="773" height="3.6" fill="url(#c174)"/>
<rect x="1612" y="806" width="764" height="3.6" fill="url(#c175)"/>
<rect x="1613" y="809" width="754" height="3.6" fill="url(#c176)"/>
<rect x="1614" y="812" width="745" height="3.6" fill="url(#c177)"/>
<rect x="1615" y="815" width="736" height="3.6" fill="url(#c178)"/>
<rect x="1616" y="818" width="726" height="3.6" fill="url(#c179)"/>
<rect x="1617" y="821" width="717" height="3.6" fill="url(#c180)"/>
<rect x="1618" y="824" width="707" height="3.6" fill="url(#c181)"/>
<rect x="1619" y="827" width="698" height="3.6" fill="url(#c182)"/>
<rect x="1620" y="830" width="689" height="3.6" fill="url(#c183)"/>
<rect x="1621" y="833" width="679" height="3.6" fill="url(#c184)"/>
<rect x="1622" y="836" width="670" height="3.6" fill="url(#c185)"/>
<rect x="1623" y="839" width="661" height="3.6" fill="url(#c186)"/>
<rect x="1624" y="842" width="651" height="3.6" fill="url(#c187)"/>
<rect x="1625" y="845" width="642" height="3.6" fill="url(#c188)"/>
<rect x="1626" y="848" width="633" height="3.6" fill="url(#c189)"/>
<rect x="1627" y="851" width="623" height="3.6" fill="url(#c190)"/>
<rect x="1629" y="854" width="613" height="3.6" fill="url(#c191)"/>
<rect x="1630" y="857" width="603" height="3.6" fill="url(#c192)"/>
<rect x="1631" y="860" width="594" height="3.6" fill="url(#c193)"/>
<rect x="1632" y="863" width="585" height="3.6" fill="url(#c194)"/>
<rect x="1633" y="866" width="575" height="3.6" fill="url(#c195)"/>
<rect x="1635" y="869" width="565" height="3.6" fill="url(#c196)"/>
<rect x="1636" y="872" width="556" height="3.6" fill="url(#c197)"/>
<rect x="1637" y="875" width="546" height="3.6" fill="url(#c198)"/>
<rect x="1638" y="878" width="537" height="3.6" fill="url(#c199)"/>
<rect x="1640" y="881" width="526" height="3.6" fill="url(#c200)"/>
<rect x="1641" y="884" width="517" height="3.6" fill="url(#c201)"/>
<rect x="1642" y="887" width="508" height="3.6" fill="url(#c202)"/>
<rect x="1644" y="890" width="497" height="3.6" fill="url(#c203)"/>
<rect x="1645" y="893" width="488" height="3.6" fill="url(#c204)"/>
<rect x="1647" y="896" width="478" height="3.6" fill="url(#c205)"/>
<rect x="1648" y="899" width="468" height="3.6" fill="url(#c206)"/>
<rect x="1649" y="902" width="459" height="3.6" fill="url(#c207)"/>
<rect x="1651" y="905" width="448" height="3.6" fill="url(#c208)"/>
<rect x="1652" y="908" width="439" height="3.6" fill="url(#c209)"/>
<rect x="1654" y="911" width="429" height="3.6" fill="url(#c210)"/>
<rect x="1655" y="914" width="419" height="3.6" fill="url(#c211)"/>
<rect x="1656" y="917" width="410" height="3.6" fill="url(#c212)"/>
<rect x="1658" y="920" width="400" height="3.6" fill="url(#c213)"/>
<rect x="1659" y="923" width="390" height="3.6" fill="url(#c214)"/>
<rect x="1661" y="926" width="380" height="3.6" fill="url(#c215)"/>
<rect x="1662" y="929" width="371" height="3.6" fill="url(#c216)"/>
<rect x="1664" y="932" width="360" height="3.6" fill="url(#c217)"/>
<rect x="1666" y="935" width="350" height="3.6" fill="url(#c218)"/>
<rect x="1667" y="938" width="340" height="3.6" fill="url(#c219)"/>
<rect x="1669" y="941" width="330" height="3.6" fill="url(#c220)"/>
<rect x="1670" y="944" width="321" height="3.6" fill="url(#c221)"/>
<rect x="1672" y="947" width="310" height="3.6" fill="url(#c222)"/>
<rect x="1674" y="950" width="300" height="3.6" fill="url(#c223)"/>
<rect x="1675" y="953" width="291" height="3.6" fill="url(#c224)"/>
<rect x="1677" y="956" width="280" height="3.6" fill="url(#c225)"/>
<rect x="1679" y="959" width="270" height="3.6" fill="url(#c226)"/>
<rect x="1681" y="962" width="259" height="3.6" fill="url(#c227)"/>
<rect x="1683" y="965" width="249" height="3.6" fill="url(#c228)"/>
<rect x="1685" y="968" width="239" height="3.6" fill="url(#c229)"/>
<rect x="1687" y="971" width="228" height="3.6" fill="url(#c230)"/>
<rect x="1689" y="974" width="218" height="3.6" fill="url(#c231)"/>
<rect x="1691" y="977" width="208" height="3.6" fill="url(#c232)"/>
<rect x="1693" y="980" width="197" height="3.6" fill="url(#c233)"/>
<rect x="1695" y="983" width="187" height="3.6" fill="url(#c234)"/>
<rect x="1698" y="986" width="176" height="3.6" fill="url(#c235)"/>
<rect x="1700" y="989" width="165" height="3.6" fill="url(#c236)"/>
<rect x="1703" y="992" width="154" height="3.6" fill="url(#c237)"/>
<rect x="1706" y="995" width="142" height="3.6" fill="url(#c238)"/>
<rect x="1708" y="998" width="132" height="3.6" fill="url(#c239)"/>
<rect x="1712" y="1001" width="120" height="3.6" fill="url(#c240)"/>
<rect x="1715" y="1004" width="108" height="3.6" fill="url(#c241)"/>
<rect x="1719" y="1007" width="96" height="3.6" fill="url(#c242)"/>
<rect x="1723" y="1010" width="84" height="3.6" fill="url(#c243)"/>
<rect x="1727" y="1013" width="71" height="3.6" fill="url(#c244)"/>
<rect x="1731" y="1016" width="59" height="3.6" fill="url(#c245)"/>
<rect x="1736" y="1019" width="45" height="3.6" fill="url(#c246)"/>
<rect x="1740" y="1022" width="33" height="3.6" fill="url(#c247)"/>
<rect x="1745" y="1025" width="20" height="3.6" fill="url(#c248)"/>
</g>
<path d="M1754.9 1026.62C1754.88 1026.62 1754.84 1026.6 1754.78 1026.62C1754.72 1026.63 1754.62 1026.69 1754.54 1026.71C1754.47 1026.72 1754.41 1026.69 1754.31 1026.71C1754.21 1026.72 1754.07 1026.78 1753.95 1026.79C1753.84 1026.81 1753.74 1026.79 1753.6 1026.79C1753.46 1026.79 1753.3 1026.79 1753.13 1026.79C1752.95 1026.79 1752.77 1026.84 1752.54 1026.79C1752.3 1026.75 1752.06 1026.68 1751.71 1026.53C1751.35 1026.38 1750.9 1026.17 1750.41 1025.9C1749.92 1025.63 1749.42 1025.33 1748.76 1024.91C1748.09 1024.49 1747.28 1023.98 1746.39 1023.39C1745.51 1022.79 1744.58 1022.1 1743.44 1021.32C1742.3 1020.55 1741.08 1019.74 1739.54 1018.72C1738 1017.71 1736.21 1016.56 1734.22 1015.22C1732.23 1013.89 1730.09 1012.53 1727.61 1010.74C1725.13 1008.95 1722.39 1007.03 1719.34 1004.46C1716.28 1001.89 1713.21 999.51 1709.29 995.31C1705.37 991.11 1700.92 986.27 1695.82 979.26C1690.72 972.25 1685.15 964.45 1678.69 953.25C1672.23 942.05 1665.12 929.11 1657.07 912.08C1649.02 895.06 1639.41 875.35 1630.37 851.09C1621.33 826.83 1611.74 798.2 1602.84 766.51C1593.94 734.82 1584.29 697.33 1576.97 660.95C1569.64 624.57 1562.75 584.4 1558.89 548.21C1555.03 512.02 1552.69 475.47 1553.81 443.81C1554.93 412.15 1558.73 381.74 1565.62 358.25C1572.51 334.75 1583.27 315.31 1595.16 302.82C1607.05 290.32 1622.16 285.39 1636.99 283.26C1651.81 281.14 1668.3 285.91 1684.13 290.08C1699.96 294.25 1716.48 301.62 1731.98 308.29C1747.48 314.96 1762.36 322.37 1777.11 330.08C1791.86 337.8 1806.12 346 1820.47 354.57C1834.83 363.13 1849.06 372.21 1863.24 381.48C1877.42 390.74 1891.46 400.4 1905.54 410.18C1919.62 419.95 1933.64 430 1947.72 440.13C1961.8 450.27 1975.96 460.63 1990.02 470.99C2004.08 481.35 2018.1 491.85 2032.08 502.29C2046.06 512.72 2060.1 523.22 2073.9 533.59C2087.71 543.96 2101.43 554.35 2114.9 564.53C2128.37 574.71 2141.72 584.83 2154.72 594.67C2167.72 604.5 2180.53 614.22 2192.88 623.55C2205.23 632.88 2217.36 641.98 2228.8 650.64C2240.24 659.29 2251.33 667.75 2261.53 675.48C2271.73 683.21 2281.08 690.26 2290 697C2298.92 703.75 2307.41 710.17 2315.05 715.93C2322.69 721.68 2329.56 726.8 2335.84 731.54C2342.12 736.27 2347.68 740.52 2352.74 744.36C2357.8 748.2 2362.17 751.54 2366.21 754.59C2370.24 757.64 2373.73 760.22 2376.96 762.66C2380.19 765.09 2382.95 767.2 2385.58 769.21C2388.22 771.21 2390.61 773.02 2392.79 774.68C2394.98 776.34 2396.93 777.83 2398.7 779.16C2400.47 780.49 2402.05 781.63 2403.42 782.66C2404.8 783.69 2405.93 784.56 2406.97 785.35C2408.01 786.14 2408.94 786.75 2409.69 787.41C2410.43 788.07 2410.95 788.73 2411.46 789.3C2411.97 789.86 2412.54 790.57 2412.76 790.82ZM2305.36 735.12L1797.32 394.3L1726.42 977.29Z" fill="#000" fill-opacity=".395" fill-rule="evenodd"/>
<rect x="1549.6" y="277" width="993" height="754.1" fill="none" stroke="#9a9a9a" stroke-width="2"/>
<line x1="1549.2" y1="1031.1" x2="1549.2" y2="1040.9" stroke="#cccccc" stroke-width="2.1"/>
<line x1="1541.1" y1="1031.1" x2="1549.6" y2="1031.1" stroke="#cccccc" stroke-width="2.1"/>
<text x="1542.71" y="1065.3" font-size="22.93" fill="#d8d8d8" textLength="11.98" lengthAdjust="spacingAndGlyphs" xml:space="preserve">0</text>
<text x="1527.62" y="1042.6" font-size="22.93" fill="#d8d8d8" textLength="11.98" lengthAdjust="spacingAndGlyphs" xml:space="preserve">0</text>
<line x1="1667.35" y1="1031.1" x2="1667.35" y2="1040.9" stroke="#cccccc" stroke-width="2.1"/>
<line x1="1541.1" y1="941.41" x2="1549.6" y2="941.41" stroke="#cccccc" stroke-width="2.1"/>
<text x="1651.88" y="1065.3" font-size="22.93" fill="#d8d8d8" textLength="29.94" lengthAdjust="spacingAndGlyphs" xml:space="preserve">0,1</text>
<text x="1509.66" y="950.21" font-size="22.93" fill="#d8d8d8" textLength="29.94" lengthAdjust="spacingAndGlyphs" xml:space="preserve">0,1</text>
<line x1="1785.5" y1="1031.1" x2="1785.5" y2="1040.9" stroke="#cccccc" stroke-width="2.1"/>
<line x1="1541.1" y1="851.72" x2="1549.6" y2="851.72" stroke="#cccccc" stroke-width="2.1"/>
<text x="1770.03" y="1065.3" font-size="22.93" fill="#d8d8d8" textLength="29.94" lengthAdjust="spacingAndGlyphs" xml:space="preserve">0,2</text>
<text x="1509.66" y="860.52" font-size="22.93" fill="#d8d8d8" textLength="29.94" lengthAdjust="spacingAndGlyphs" xml:space="preserve">0,2</text>
<line x1="1903.65" y1="1031.1" x2="1903.65" y2="1040.9" stroke="#cccccc" stroke-width="2.1"/>
<line x1="1541.1" y1="762.03" x2="1549.6" y2="762.03" stroke="#cccccc" stroke-width="2.1"/>
<text x="1888.18" y="1065.3" font-size="22.93" fill="#d8d8d8" textLength="29.94" lengthAdjust="spacingAndGlyphs" xml:space="preserve">0,3</text>
<text x="1509.66" y="770.83" font-size="22.93" fill="#d8d8d8" textLength="29.94" lengthAdjust="spacingAndGlyphs" xml:space="preserve">0,3</text>
<line x1="2021.8" y1="1031.1" x2="2021.8" y2="1040.9" stroke="#cccccc" stroke-width="2.1"/>
<line x1="1541.1" y1="672.34" x2="1549.6" y2="672.34" stroke="#cccccc" stroke-width="2.1"/>
<text x="2006.33" y="1065.3" font-size="22.93" fill="#d8d8d8" textLength="29.94" lengthAdjust="spacingAndGlyphs" xml:space="preserve">0,4</text>
<text x="1509.66" y="681.14" font-size="22.93" fill="#d8d8d8" textLength="29.94" lengthAdjust="spacingAndGlyphs" xml:space="preserve">0,4</text>
<line x1="2139.95" y1="1031.1" x2="2139.95" y2="1040.9" stroke="#cccccc" stroke-width="2.1"/>
<line x1="1541.1" y1="582.65" x2="1549.6" y2="582.65" stroke="#cccccc" stroke-width="2.1"/>
<text x="2124.48" y="1065.3" font-size="22.93" fill="#d8d8d8" textLength="29.94" lengthAdjust="spacingAndGlyphs" xml:space="preserve">0,5</text>
<text x="1509.66" y="591.45" font-size="22.93" fill="#d8d8d8" textLength="29.94" lengthAdjust="spacingAndGlyphs" xml:space="preserve">0,5</text>
<line x1="2258.1" y1="1031.1" x2="2258.1" y2="1040.9" stroke="#cccccc" stroke-width="2.1"/>
<line x1="1541.1" y1="492.96" x2="1549.6" y2="492.96" stroke="#cccccc" stroke-width="2.1"/>
<text x="2242.63" y="1065.3" font-size="22.93" fill="#d8d8d8" textLength="29.94" lengthAdjust="spacingAndGlyphs" xml:space="preserve">0,6</text>
<text x="1509.66" y="501.76" font-size="22.93" fill="#d8d8d8" textLength="29.94" lengthAdjust="spacingAndGlyphs" xml:space="preserve">0,6</text>
<line x1="2376.25" y1="1031.1" x2="2376.25" y2="1040.9" stroke="#cccccc" stroke-width="2.1"/>
<line x1="1541.1" y1="403.27" x2="1549.6" y2="403.27" stroke="#cccccc" stroke-width="2.1"/>
<text x="2360.78" y="1065.3" font-size="22.93" fill="#d8d8d8" textLength="29.94" lengthAdjust="spacingAndGlyphs" xml:space="preserve">0,7</text>
<text x="1509.66" y="412.07" font-size="22.93" fill="#d8d8d8" textLength="29.94" lengthAdjust="spacingAndGlyphs" xml:space="preserve">0,7</text>
<line x1="2494.4" y1="1031.1" x2="2494.4" y2="1040.9" stroke="#cccccc" stroke-width="2.1"/>
<line x1="1541.1" y1="313.58" x2="1549.6" y2="313.58" stroke="#cccccc" stroke-width="2.1"/>
<text x="2478.93" y="1065.3" font-size="22.93" fill="#d8d8d8" textLength="29.94" lengthAdjust="spacingAndGlyphs" xml:space="preserve">0,8</text>
<text x="1509.66" y="322.38" font-size="22.93" fill="#d8d8d8" textLength="29.94" lengthAdjust="spacingAndGlyphs" xml:space="preserve">0,8</text>
<rect x="2294.4" y="723.2" width="20.6" height="20.6" fill="none" stroke="#fff" stroke-width="2.3"/>
<rect x="1785.8" y="381.1" width="20.6" height="20.6" fill="none" stroke="#fff" stroke-width="2.3"/>
<rect x="1714.4" y="965.3" width="20.6" height="20.6" fill="none" stroke="#fff" stroke-width="2.3"/>
<rect x="1745.9" y="725.7" width="20.6" height="20.6" fill="none" stroke="#fff" stroke-width="2.3"/>
<rect x="1956.4" y="865.3" width="20.6" height="20.6" fill="none" stroke="#fff" stroke-width="2.3"/>
<rect x="2042.9" y="553.9" width="20.6" height="20.6" fill="none" stroke="#fff" stroke-width="2.3"/>
<rect x="1908.8" y="725.5" width="20.6" height="20.6" fill="none" stroke="#000" stroke-width="2.3"/>
<circle cx="2350.6" cy="742.3" r="6" fill="#cc0000" stroke="#000" stroke-width="1.7"/>
<circle cx="1860.5" cy="403.7" r="6" fill="#00b000" stroke="#000" stroke-width="1.7"/>
<circle cx="1727" cy="976" r="6" fill="#0000c8" stroke="#000" stroke-width="1.7"/>
<circle cx="1783.4" cy="727.7" r="6" fill="#2fb0a6" stroke="#000" stroke-width="1.7"/>
<circle cx="1943.8" cy="894.1" r="6" fill="#b000b8" stroke="#000" stroke-width="1.7"/>
<circle cx="2061.4" cy="543.9" r="6" fill="#c4c410" stroke="#000" stroke-width="1.7"/>
<circle cx="1916.6" cy="732.9" r="6" fill="#c8c8c8" stroke="#000" stroke-width="1.7"/>
<circle cx="1916.8" cy="732.4" r="6" fill="#ffffff" stroke="#000" stroke-width="1.7"/>
<rect x="2151.3" y="981.8" width="386" height="41.2" fill="#333333"/>
<text x="2150.89" y="1013.9" font-size="30.16" fill="#ffffff" textLength="341.44" lengthAdjust="spacingAndGlyphs" xml:space="preserve">Gamut Coverage:  88,9%</text>
<rect x="2194.2" y="284" width="342" height="289.4" fill="#2b2b2b"/>
<g shape-rendering="crispEdges">
<rect x="2197" y="287" width="337" height="4.6" fill="url(#i0)"/>
<rect x="2197" y="291" width="337" height="4.6" fill="url(#i1)"/>
<rect x="2197" y="295" width="337" height="4.6" fill="url(#i2)"/>
<rect x="2197" y="299" width="337" height="4.6" fill="url(#i3)"/>
<rect x="2197" y="303" width="337" height="4.6" fill="url(#i4)"/>
<rect x="2197" y="307" width="337" height="4.6" fill="url(#i5)"/>
<rect x="2197" y="311" width="337" height="4.6" fill="url(#i6)"/>
<rect x="2197" y="315" width="337" height="4.6" fill="url(#i7)"/>
<rect x="2197" y="319" width="337" height="4.6" fill="url(#i8)"/>
<rect x="2197" y="323" width="337" height="4.6" fill="url(#i9)"/>
<rect x="2197" y="327" width="337" height="4.6" fill="url(#i10)"/>
<rect x="2197" y="331" width="337" height="4.6" fill="url(#i11)"/>
<rect x="2197" y="335" width="337" height="4.6" fill="url(#i12)"/>
<rect x="2197" y="339" width="337" height="4.6" fill="url(#i13)"/>
<rect x="2197" y="343" width="337" height="4.6" fill="url(#i14)"/>
<rect x="2197" y="347" width="337" height="4.6" fill="url(#i15)"/>
<rect x="2197" y="351" width="337" height="4.6" fill="url(#i16)"/>
<rect x="2197" y="355" width="337" height="4.6" fill="url(#i17)"/>
<rect x="2197" y="359" width="337" height="4.6" fill="url(#i18)"/>
<rect x="2197" y="363" width="337" height="4.6" fill="url(#i19)"/>
<rect x="2197" y="367" width="337" height="4.6" fill="url(#i20)"/>
<rect x="2197" y="371" width="337" height="4.6" fill="url(#i21)"/>
<rect x="2197" y="375" width="337" height="4.6" fill="url(#i22)"/>
<rect x="2197" y="379" width="337" height="4.6" fill="url(#i23)"/>
<rect x="2197" y="383" width="337" height="4.6" fill="url(#i24)"/>
<rect x="2197" y="387" width="337" height="4.6" fill="url(#i25)"/>
<rect x="2197" y="391" width="337" height="4.6" fill="url(#i26)"/>
<rect x="2197" y="395" width="337" height="4.6" fill="url(#i27)"/>
<rect x="2197" y="399" width="337" height="4.6" fill="url(#i28)"/>
<rect x="2197" y="403" width="337" height="4.6" fill="url(#i29)"/>
<rect x="2197" y="407" width="337" height="4.6" fill="url(#i30)"/>
<rect x="2197" y="411" width="337" height="4.6" fill="url(#i31)"/>
<rect x="2197" y="415" width="337" height="4.6" fill="url(#i32)"/>
<rect x="2197" y="419" width="337" height="4.6" fill="url(#i33)"/>
<rect x="2197" y="423" width="337" height="4.6" fill="url(#i34)"/>
<rect x="2197" y="427" width="337" height="4.6" fill="url(#i35)"/>
<rect x="2197" y="431" width="337" height="4.6" fill="url(#i36)"/>
<rect x="2197" y="435" width="337" height="4.6" fill="url(#i37)"/>
<rect x="2197" y="439" width="337" height="4.6" fill="url(#i38)"/>
<rect x="2197" y="443" width="337" height="4.6" fill="url(#i39)"/>
<rect x="2197" y="447" width="337" height="4.6" fill="url(#i40)"/>
<rect x="2197" y="451" width="337" height="4.6" fill="url(#i41)"/>
<rect x="2197" y="455" width="337" height="4.6" fill="url(#i42)"/>
<rect x="2197" y="459" width="337" height="4.6" fill="url(#i43)"/>
<rect x="2197" y="463" width="337" height="4.6" fill="url(#i44)"/>
<rect x="2197" y="467" width="337" height="4.6" fill="url(#i45)"/>
<rect x="2197" y="471" width="337" height="4.6" fill="url(#i46)"/>
<rect x="2197" y="475" width="337" height="4.6" fill="url(#i47)"/>
<rect x="2197" y="479" width="337" height="4.6" fill="url(#i48)"/>
<rect x="2197" y="483" width="337" height="4.6" fill="url(#i49)"/>
<rect x="2197" y="487" width="337" height="4.6" fill="url(#i50)"/>
<rect x="2197" y="491" width="337" height="4.6" fill="url(#i51)"/>
<rect x="2197" y="495" width="337" height="4.6" fill="url(#i52)"/>
<rect x="2197" y="499" width="337" height="4.6" fill="url(#i53)"/>
<rect x="2197" y="503" width="337" height="4.6" fill="url(#i54)"/>
<rect x="2197" y="507" width="337" height="4.6" fill="url(#i55)"/>
<rect x="2197" y="511" width="337" height="4.6" fill="url(#i56)"/>
<rect x="2197" y="515" width="337" height="4.6" fill="url(#i57)"/>
<rect x="2197" y="519" width="337" height="4.6" fill="url(#i58)"/>
<rect x="2197" y="523" width="337" height="4.6" fill="url(#i59)"/>
<rect x="2197" y="527" width="337" height="4.6" fill="url(#i60)"/>
<rect x="2197" y="531" width="337" height="4.6" fill="url(#i61)"/>
<rect x="2197" y="535" width="337" height="4.6" fill="url(#i62)"/>
<rect x="2197" y="539" width="337" height="4.6" fill="url(#i63)"/>
<rect x="2197" y="543" width="337" height="4.6" fill="url(#i64)"/>
<rect x="2197" y="547" width="337" height="4.6" fill="url(#i65)"/>
<rect x="2197" y="551" width="337" height="4.6" fill="url(#i66)"/>
<rect x="2197" y="555" width="337" height="4.6" fill="url(#i67)"/>
<rect x="2197" y="559" width="337" height="4.6" fill="url(#i68)"/>
<rect x="2197" y="563" width="337" height="4.6" fill="url(#i69)"/>
<rect x="2197" y="567" width="337" height="4" fill="url(#i70)"/>
</g>
<rect x="2198.4" y="288.2" width="333.6" height="281" fill="none" stroke="#9c9c9c" stroke-width="2.4"/>
<rect x="2353.4" y="417.2" width="20" height="20.4" fill="#fff" stroke="#000" stroke-width="2.4"/>
<circle cx="2354.7" cy="412.6" r="6" fill="#c8c8c8" stroke="#000" stroke-width="1.5"/>
<circle cx="2354.7" cy="408.8" r="6" fill="#fff" stroke="#000" stroke-width="1.5"/>
<text x="21.18" y="1176.3" font-size="43.08" fill="#f2f2f2" textLength="340.43" lengthAdjust="spacingAndGlyphs" xml:space="preserve">Current Reading</text>
<text x="23.11" y="1241.2" font-size="35.95" fill="#f0f0f0" textLength="157.65" lengthAdjust="spacingAndGlyphs" xml:space="preserve">x: 0,3115</text>
<text x="23.5" y="1304.7" font-size="35.95" fill="#f0f0f0" textLength="158.1" lengthAdjust="spacingAndGlyphs" xml:space="preserve">y: 0,3322</text>
<text x="23.81" y="1367.1" font-size="35.95" fill="#f0f0f0" textLength="169.4" lengthAdjust="spacingAndGlyphs" xml:space="preserve">fL: 115,85</text>
<text x="21.89" y="1429.9" font-size="35.95" fill="#f0f0f0" textLength="245.99" lengthAdjust="spacingAndGlyphs" xml:space="preserve">cd/m²: 396,94</text>
<text x="651.89" y="1137.2" font-size="23.14" fill="#d8d8d8" textLength="129.23" lengthAdjust="spacingAndGlyphs" xml:space="preserve">RGB Balance</text>
<rect x="548.2" y="1144.7" width="382.9" height="276.8" fill="#232323"/>
<line x1="548.2" y1="1174.38" x2="931.1" y2="1174.38" stroke="#8c8c8c" stroke-width="1.8"/>
<line x1="538.7" y1="1174.38" x2="547.7" y2="1174.38" stroke="#c2c2c2" stroke-width="2"/>
<text x="501.4" y="1182.38" font-size="23.35" fill="#d8d8d8" textLength="36.2" lengthAdjust="spacingAndGlyphs" xml:space="preserve">104</text>
<line x1="548.2" y1="1229.74" x2="931.1" y2="1229.74" stroke="#8c8c8c" stroke-width="1.8"/>
<line x1="538.7" y1="1229.74" x2="547.7" y2="1229.74" stroke="#c2c2c2" stroke-width="2"/>
<text x="501.4" y="1237.74" font-size="23.35" fill="#d8d8d8" textLength="36.2" lengthAdjust="spacingAndGlyphs" xml:space="preserve">102</text>
<line x1="548.2" y1="1285.1" x2="931.1" y2="1285.1" stroke="#8c8c8c" stroke-width="1.8"/>
<line x1="538.7" y1="1285.1" x2="547.7" y2="1285.1" stroke="#c2c2c2" stroke-width="2"/>
<text x="501.4" y="1293.1" font-size="23.35" fill="#d8d8d8" textLength="36.2" lengthAdjust="spacingAndGlyphs" xml:space="preserve">100</text>
<line x1="548.2" y1="1340.46" x2="931.1" y2="1340.46" stroke="#8c8c8c" stroke-width="1.8"/>
<line x1="538.7" y1="1340.46" x2="547.7" y2="1340.46" stroke="#c2c2c2" stroke-width="2"/>
<text x="513.47" y="1348.46" font-size="23.35" fill="#d8d8d8" textLength="24.13" lengthAdjust="spacingAndGlyphs" xml:space="preserve">98</text>
<line x1="548.2" y1="1395.82" x2="931.1" y2="1395.82" stroke="#8c8c8c" stroke-width="1.8"/>
<line x1="538.7" y1="1395.82" x2="547.7" y2="1395.82" stroke="#c2c2c2" stroke-width="2"/>
<text x="513.47" y="1403.82" font-size="23.35" fill="#d8d8d8" textLength="24.13" lengthAdjust="spacingAndGlyphs" xml:space="preserve">96</text>
<rect x="548.2" y="1144.7" width="382.9" height="276.8" fill="none" stroke="#8c8c8c" stroke-width="2"/>
<line x1="548.2" y1="1421.5" x2="548.2" y2="1431" stroke="#c2c2c2" stroke-width="2"/>
<line x1="931.1" y1="1421.5" x2="931.1" y2="1431" stroke="#c2c2c2" stroke-width="2"/>
<rect x="585.1" y="1307" width="101.1" height="114.5" fill="#000"/>
<rect x="586.1" y="1308" width="99.1" height="113" fill="url(#g27)" stroke="#000" stroke-width="2"/>
<rect x="686.8" y="1271.7" width="102.1" height="149.8" fill="#000"/>
<rect x="687.8" y="1272.7" width="100.1" height="148.3" fill="url(#g28)" stroke="#000" stroke-width="2"/>
<rect x="789.3" y="1300.6" width="101.8" height="120.9" fill="#000"/>
<rect x="790.3" y="1301.6" width="99.8" height="119.4" fill="url(#g29)" stroke="#000" stroke-width="2"/>
<line x1="548.2" y1="1421.5" x2="931.1" y2="1421.5" stroke="#8c8c8c" stroke-width="2"/>
<text x="711.56" y="1446.2" font-size="23.35" fill="#d8d8d8" textLength="56.68" lengthAdjust="spacingAndGlyphs" xml:space="preserve">100W</text>
<rect x="961.3" y="1107.8" width="1062" height="339.2" fill="#141414"/>
<rect x="964" y="1110.4" width="1057.5" height="59.4" fill="url(#g30)"/>
<rect x="964" y="1169.8" width="1057.5" height="56.4" fill="#3d3d3d"/>
<rect x="964" y="1226.2" width="1057.5" height="54.9" fill="#808080"/>
<rect x="964" y="1281.1" width="1057.5" height="55.2" fill="#3d3d3d"/>
<rect x="964" y="1336.3" width="1057.5" height="55.3" fill="#808080"/>
<rect x="964" y="1391.6" width="1057.5" height="55.4" fill="#3d3d3d"/>
<text x="1134.1" y="1151.7" font-size="30.68" fill="#f4f4f4" textLength="65.05" lengthAdjust="spacingAndGlyphs" xml:space="preserve">White</text>
<text x="1256.65" y="1151.7" font-size="30.68" fill="#f4f4f4" textLength="42.32" lengthAdjust="spacingAndGlyphs" xml:space="preserve">Red</text>
<text x="1356.08" y="1151.7" font-size="30.68" fill="#f4f4f4" textLength="67.66" lengthAdjust="spacingAndGlyphs" xml:space="preserve">Green</text>
<text x="1477.03" y="1151.7" font-size="30.68" fill="#f4f4f4" textLength="49.19" lengthAdjust="spacingAndGlyphs" xml:space="preserve">Blue</text>
<text x="1586.84" y="1151.7" font-size="30.68" fill="#f4f4f4" textLength="54.25" lengthAdjust="spacingAndGlyphs" xml:space="preserve">Cyan</text>
<text x="1679.02" y="1151.7" font-size="30.68" fill="#f4f4f4" textLength="96.2" lengthAdjust="spacingAndGlyphs" xml:space="preserve">Magenta</text>
<text x="1807.72" y="1151.7" font-size="30.68" fill="#f4f4f4" textLength="68.96" lengthAdjust="spacingAndGlyphs" xml:space="preserve">Yellow</text>
<text x="1928.77" y="1151.7" font-size="30.68" fill="#f4f4f4" textLength="63.66" lengthAdjust="spacingAndGlyphs" xml:space="preserve">100W</text>
<text x="983.98" y="1210.5" font-size="33.88" fill="#f4f4f4" textLength="96.77" lengthAdjust="spacingAndGlyphs" font-weight="bold" xml:space="preserve">x: CIE31</text>
<text x="1112.48" y="1210.5" font-size="33.88" fill="#f0f0f0" textLength="78.49" lengthAdjust="spacingAndGlyphs" xml:space="preserve">0,3112</text>
<text x="1232.01" y="1210.5" font-size="33.88" fill="#f0f0f0" textLength="77.89" lengthAdjust="spacingAndGlyphs" xml:space="preserve">0,6784</text>
<text x="1336.6" y="1210.5" font-size="33.88" fill="#f0f0f0" textLength="78.42" lengthAdjust="spacingAndGlyphs" xml:space="preserve">0,2632</text>
<text x="1455.81" y="1210.5" font-size="33.88" fill="#f0f0f0" textLength="77.89" lengthAdjust="spacingAndGlyphs" xml:space="preserve">0,1504</text>
<text x="1560.7" y="1210.5" font-size="33.88" fill="#f0f0f0" textLength="78.29" lengthAdjust="spacingAndGlyphs" xml:space="preserve">0,1986</text>
<text x="1679.6" y="1210.5" font-size="33.88" fill="#f0f0f0" textLength="78.42" lengthAdjust="spacingAndGlyphs" xml:space="preserve">0,3347</text>
<text x="1789" y="1210.5" font-size="33.88" fill="#f0f0f0" textLength="78.42" lengthAdjust="spacingAndGlyphs" xml:space="preserve">0,4329</text>
<text x="1908.08" y="1210.5" font-size="33.88" fill="#f0f0f0" textLength="78.35" lengthAdjust="spacingAndGlyphs" xml:space="preserve">0,3115</text>
<text x="983.98" y="1265.8" font-size="33.88" fill="#f4f4f4" textLength="96.27" lengthAdjust="spacingAndGlyphs" font-weight="bold" xml:space="preserve">y: CIE31</text>
<text x="1112.5" y="1265.8" font-size="33.88" fill="#f0f0f0" textLength="78.42" lengthAdjust="spacingAndGlyphs" xml:space="preserve">0,3317</text>
<text x="1232" y="1265.8" font-size="33.88" fill="#f0f0f0" textLength="78.29" lengthAdjust="spacingAndGlyphs" xml:space="preserve">0,3213</text>
<text x="1336.6" y="1265.8" font-size="33.88" fill="#f0f0f0" textLength="78.42" lengthAdjust="spacingAndGlyphs" xml:space="preserve">0,6961</text>
<text x="1455.81" y="1265.8" font-size="33.88" fill="#f0f0f0" textLength="78.15" lengthAdjust="spacingAndGlyphs" xml:space="preserve">0,0600</text>
<text x="1560.7" y="1265.8" font-size="33.88" fill="#f0f0f0" textLength="78.42" lengthAdjust="spacingAndGlyphs" xml:space="preserve">0,3361</text>
<text x="1679.61" y="1265.8" font-size="33.88" fill="#f0f0f0" textLength="78.15" lengthAdjust="spacingAndGlyphs" xml:space="preserve">0,1520</text>
<text x="1789" y="1265.8" font-size="33.88" fill="#f0f0f0" textLength="78.42" lengthAdjust="spacingAndGlyphs" xml:space="preserve">0,5422</text>
<text x="1908.1" y="1265.8" font-size="33.88" fill="#f0f0f0" textLength="78.42" lengthAdjust="spacingAndGlyphs" xml:space="preserve">0,3322</text>
<text x="983.73" y="1321" font-size="33.88" fill="#f4f4f4" textLength="16.68" lengthAdjust="spacingAndGlyphs" font-weight="bold" xml:space="preserve">Y</text>
<text x="1112.12" y="1321" font-size="33.88" fill="#f0f0f0" textLength="106.52" lengthAdjust="spacingAndGlyphs" xml:space="preserve">208,2525</text>
<text x="1232.39" y="1321" font-size="33.88" fill="#f0f0f0" textLength="91.95" lengthAdjust="spacingAndGlyphs" xml:space="preserve">47,0299</text>
<text x="1337.1" y="1321" font-size="33.88" fill="#f0f0f0" textLength="105.64" lengthAdjust="spacingAndGlyphs" xml:space="preserve">147,4338</text>
<text x="1456.3" y="1321" font-size="33.88" fill="#f0f0f0" textLength="91.58" lengthAdjust="spacingAndGlyphs" xml:space="preserve">16,5670</text>
<text x="1561.2" y="1321" font-size="33.88" fill="#f0f0f0" textLength="105.64" lengthAdjust="spacingAndGlyphs" xml:space="preserve">163,4645</text>
<text x="1679.22" y="1321" font-size="33.88" fill="#f0f0f0" textLength="92.73" lengthAdjust="spacingAndGlyphs" xml:space="preserve">64,1529</text>
<text x="1789.5" y="1321" font-size="33.88" fill="#f0f0f0" textLength="105.77" lengthAdjust="spacingAndGlyphs" xml:space="preserve">194,4002</text>
<text x="1908.11" y="1321" font-size="33.88" fill="#f0f0f0" textLength="106" lengthAdjust="spacingAndGlyphs" xml:space="preserve">396,9390</text>
<text x="983.84" y="1377.5" font-size="33.88" fill="#f4f4f4" textLength="101.72" lengthAdjust="spacingAndGlyphs" font-weight="bold" xml:space="preserve">Target Y</text>
<text x="1112.12" y="1377.5" font-size="33.88" fill="#f0f0f0" textLength="106.66" lengthAdjust="spacingAndGlyphs" xml:space="preserve">210,2359</text>
<text x="1231.62" y="1377.5" font-size="33.88" fill="#f0f0f0" textLength="92.73" lengthAdjust="spacingAndGlyphs" xml:space="preserve">62,5159</text>
<text x="1337.11" y="1377.5" font-size="33.88" fill="#f0f0f0" textLength="105.25" lengthAdjust="spacingAndGlyphs" xml:space="preserve">131,8924</text>
<text x="1456.3" y="1377.5" font-size="33.88" fill="#f0f0f0" textLength="91.71" lengthAdjust="spacingAndGlyphs" xml:space="preserve">15,8275</text>
<text x="1561.2" y="1377.5" font-size="33.88" fill="#f0f0f0" textLength="105.51" lengthAdjust="spacingAndGlyphs" xml:space="preserve">147,7200</text>
<text x="1679.22" y="1377.5" font-size="33.88" fill="#f0f0f0" textLength="92.21" lengthAdjust="spacingAndGlyphs" xml:space="preserve">78,3434</text>
<text x="1789.5" y="1377.5" font-size="33.88" fill="#f0f0f0" textLength="105.64" lengthAdjust="spacingAndGlyphs" xml:space="preserve">194,4083</text>
<text x="1908.11" y="1377.5" font-size="33.88" fill="#f0f0f0" textLength="106" lengthAdjust="spacingAndGlyphs" xml:space="preserve">396,9390</text>
<text x="983.05" y="1432.7" font-size="33.88" fill="#f4f4f4" textLength="102.46" lengthAdjust="spacingAndGlyphs" font-weight="bold" xml:space="preserve">ΔE 2000</text>
<text x="1112.11" y="1432.7" font-size="33.88" fill="#f0f0f0" textLength="78.68" lengthAdjust="spacingAndGlyphs" xml:space="preserve">2,5428</text>
<text x="1231.61" y="1432.7" font-size="33.88" fill="#f0f0f0" textLength="78.68" lengthAdjust="spacingAndGlyphs" xml:space="preserve">6,1425</text>
<text x="1336.21" y="1432.7" font-size="33.88" fill="#f0f0f0" textLength="78.81" lengthAdjust="spacingAndGlyphs" xml:space="preserve">6,5992</text>
<text x="1455.8" y="1432.7" font-size="33.88" fill="#f0f0f0" textLength="78.29" lengthAdjust="spacingAndGlyphs" xml:space="preserve">0,5308</text>
<text x="1560.7" y="1432.7" font-size="33.88" fill="#f0f0f0" textLength="78.42" lengthAdjust="spacingAndGlyphs" xml:space="preserve">3,5581</text>
<text x="1679.99" y="1432.7" font-size="33.88" fill="#f0f0f0" textLength="78.02" lengthAdjust="spacingAndGlyphs" xml:space="preserve">4,9281</text>
<text x="1789" y="1432.7" font-size="33.88" fill="#f0f0f0" textLength="78.29" lengthAdjust="spacingAndGlyphs" xml:space="preserve">3,3883</text>
<text x="1908.1" y="1432.7" font-size="33.88" fill="#f0f0f0" textLength="78.42" lengthAdjust="spacingAndGlyphs" xml:space="preserve">3,2831</text>
<rect x="0" y="1526" width="2032" height="102" fill="url(#g31)"/>
<rect x="2.2" y="1526.2" width="245.7" height="99.6" rx="5.5" fill="url(#g32)"/>
<rect x="11" y="1535.3" width="229" height="58.6" rx="5" fill="#c0c0c0"/>
<rect x="11" y="1535.3" width="229" height="58.6" rx="5" fill="none" stroke="#000" stroke-opacity=".18" stroke-width="1.5"/>
<text x="100.8" y="1618.6" font-size="16.53" fill="#2b2b2b" textLength="48.77" lengthAdjust="spacingAndGlyphs" font-weight="bold" xml:space="preserve">White</text>
<rect x="250.9" y="1526.2" width="245.7" height="99.6" rx="5.5" fill="url(#g32)"/>
<rect x="259.7" y="1535.3" width="229" height="58.6" rx="5" fill="#c00000"/>
<rect x="259.7" y="1535.3" width="229" height="58.6" rx="5" fill="none" stroke="#000" stroke-opacity=".18" stroke-width="1.5"/>
<text x="357.71" y="1618.6" font-size="16.53" fill="#2b2b2b" textLength="31.77" lengthAdjust="spacingAndGlyphs" font-weight="bold" xml:space="preserve">Red</text>
<rect x="500.4" y="1526.2" width="245.7" height="99.6" rx="5.5" fill="url(#g32)"/>
<rect x="509.2" y="1535.3" width="229" height="58.6" rx="5" fill="#00c000"/>
<rect x="509.2" y="1535.3" width="229" height="58.6" rx="5" fill="none" stroke="#000" stroke-opacity=".18" stroke-width="1.5"/>
<text x="597.9" y="1618.6" font-size="16.53" fill="#2b2b2b" textLength="50.76" lengthAdjust="spacingAndGlyphs" font-weight="bold" xml:space="preserve">Green</text>
<rect x="749.6" y="1526.2" width="245.7" height="99.6" rx="5.5" fill="url(#g32)"/>
<rect x="758.4" y="1535.3" width="229" height="58.6" rx="5" fill="#0000c0"/>
<rect x="758.4" y="1535.3" width="229" height="58.6" rx="5" fill="none" stroke="#000" stroke-opacity=".18" stroke-width="1.5"/>
<text x="853.7" y="1618.6" font-size="16.53" fill="#2b2b2b" textLength="36.64" lengthAdjust="spacingAndGlyphs" font-weight="bold" xml:space="preserve">Blue</text>
<rect x="999.4" y="1526.2" width="245.7" height="99.6" rx="5.5" fill="url(#g32)"/>
<rect x="1008.2" y="1535.3" width="229" height="58.6" rx="5" fill="#00c0c0"/>
<rect x="1008.2" y="1535.3" width="229" height="58.6" rx="5" fill="none" stroke="#000" stroke-opacity=".18" stroke-width="1.5"/>
<text x="1102.19" y="1618.6" font-size="16.53" fill="#2b2b2b" textLength="40.15" lengthAdjust="spacingAndGlyphs" font-weight="bold" xml:space="preserve">Cyan</text>
<rect x="1248.6" y="1526.2" width="245.7" height="99.6" rx="5.5" fill="url(#g32)"/>
<rect x="1257.4" y="1535.3" width="229" height="58.6" rx="5" fill="#c000c0"/>
<rect x="1257.4" y="1535.3" width="229" height="58.6" rx="5" fill="none" stroke="#000" stroke-opacity=".18" stroke-width="1.5"/>
<text x="1334.39" y="1618.6" font-size="16.53" fill="#2b2b2b" textLength="72.51" lengthAdjust="spacingAndGlyphs" font-weight="bold" xml:space="preserve">Magenta</text>
<rect x="1498.3" y="1526.2" width="245.7" height="99.6" rx="5.5" fill="url(#g32)"/>
<rect x="1507.1" y="1535.3" width="229" height="58.6" rx="5" fill="#c4c400"/>
<rect x="1507.1" y="1535.3" width="229" height="58.6" rx="5" fill="none" stroke="#000" stroke-opacity=".18" stroke-width="1.5"/>
<text x="1594.75" y="1618.6" font-size="16.53" fill="#2b2b2b" textLength="52.21" lengthAdjust="spacingAndGlyphs" font-weight="bold" xml:space="preserve">Yellow</text>
<rect x="1747.9" y="1526.2" width="245.7" height="99.6" rx="5.5" fill="url(#g33)"/>
<rect x="1756.7" y="1535.3" width="229" height="58.6" rx="5" fill="#ffffff"/>
<text x="1846.26" y="1618.6" font-size="16.53" fill="#ffffff" textLength="47.54" lengthAdjust="spacingAndGlyphs" font-weight="bold" xml:space="preserve">100W</text>
<path d="M2030.2 1555.4V1532a6 6 0 0 1 6-6H2102.6a6 6 0 0 1 6 6V1555.4Z" fill="url(#g35)"/>
<path d="M2030.2 1556.8h78.4v69.400h-73.400a5 5 0 0 1-5-5Z" fill="url(#g36)"/>
<circle cx="2069.4" cy="1541.5" r="12.5" fill="url(#g37)"/>
<path d="M2062.5 1543.3h13.6l-6.8-6.6Z" fill="#2c2c2c"/>
<rect x="2045" y="1567.6" width="48.6" height="47.4" rx="6.5" fill="url(#g38)" stroke="#262626" stroke-width="3"/>
<rect x="2057.7" y="1580.7" width="23" height="22.3" fill="url(#g39)"/>
<rect x="2111.3" y="1526" width="75.1" height="49.6" fill="url(#g34)"/>
<circle cx="2148.1" cy="1550.7" r="16" fill="url(#g40)"/>
<rect x="2188" y="1526" width="72.1" height="49.6" fill="url(#g34)"/>
<circle cx="2223.3" cy="1550.7" r="16" fill="url(#g41)"/>
<rect x="2261.7" y="1526" width="72.4" height="49.6" fill="url(#g34)"/>
<circle cx="2297.7" cy="1550.7" r="16" fill="url(#g42)"/>
<rect x="2335.7" y="1526" width="72.1" height="49.6" fill="url(#g34)"/>
<circle cx="2371.4" cy="1550.7" r="16" fill="url(#g43)"/>
<rect x="2409.4" y="1526" width="71.2" height="49.6" fill="url(#g34)"/>
<circle cx="2444.9" cy="1550.7" r="16" fill="url(#g44)"/>
<rect x="2141.4" y="1544.8" width="13.4" height="12.2" fill="#3a3a3a"/>
<path d="M2217.8 1542.6L2231.5 1550.8L2217.8 1559Z" fill="#3a3a3a"/>
<path d="M2292.2 1542.8h-3.4v16h3.4M2303.2 1542.8h3.4v16h-3.4" fill="none" stroke="#3a3a3a" stroke-width="2.4"/>
<circle cx="2295.3" cy="1550.8" r="1.1" fill="#3a3a3a"/><circle cx="2300.1" cy="1550.8" r="1.1" fill="#3a3a3a"/>
<path d="M2371.4 1550.7c-2.6-3.6-4.3-4.6-6.3-4.6a4.6 4.6 0 0 0 0 9.2c2 0 3.7-1 6.3-4.6c2.600 3.600 4.300 4.600 6.300 4.600a4.600 4.600 0 0 0 0-9.200c-2 0-3.700 1-6.300 4.600z" fill="none" stroke="#3a3a3a" stroke-width="2.3"/>
<g fill="none" stroke="#3a3a3a" stroke-width="2.8"><path d="M2437.6 1549.2a7.6 7.6 0 0 1 13-4.2"/><path d="M2452.2 1552.2a7.6 7.6 0 0 1-13 4.200"/></g>
<path d="M2453.5 1541.2v6.500h-6.500Z" fill="#3a3a3a"/><path d="M2436.300 1560.200v-6.500h6.500Z" fill="#3a3a3a"/>
<path d="M2110.5 1626V1583.4a5.5 5.5 0 0 1 5.5-5.500H2333.7V1626Z" fill="url(#g34)"/>
<path d="M2335.3 1577.9H2557V1626H2335.3Z" fill="url(#g34)"/>
<circle cx="2160.5" cy="1601.6" r="16" fill="url(#g45)"/>
<circle cx="2510.5" cy="1601.6" r="16" fill="url(#g46)"/>
<path d="M2159 1595.200l-6 6.400l6 6.400M2167 1595.200l-6 6.400l6 6.400" fill="none" stroke="#3a3a3a" stroke-width="2.3"/>
<path d="M2504 1595.200l6 6.400l-6 6.400M2512 1595.200l6 6.400l-6 6.400" fill="none" stroke="#3a3a3a" stroke-width="2.3"/>
<text x="2202.23" y="1614.4" font-size="35.95" fill="#3a3a3a" textLength="85.21" lengthAdjust="spacingAndGlyphs" stroke="#3a3a3a" stroke-width=".7" xml:space="preserve">Back</text>
<text x="2377.31" y="1614.4" font-size="35.95" fill="#3a3a3a" textLength="87.14" lengthAdjust="spacingAndGlyphs" stroke="#3a3a3a" stroke-width=".7" xml:space="preserve">Next</text>
<g transform="translate(2517.4 1549.4)" stroke="#e90f0f" stroke-width="9.5" stroke-linecap="butt">
<path d="M0 -21.5V21.5" transform="rotate(0)"/>
<path d="M0 -21.5V21.5" transform="rotate(60)"/>
<path d="M0 -21.5V21.5" transform="rotate(120)"/>
</g>
<rect x="2552" y="94" width="8" height="1534" fill="url(#g47)"/></svg></body></html>
